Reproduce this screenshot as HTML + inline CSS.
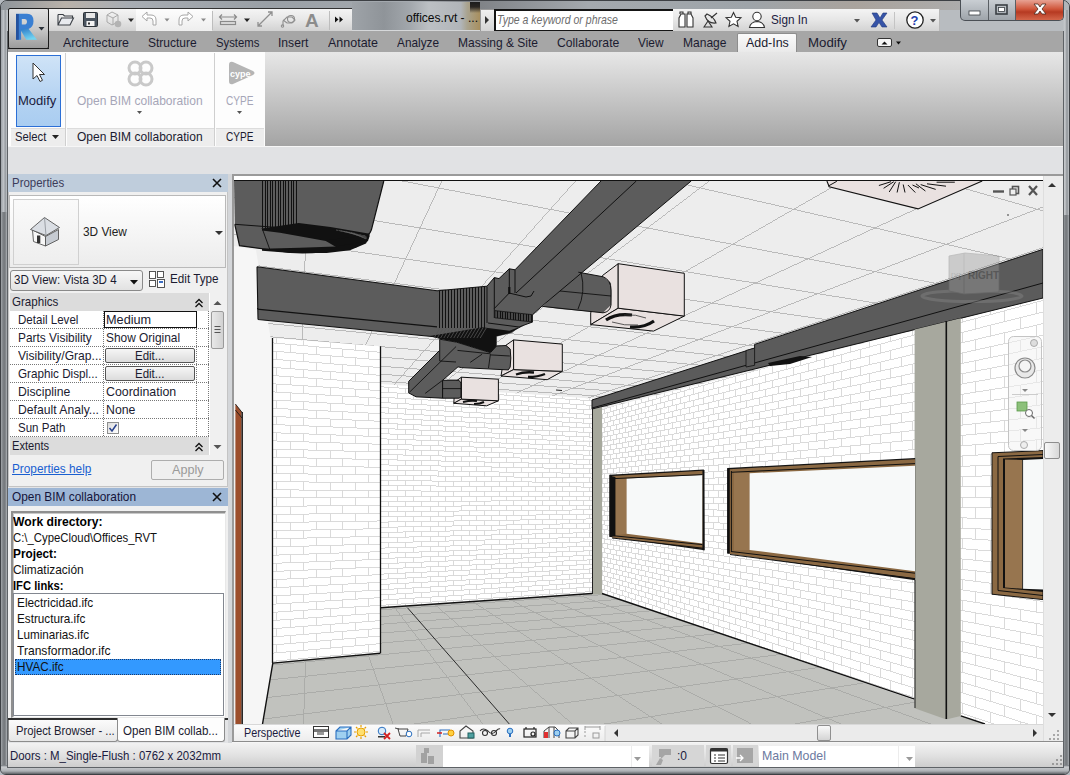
<!DOCTYPE html>
<html><head><meta charset="utf-8">
<style>
html,body{margin:0;padding:0;}
body{width:1070px;height:775px;overflow:hidden;position:relative;background:#b6bbc1;font-family:"Liberation Sans",sans-serif;font-size:12px;color:#1b1b30;}
.a{position:absolute;box-sizing:border-box;}
.t{position:absolute;white-space:nowrap;line-height:14px;}
svg{position:absolute;overflow:visible;}
</style></head><body>
<!-- window frame -->
<div class="a" style="left:0;top:0;width:1070px;height:775px;border:1px solid #3d4044;border-radius:7px 7px 6px 6px;background:linear-gradient(90deg,#9ea3a8 0px,#c3c7cb 3px,#8f9499 4px,#c0c4c8 6px,#b8bcc0 8px,#b8bcc0 1062px,#c6c9cc 1064px,#8e9398 1066px,#c2c5c8 1068px);"></div>
<div class="a" style="left:1px;top:1px;width:1068px;height:9px;border-radius:6px 6px 0 0;background:linear-gradient(90deg,#8f959b 0%,#b9b2aa 6%,#a8adb3 12%,#9aa0a6 25%,#a7acb1 40%,#7d8084 44%,#a4a9ae 55%,#9ea4a9 70%,#a9a39d 80%,#b0b5ba 100%);"></div>
<div class="a" style="left:1px;top:212px;width:6px;height:553px;background:linear-gradient(90deg,#a3a7ab 0px,#7d8185 2px,#75797d 4px,#b0b4b8 6px);"></div>
<div class="a" style="left:1063px;top:215px;width:6px;height:550px;background:linear-gradient(90deg,#b0b4b8 0px,#7d8185 2px,#75797d 4px,#a8acb0 6px);"></div>
<div class="a" style="left:1px;top:765px;width:1068px;height:9px;border-radius:0 0 5px 5px;background:linear-gradient(180deg,#6e7378 0px,#c8cbce 2px,#aeb2b6 6px,#5f6367 9px);"></div>
<div class="a" style="left:7px;top:31px;width:1057px;height:737px;border:1px solid #5e6266;border-top:none;"></div>
<!-- title glass text bg -->
<div class="a" style="left:352px;top:2px;width:128px;height:29px;background:linear-gradient(90deg,#9ea3a8 0%,#8f9499 25%,#a2a7ac 45%,#bcc0c4 60%,#b1b5b9 85%,#a9a38f 90%,#a88f5e 100%);border-bottom:1px solid #d6d8da;"></div>
<div class="a" style="left:470px;top:2px;width:10px;height:11px;background:linear-gradient(180deg,#1c1c1c 0%,#2a2622 45%,rgba(160,140,100,0) 100%);"></div>
<div class="a" style="left:48px;top:8px;width:304px;height:1px;background:#333;"></div>
<div class="t" style="left:406px;top:11px;font-size:12.4px;color:#0a0a0a;transform:scaleX(0.971);transform-origin:0 0;">offices.rvt - ...</div>

<!-- Quick access toolbar -->
<div class="a" style="left:48px;top:9px;width:304px;height:23px;border-bottom:1px solid #9a9a9a;background:linear-gradient(180deg,#f4f4f4 0%,#e8e8e8 45%,#d2d2d2 100%);"></div>
<div class="a" style="left:136px;top:9px;width:76px;height:22px;background:linear-gradient(180deg,#fdfdfd,#eeeeee);"></div>
<div class="a" style="left:212px;top:11px;width:1px;height:19px;background:#bdbdbd;"></div>
<div class="a" style="left:329px;top:11px;width:1px;height:19px;background:#bdbdbd;"></div>
<svg style="left:0;top:0" width="360" height="32" viewBox="0 0 360 32">
 <g fill="none" stroke="#3a3f45" stroke-width="1.1">
  <path d="M58 14.5 h5 l1.5 1.5 h8 v2.5" /><path d="M58 14.5 v10.5 h12 l3.5 -7 h-12 l-3.5 7" fill="#e8eaee"/>
 </g>
 <rect x="83.5" y="12.5" width="14" height="14" rx="1" fill="#4b5560" stroke="#2c3238"/>
 <rect x="86" y="13" width="9" height="5" fill="#e8e8e8"/><rect x="86.5" y="21" width="8" height="5" fill="#f4f4f4"/><rect x="88" y="22.5" width="2" height="2" fill="#333"/>
 <g fill="none" stroke="#a9a9a9" stroke-width="1"><path d="M107 15 l5 -3 l6 3 v7 l-6 3 l-5 -3z M107 15 l6 3 l5 -3 M113 18 v7"/></g>
 <circle cx="118" cy="24" r="3.3" fill="#b3b3b3"/>
 <path d="M128 18.5 h6 l-3 3.5z" fill="#2a2a2a"/>
 <path d="M142 16.5 l5 -4.5 v3 h4 q5 0 5 5 v5 h-3 v-4 q0 -3 -3 -3 h-3 v3z" fill="#fff" stroke="#a6a6a6"/>
 <path d="M164.5 18.5 h5 l-2.5 3z" fill="#8a8a8a"/>
 <path d="M193 16.5 l-5 -4.5 v3 h-4 q-5 0 -5 5 v5 h3 v-4 q0 -3 3 -3 h3 v3z" fill="#fff" stroke="#a6a6a6"/>
 <path d="M201 18.5 h5 l-2.5 3z" fill="#8a8a8a"/>
 <g stroke="#8a8a8a" fill="none" stroke-width="1.2"><path d="M220 17 h16 M222 14.5 l-2.5 2.5 l2.5 2.5 M234 14.5 l2.5 2.5 l-2.5 2.5"/><rect x="220.5" y="21.5" width="15" height="3" fill="#ddd"/></g>
 <path d="M244 18.5 h6 l-3 3.5z" fill="#222"/>
 <g stroke="#8f8f8f" fill="none" stroke-width="1.3"><path d="M258 26 l14 -14 M258 22 v4 h4 M268 12 h4 v4"/></g>
 <g stroke="#8f8f8f" fill="none" stroke-width="1.1"><path d="M283 26 v-5 l4 -4 h5 l3 3 l-3 3 h-5 l-4 -3"/><circle cx="282.5" cy="26" r="1.2"/><circle cx="291" cy="19" r="3.5"/></g>
 <text x="305" y="27" font-family="Liberation Sans" font-weight="bold" font-size="19" fill="#8c8c8c">A</text>
 <path d="M335 16.5 l3.5 3 l-3.5 3z M339.5 16.5 l3.5 3 l-3.5 3z" fill="#111"/>
</svg>

<!-- search -->
<div class="a" style="left:480px;top:9px;width:15px;height:23px;border:1px solid #9a9a9a;background:linear-gradient(180deg,#f0f0f0,#d4d4d4);"></div>
<svg style="left:0;top:0" width="500" height="32"><path d="M485 16 l4 4 l-4 4z" fill="#333"/></svg>
<div class="a" style="left:494px;top:9px;width:180px;height:23px;border:2px solid #151515;border-right:1px solid #151515;background:#fff;"></div>
<div class="t" style="left:497px;top:13px;font-style:italic;color:#6d6d6d;font-size:12.4px;transform:scaleX(0.850);transform-origin:0 0;">Type a keyword or phrase</div>
<!-- infocenter -->
<div class="a" style="left:673px;top:9px;width:267px;height:23px;border-bottom:1px solid #9a9a9a;border-right:1px solid #b8b8b8;background:linear-gradient(180deg,#f4f4f4 0%,#e6e6e6 50%,#d3d3d3 100%);"></div>
<svg style="left:0;top:0" width="960" height="32" viewBox="0 0 960 32">
 <g fill="#fff" stroke="#333" stroke-width="1.1">
  <path d="M679 27 v-9 l2 -4 h4 v13z M687 27 v-13 h4 l2 4 v9z"/><path d="M680 14 v-2 h3 v2 M688 14 v-2 h3 v2" fill="none"/>
 </g>
 <g fill="none" stroke="#333" stroke-width="1.1"><path d="M704 27 l4 -6 l4 6z"/><path d="M705 16 q3 8 11 7 q-2 -6 -9 -9z"/><path d="M711 18 l6 -5"/></g>
 <path d="M733.5 12.5 l2.2 4.8 l5.2 0.5 l-3.9 3.5 l1.1 5.2 l-4.6 -2.7 l-4.6 2.7 l1.1 -5.2 l-3.9 -3.5 l5.2 -0.5z" fill="#fff" stroke="#333" stroke-width="1.1"/>
 <g fill="#fff" stroke="#333" stroke-width="1.1"><circle cx="757" cy="16.5" r="4.2"/><path d="M749.5 27.5 q1 -5.5 7.5 -6 q6.5 0.5 7.5 6z"/></g>
 <path d="M854 19 h6 l-3 3.5z" fill="#555"/>
 <path d="M872 13 h5 l3 5 l3 -5 h4 l-5 7 l5 7 h-5 l-3 -4.5 l-3 4.5 h-5 l5 -7z" fill="#3654a8" stroke="#23397a" stroke-width="0.6"/>
 <rect x="894" y="12" width="1" height="17" fill="#c4c4c4"/>
 <circle cx="915" cy="20" r="8.2" fill="#fff" stroke="#222" stroke-width="1.3"/>
 <text x="910.5" y="25" font-family="Liberation Sans" font-weight="bold" font-size="13" fill="#1f3fb0">?</text>
 <path d="M930 19 h6 l-3 3.5z" fill="#555"/>
</svg>
<div class="t" style="left:771px;top:13px;font-size:12.4px;color:#1b1b40;transform:scaleX(0.944);transform-origin:0 0;">Sign In</div>

<!-- window buttons -->
<div class="a" style="left:960px;top:0;width:104px;height:21px;border:1px solid #4a4f55;border-top:none;border-radius:0 0 5px 5px;background:linear-gradient(180deg,#c9ced3,#9ea4aa);overflow:hidden;">
 <div class="a" style="left:27px;top:0;width:1px;height:20px;background:#5a5f64;"></div>
 <div class="a" style="left:54px;top:0;width:1px;height:20px;background:#5a5f64;"></div>
 <div class="a" style="left:55px;top:0;width:48px;height:20px;background:linear-gradient(180deg,#e8a293 0%,#d0563b 45%,#b63a22 60%,#d4664a 100%);"></div>
</div>
<svg style="left:0;top:0" width="1070" height="24" viewBox="0 0 1070 24">
 <rect x="969" y="11" width="11" height="4" fill="#fff" stroke="#3a3f44" stroke-width="0.8"/>
 <rect x="996" y="5" width="11" height="9" fill="none" stroke="#3a3f44" stroke-width="1.6"/><rect x="998.5" y="7.5" width="6" height="4" fill="#fff" stroke="#3a3f44" stroke-width="0.8"/>
 <path d="M1034 4 h4 l2 3 l2 -3 h4 l-4 5 l4 5 h-4 l-2 -3 l-2 3 h-4 l4 -5z" fill="#fff" stroke="#4a2a20" stroke-width="0.8"/>
</svg>

<!-- tab bar -->
<div class="a" style="left:8px;top:31px;width:1055px;height:21px;background:#a6a6a6;"></div>
<div class="a" style="left:8px;top:48px;width:41px;height:1px;background:#1c1c1c;"></div>
<div class="a" style="left:737px;top:33px;width:60px;height:20px;border:1px solid #8d8d8d;border-bottom:none;border-radius:2px 2px 0 0;background:linear-gradient(180deg,#fafafa,#e9e9e9);"></div>
<div class="t" style="left:63px;top:36px;font-size:12.4px;transform:scaleX(0.998);transform-origin:0 0;">Architecture</div>
<div class="t" style="left:148px;top:36px;font-size:12.4px;transform:scaleX(0.969);transform-origin:0 0;">Structure</div>
<div class="t" style="left:216px;top:36px;font-size:12.4px;transform:scaleX(0.913);transform-origin:0 0;">Systems</div>
<div class="t" style="left:278px;top:36px;font-size:12.4px;transform:scaleX(0.977);transform-origin:0 0;">Insert</div>
<div class="t" style="left:328px;top:36px;font-size:12.4px;transform:scaleX(1.008);transform-origin:0 0;">Annotate</div>
<div class="t" style="left:397px;top:36px;font-size:12.4px;transform:scaleX(0.953);transform-origin:0 0;">Analyze</div>
<div class="t" style="left:458px;top:36px;font-size:12.4px;transform:scaleX(0.968);transform-origin:0 0;">Massing &amp; Site</div>
<div class="t" style="left:557px;top:36px;font-size:12.4px;transform:scaleX(0.983);transform-origin:0 0;">Collaborate</div>
<div class="t" style="left:638px;top:36px;font-size:12.4px;transform:scaleX(0.957);transform-origin:0 0;">View</div>
<div class="t" style="left:683px;top:36px;font-size:12.4px;transform:scaleX(0.971);transform-origin:0 0;">Manage</div>
<div class="t" style="left:746px;top:36px;font-size:12.4px;transform:scaleX(1.002);transform-origin:0 0;">Add-Ins</div>
<div class="t" style="left:808px;top:36px;font-size:12.4px;transform:scaleX(1.068);transform-origin:0 0;">Modify</div>
<div class="a" style="left:877px;top:38px;width:15px;height:9px;border:1px solid #333;border-radius:2px;background:#f4f4f4;"></div>
<svg style="left:0;top:0" width="910" height="52"><path d="M881.5 44.5 l3 -3 l3 3z" fill="#111"/><path d="M896 41.5 h5 l-2.5 3z" fill="#111"/></svg>

<!-- R app button -->
<div class="a" style="left:8px;top:8px;width:41px;height:41px;border:1px solid #1c1c1c;border-radius:2px;background:linear-gradient(180deg,#e2e2e2 0%,#c9c9c9 50%,#9c9c9c 100%);"></div>
<svg style="left:0;top:0" width="60" height="60" viewBox="0 0 60 60">
 <defs><linearGradient id="rleg" x1="0" y1="0" x2="0.4" y2="1"><stop offset="0" stop-color="#2f7cc8"/><stop offset="1" stop-color="#72d4f2"/></linearGradient></defs>
 <path d="M16 13.7 H27 Q33.5 13.7 33.5 21 Q33.5 27 28.5 29 L21.1 31 V39.8 H16 Z M21.8 18.9 V24.4 H25 Q27 24.4 27 21.6 Q27 18.9 25 18.9 Z" fill="#3a7fd2" fill-rule="evenodd"/>
 <path d="M16 14 h2.8 v25.8 h-2.8z" fill="#24529e"/>
 <path d="M21.1 29 L28.5 28.8 L37 39.8 H26.3 L21.1 31z" fill="url(#rleg)"/>
 <path d="M38.5 27 h6 l-3 3.5z" fill="#2a3038"/>
</svg>

<!-- ribbon -->
<div class="a" style="left:8px;top:52px;width:1055px;height:95px;background:linear-gradient(180deg,#e7e7e7 0%,#a3a3a3 100%);"></div>
<div class="a" style="left:8px;top:52px;width:257px;height:94px;background:#fdfdfd;"></div>
<div class="a" style="left:8px;top:146px;width:1055px;height:1px;background:#f6f6f6;"></div>
<div class="a" style="left:11px;top:128px;width:54px;height:18px;background:#ededed;border-top:1px solid #dcdcdc;"></div>
<div class="a" style="left:67px;top:128px;width:147px;height:18px;background:#ededed;border-top:1px solid #dcdcdc;"></div>
<div class="a" style="left:216px;top:128px;width:48px;height:18px;background:#ededed;border-top:1px solid #dcdcdc;"></div>
<div class="a" style="left:65px;top:53px;width:1px;height:93px;background:#cfcfcf;"></div>
<div class="a" style="left:214px;top:53px;width:1px;height:93px;background:#cfcfcf;"></div>
<div class="a" style="left:16px;top:55px;width:45px;height:72px;border:1px solid #2b6fd6;background:linear-gradient(180deg,#cfe3f7 0%,#b5d3f2 60%,#a9cdf1 100%);"></div>
<svg style="left:0;top:0" width="270" height="150" viewBox="0 0 270 150">
 <path d="M33 63 v16 l4 -3.5 l3 6 l2.5 -1.2 l-3 -5.8 h5z" fill="#fff" stroke="#333" stroke-width="1"/>
 <g fill="none" stroke="#c9c9c9" stroke-width="3"><circle cx="135" cy="68" r="6"/><circle cx="146" cy="68" r="6"/><circle cx="135" cy="79" r="6"/><circle cx="146" cy="79" r="6"/></g>
 <path d="M229 65 q0 -4 4 -3 l20 9 q3 2 0 4 l-20 9 q-4 1 -4 -3z" fill="#b5b5b5"/>
 <text x="230" y="77" font-family="Liberation Sans" font-size="9" font-weight="bold" fill="#fff">cype</text>
 <path d="M137 111 h5 l-2.5 3z" fill="#555"/>
 <path d="M237 111 h5 l-2.5 3z" fill="#555"/>
 <path d="M52 135 h7 l-3.5 4z" fill="#222"/>
</svg>
<div class="t" style="left:18px;top:94px;font-size:12.4px;color:#1b1b40;transform:scaleX(1.052);transform-origin:0 0;">Modify</div>
<div class="t" style="left:77px;top:94px;font-size:12.4px;color:#a6a6b8;transform:scaleX(0.970);transform-origin:0 0;">Open BIM collaboration</div>
<div class="t" style="left:226px;top:94px;font-size:12.4px;color:#a6a6b8;transform:scaleX(0.815);transform-origin:0 0;">CYPE</div>
<div class="t" style="left:15px;top:130px;font-size:12.4px;transform:scaleX(0.909);transform-origin:0 0;">Select</div>
<div class="t" style="left:77px;top:130px;font-size:12.4px;transform:scaleX(0.970);transform-origin:0 0;">Open BIM collaboration</div>
<div class="t" style="left:226px;top:130px;font-size:12.4px;transform:scaleX(0.815);transform-origin:0 0;">CYPE</div>

<!-- strip under ribbon -->
<div class="a" style="left:8px;top:147px;width:1055px;height:27px;background:#e1e2e4;"></div>

<!-- left dock background -->
<div class="a" style="left:8px;top:174px;width:224px;height:569px;background:#e3e4e6;"></div>
<div class="a" style="left:228px;top:174px;width:4px;height:569px;background:#d4d6d9;"></div>
<!-- Properties -->
<div class="a" style="left:8px;top:174px;width:220px;height:18px;background:#bfcddc;"></div>
<div class="t" style="left:12px;top:176px;font-size:12.2px;color:#3c3c5a;transform:scaleX(0.940);transform-origin:0 0;">Properties</div>
<svg style="left:0;top:0" width="240" height="200"><path d="M213 179 l8 8 M221 179 l-8 8" stroke="#111" stroke-width="1.6"/></svg>
<div class="a" style="left:8px;top:192px;width:220px;height:295px;background:#f0f0f0;border:1px solid #c4c4c4;border-top:none;"></div>
<div class="a" style="left:9px;top:195px;width:217px;height:73px;border:1px solid #b9b9b9;background:linear-gradient(180deg,#ffffff,#ececec);"></div>
<div class="a" style="left:13px;top:199px;width:66px;height:66px;border:1px solid #d0d0d0;background:linear-gradient(180deg,#fafafa,#eeeeee);"></div>
<svg style="left:0;top:0" width="240" height="300" viewBox="0 0 240 300">
 <path d="M32.5 230 L45.5 236.5 V246 L33.5 241.5z" fill="#f7f7f7" stroke="#555" stroke-width="0.9"/>
 <path d="M45.5 236.5 L58.5 229.5 V239.5 L45.5 246z" fill="#c6cbd2" stroke="#555" stroke-width="0.9"/>
 <path d="M30.5 229.5 L44.5 217.5 L59.5 227.5 L46 235.5z" fill="#dadee4" stroke="#555" stroke-width="0.9"/>
 <path d="M44.5 217.5 L46 235.5" stroke="#8a8f96" stroke-width="0.8"/>
 <rect x="37" y="235.5" width="3.3" height="7.5" fill="#333"/>
 <path d="M215 231 h8 l-4 4z" fill="#333"/>
 <g fill="#fff" stroke="#444" stroke-width="0.9"><rect x="149.5" y="271.5" width="6" height="7"/><rect x="149.5" y="280.5" width="6" height="6"/><rect x="157.5" y="271.5" width="6" height="6"/><rect x="157.5" y="279.5" width="7" height="8"/></g>
 <rect x="159" y="281" width="4" height="2" fill="#3b6dc2"/>
</svg>
<div class="t" style="left:83px;top:225px;font-size:12.2px;color:#222;transform:scaleX(0.972);transform-origin:0 0;">3D View</div>
<div class="a" style="left:10px;top:270px;width:133px;height:21px;border:1px solid #8a8a8a;border-radius:3px;background:linear-gradient(180deg,#f7f7f7,#e2e2e2);"></div>
<svg style="left:0;top:0" width="240" height="300"><path d="M130 280 h8 l-4 4.5z" fill="#111"/></svg>
<div class="t" style="left:14px;top:273px;font-size:12.2px;transform:scaleX(0.951);transform-origin:0 0;">3D View: Vista 3D 4</div>
<div class="t" style="left:170px;top:272px;font-size:12.2px;transform:scaleX(0.959);transform-origin:0 0;">Edit Type</div>
<!-- grid -->
<div class="a" style="left:10px;top:293px;width:200px;height:162px;background:#fff;"></div>
<div class="a" style="left:10px;top:293px;width:199px;height:18px;background:#dcdcdc;"></div>
<div class="a" style="left:10px;top:437px;width:199px;height:18px;background:#dcdcdc;"></div>
<div class="t" style="left:12px;top:295px;font-size:12.2px;transform:scaleX(0.949);transform-origin:0 0;">Graphics</div>
<div class="t" style="left:12px;top:439px;font-size:12.2px;transform:scaleX(0.913);transform-origin:0 0;">Extents</div>
<svg style="left:0;top:0" width="240" height="460" viewBox="0 0 240 460">
 <path d="M195.5 303 l3.5 -3.5 l3.5 3.5 M195.5 307 l3.5 -3.5 l3.5 3.5" fill="none" stroke="#111" stroke-width="1.3"/>
 <path d="M195.5 447 l3.5 -3.5 l3.5 3.5 M195.5 451 l3.5 -3.5 l3.5 3.5" fill="none" stroke="#111" stroke-width="1.3"/>
 <g stroke="#777" stroke-width="1" stroke-dasharray="1 1">
  <path d="M10 328.5 H209 M10 346.5 H209 M10 364.5 H209 M10 382.5 H209 M10 400.5 H209 M10 418.5 H209 M10 436.5 H209"/>
  <path d="M103.5 311 V437 M196.5 311 V437 M208.5 311 V437"/>
 </g>
</svg>
<div class="a" style="left:104px;top:311px;width:93px;height:17px;border:1px solid #111;background:#fff;"></div>
<div class="t" style="left:18px;top:313px;font-size:12.2px;transform:scaleX(0.948);transform-origin:0 0;">Detail Level</div>
<div class="t" style="left:106px;top:313px;font-size:12.2px;transform:scaleX(1.042);transform-origin:0 0;">Medium</div>
<div class="t" style="left:18px;top:331px;font-size:12.2px;transform:scaleX(0.976);transform-origin:0 0;">Parts Visibility</div>
<div class="t" style="left:106px;top:331px;font-size:12.2px;transform:scaleX(0.977);transform-origin:0 0;">Show Original</div>
<div class="t" style="left:18px;top:349px;font-size:12.2px;transform:scaleX(0.990);transform-origin:0 0;">Visibility/Grap...</div>
<div class="a" style="left:105px;top:348px;width:90px;height:15px;border:1px solid #555;border-radius:2px;background:linear-gradient(180deg,#f6f6f6,#dcdcdc);"></div>
<div class="t" style="left:135px;top:349px;font-size:12.2px;transform:scaleX(0.943);transform-origin:0 0;">Edit...</div>
<div class="t" style="left:18px;top:367px;font-size:12.2px;transform:scaleX(0.958);transform-origin:0 0;">Graphic Displ...</div>
<div class="a" style="left:105px;top:366px;width:90px;height:15px;border:1px solid #555;border-radius:2px;background:linear-gradient(180deg,#f6f6f6,#dcdcdc);"></div>
<div class="t" style="left:135px;top:367px;font-size:12.2px;transform:scaleX(0.943);transform-origin:0 0;">Edit...</div>
<div class="t" style="left:18px;top:385px;font-size:12.2px;transform:scaleX(1.001);transform-origin:0 0;">Discipline</div>
<div class="t" style="left:106px;top:385px;font-size:12.2px;transform:scaleX(1.016);transform-origin:0 0;">Coordination</div>
<div class="t" style="left:18px;top:403px;font-size:12.2px;transform:scaleX(0.999);transform-origin:0 0;">Default Analy...</div>
<div class="t" style="left:106px;top:403px;font-size:12.2px;transform:scaleX(1.009);transform-origin:0 0;">None</div>
<div class="t" style="left:18px;top:421px;font-size:12.2px;transform:scaleX(0.947);transform-origin:0 0;">Sun Path</div>
<div class="a" style="left:107px;top:422px;width:12px;height:12px;border:1px solid #8e8f8f;background:linear-gradient(135deg,#dcdcdc,#fff);"></div>
<svg style="left:0;top:0" width="240" height="460"><path d="M109.5 428 l2.5 3 l4.5 -6.5" fill="none" stroke="#27408b" stroke-width="1.5"/></svg>
<!-- prop scrollbar -->
<div class="a" style="left:210px;top:293px;width:15px;height:162px;background:#f0f0f0;"></div>
<div class="a" style="left:211px;top:311px;width:13px;height:38px;border:1px solid #9a9a9a;border-radius:2px;background:linear-gradient(90deg,#e8e8e8,#d2d2d2);"></div>
<svg style="left:0;top:0" width="240" height="460">
 <path d="M213.5 305 l4 -4 l4 4z" fill="#555"/><path d="M213.5 445 l4 4 l4 -4z" fill="#555"/>
 <path d="M214.5 326.5 h6 M214.5 329.5 h6 M214.5 332.5 h6" stroke="#555" stroke-width="1"/>
</svg>
<div class="t" style="left:12px;top:462px;font-size:12.2px;color:#1a5fd0;text-decoration:underline;transform:scaleX(0.968);transform-origin:0 0;">Properties help</div>
<div class="a" style="left:151px;top:460px;width:73px;height:20px;border:1px solid #adadad;border-radius:2px;background:#efefef;"></div>
<div class="t" style="left:172px;top:463px;font-size:12.2px;color:#9a9a9a;transform:scaleX(1.033);transform-origin:0 0;">Apply</div>

<!-- Open BIM panel -->
<div class="a" style="left:8px;top:488px;width:220px;height:18px;background:#9db6d5;"></div>
<div class="t" style="left:12px;top:490px;font-size:12.2px;color:#14143a;transform:scaleX(0.974);transform-origin:0 0;">Open BIM collaboration</div>
<svg style="left:0;top:0" width="240" height="520"><path d="M213 493 l8 8 M221 493 l-8 8" stroke="#111" stroke-width="1.6"/></svg>
<div class="a" style="left:8px;top:506px;width:220px;height:213px;background:#f0f0f0;"></div>
<div class="a" style="left:11px;top:511px;width:215px;height:207px;border:2px solid #8f8f8f;border-right:1px solid #e8e8e8;border-bottom:1px solid #e8e8e8;background:#fff;box-shadow:inset 1px 1px 0 #c8c8c8;"></div>
<div class="t" style="left:13px;top:515px;font-size:12.2px;font-weight:bold;color:#000;transform:scaleX(0.997);transform-origin:0 0;">Work directory:</div>
<div class="t" style="left:13px;top:531px;font-size:12.2px;color:#111;transform:scaleX(0.931);transform-origin:0 0;">C:\_CypeCloud\Offices_RVT</div>
<div class="t" style="left:13px;top:547px;font-size:12.2px;font-weight:bold;color:#000;transform:scaleX(0.969);transform-origin:0 0;">Project:</div>
<div class="t" style="left:13px;top:563px;font-size:12.2px;color:#111;transform:scaleX(0.974);transform-origin:0 0;">Climatización</div>
<div class="t" style="left:13px;top:579px;font-size:12.2px;font-weight:bold;color:#000;transform:scaleX(0.919);transform-origin:0 0;">IFC links:</div>
<div class="a" style="left:13px;top:593px;width:211px;height:123px;border:1px solid #828790;background:#fff;"></div>
<div class="t" style="left:17px;top:596px;font-size:12.2px;color:#111;transform:scaleX(0.971);transform-origin:0 0;">Electricidad.ifc</div>
<div class="t" style="left:17px;top:612px;font-size:12.2px;color:#111;transform:scaleX(0.960);transform-origin:0 0;">Estructura.ifc</div>
<div class="t" style="left:17px;top:628px;font-size:12.2px;color:#111;transform:scaleX(0.958);transform-origin:0 0;">Luminarias.ifc</div>
<div class="t" style="left:17px;top:644px;font-size:12.2px;color:#111;transform:scaleX(0.990);transform-origin:0 0;">Transformador.ifc</div>
<div class="a" style="left:15px;top:659px;width:206px;height:16px;background:#3399ff;border:1px dotted #1d3a6a;"></div>
<div class="t" style="left:17px;top:660px;font-size:12.2px;color:#111;transform:scaleX(0.960);transform-origin:0 0;">HVAC.ifc</div>
<!-- dock tabs -->
<div class="a" style="left:8px;top:718px;width:220px;height:25px;background:#e3e4e6;"></div>
<div class="a" style="left:8px;top:718px;width:220px;height:2px;background:#2e2e2e;"></div>
<div class="a" style="left:8px;top:720px;width:110px;height:22px;border:1px solid #8c8c8c;border-top:none;border-radius:0 0 3px 3px;background:linear-gradient(180deg,#fbfbfb,#e6e6e6);"></div>
<div class="a" style="left:117px;top:718px;width:108px;height:24px;border:1px solid #8c8c8c;border-top:none;border-radius:0 0 3px 3px;background:#fdfdfd;"></div>
<div class="t" style="left:16px;top:724px;font-size:12.2px;transform:scaleX(0.922);transform-origin:0 0;">Project Browser - ...</div>
<div class="t" style="left:123px;top:724px;font-size:12.2px;transform:scaleX(0.947);transform-origin:0 0;">Open BIM collab...</div>

<!-- viewport frame -->
<div class="a" style="left:232px;top:174px;width:831px;height:569px;background:#f0f0f0;border:2px solid #9a9a9a;border-right:none;"></div>
<div class="a" style="left:234px;top:176px;width:809px;height:5px;background:#fff;border-bottom:1px solid #111;"></div>
<svg style="left:0;top:0" width="1070" height="775" viewBox="0 0 1070 775"><defs><clipPath id="vpc"><rect x="234" y="181" width="809" height="543"/></clipPath></defs><g clip-path="url(#vpc)"><rect x="234" y="181" width="809" height="543" fill="#ededed"/>
<path d="M234.0 487.7 L250.2 489.5 M234.0 487.3 L252.4 489.5 M234.0 486.9 L254.7 489.5 M234.0 486.5 L256.9 489.5 M234.0 486.0 L259.2 489.5 M234.0 485.5 L261.4 489.5 M234.0 484.8 L263.6 489.5 M234.0 484.1 L265.9 489.5 M234.0 483.3 L268.1 489.5 M234.0 482.4 L270.3 489.5 M234.0 481.3 L272.5 489.5 M234.0 479.9 L274.7 489.5 M234.0 478.3 L276.9 489.5 M234.0 476.2 L279.1 489.6 M234.0 473.5 L281.3 489.6 M234.0 469.9 L283.5 489.6 M234.0 464.9 L285.6 489.6 M234.0 457.3 L287.8 489.6 M234.0 444.5 L290.0 489.6 M234.0 418.3 L292.1 489.6 M234.0 334.6 L294.3 489.6 M308.0 181.0 L296.4 489.6 M441.8 181.0 L298.6 489.6 M575.5 181.0 L300.7 489.6 M709.3 181.0 L302.9 489.6 M843.0 181.0 L305.0 489.6 M976.8 181.0 L307.1 489.6 M1043.0 207.0 L309.2 489.6 M1043.0 247.6 L311.3 489.6 M1043.0 278.1 L313.4 489.7 M1043.0 302.0 L315.5 489.7 M1043.0 321.1 L317.6 489.7 M1043.0 336.7 L319.7 489.7 M1043.0 349.8 L321.8 489.7 M1043.0 360.8 L323.9 489.7 M1043.0 370.3 L326.0 489.7 M1043.0 378.6 L328.0 489.7 M1043.0 385.8 L330.1 489.7 M1043.0 392.2 L332.2 489.7 M1043.0 397.8 L334.2 489.7 M1043.0 402.9 L336.3 489.7 M1043.0 407.5 L338.3 489.7 M1043.0 411.6 L340.4 489.7 M1043.0 415.4 L342.4 489.7 M1043.0 418.8 L344.4 489.7 M1043.0 421.9 L346.5 489.7 M1043.0 424.8 L348.5 489.8 M1043.0 427.5 L350.5 489.8 M1043.0 430.0 L352.5 489.8 M1043.0 432.3 L354.5 489.8 M938.0 181.0 L1043.0 210.9 M670.2 181.0 L1043.0 266.5 M402.4 181.0 L1043.0 303.9 M234.0 197.4 L1043.0 330.7 M234.0 234.1 L1043.0 351.0 M234.0 262.7 L1043.0 366.7 M234.0 285.6 L1043.0 379.4 M234.0 304.5 L1043.0 389.8 M234.0 320.2 L1043.0 398.4 M234.0 333.5 L1043.0 405.8 M234.0 344.9 L1043.0 412.1 M234.0 354.8 L1043.0 417.5 M234.0 363.5 L1043.0 422.3 M234.0 371.2 L1043.0 426.6 M234.0 378.0 L1043.0 430.3 M234.0 384.1 L1043.0 433.7 M234.0 389.6 L1043.0 436.7 M234.0 394.6 L1043.0 439.5 M234.0 399.1 L1043.0 442.0 M234.0 403.2 L1043.0 444.2 M234.0 407.0 L1043.0 446.3 M234.0 410.5 L1043.0 448.3 M234.0 413.7 L1043.0 450.0 M234.0 416.7 L1043.0 451.7 M234.0 419.5 L1043.0 453.2 M234.0 422.1 L1043.0 454.6 M234.0 424.5 L1043.0 456.0 M234.0 426.7 L1043.0 457.2 M234.0 428.9 L1043.0 458.4 M234.0 430.8 L1043.0 459.5 M234.0 432.7 L1043.0 460.5 M234.0 434.5 L1043.0 461.5 M234.0 436.1 L1043.0 462.4 M234.0 437.7 L1043.0 463.3 M234.0 439.2 L1043.0 464.1 M234.0 440.6 L1043.0 464.9 M234.0 442.0 L1043.0 465.6 M234.0 443.3 L1043.0 466.3 M234.0 444.5 L1043.0 467.0 M234.0 445.6 L1043.0 467.6 M234.0 446.8 L1043.0 468.2" stroke="#b4b4b4" stroke-width="0.9" fill="none" shape-rendering="crispEdges"/>
<path d="M262.5 724.0 L272.8 663.1 L380.3 653.2 L380.3 607.8 L592.0 593.5 L602.0 593.5 L985.0 724.0Z" fill="#c1c2be"/>
<clipPath id="flc"><path d="M262.5 724 L272.8 663.1 L380.3 653.2 L380.3 607.8 L592 593.5 L602 593.5 L985 724Z"/></clipPath>
<g clip-path="url(#flc)">
<path d="M258.1 502.1 L234.0 504.5 M260.2 502.1 L234.0 504.8 M262.3 502.1 L234.0 505.1 M264.4 502.1 L234.0 505.5 M266.4 502.1 L234.0 505.8 M268.5 502.1 L234.0 506.3 M270.6 502.1 L234.0 506.7 M272.6 502.1 L234.0 507.2 M274.7 502.1 L234.0 507.8 M276.7 502.1 L234.0 508.4 M278.8 502.1 L234.0 509.1 M280.8 502.1 L234.0 509.9 M282.8 502.1 L234.0 510.9 M284.9 502.1 L234.0 511.9 M286.9 502.1 L234.0 513.1 M288.9 502.0 L234.0 514.6 M290.9 502.0 L234.0 516.4 M292.9 502.0 L234.0 518.5 M295.0 502.0 L234.0 521.1 M297.0 502.0 L234.0 524.5 M299.0 502.0 L234.0 529.1 M300.9 502.0 L234.0 535.4 M302.9 502.0 L234.0 544.8 M304.9 502.0 L234.0 560.3 M306.9 502.0 L234.0 590.7 M308.9 502.0 L234.0 677.1 M310.8 502.0 L303.5 724.0 M312.8 502.0 L393.1 724.0 M314.8 502.0 L482.7 724.0 M316.7 502.0 L572.3 724.0 M318.7 502.0 L661.8 724.0 M320.6 502.0 L751.4 724.0 M322.6 502.0 L841.0 724.0 M324.5 501.9 L930.6 724.0 M326.4 501.9 L1020.1 724.0 M328.4 501.9 L1043.0 705.0 M330.3 501.9 L1043.0 684.1 M332.2 501.9 L1043.0 666.9 M334.1 501.9 L1043.0 652.7 M336.0 501.9 L1043.0 640.6 M337.9 501.9 L1043.0 630.3 M339.8 501.9 L1043.0 621.4 M341.7 501.9 L1043.0 613.5 M343.6 501.9 L1043.0 606.7 M345.5 501.9 L1043.0 600.5 M347.4 501.9 L1043.0 595.1 M349.3 501.9 L1043.0 590.1 M351.2 501.9 L1043.0 585.7 M353.1 501.9 L1043.0 581.6 M354.9 501.9 L1043.0 577.9 M356.8 501.9 L1043.0 574.6 M358.7 501.8 L1043.0 571.4 M360.5 501.8 L1043.0 568.6 M362.4 501.8 L1043.0 565.9 M364.2 501.8 L1043.0 563.4 M366.1 501.8 L1043.0 561.1 M367.9 501.8 L1043.0 559.0 M369.7 501.8 L1043.0 557.0 M371.6 501.8 L1043.0 555.1 M373.4 501.8 L1043.0 553.4 M234.0 546.4 L1043.0 524.3 M234.0 547.6 L1043.0 524.9 M234.0 548.8 L1043.0 525.6 M234.0 550.1 L1043.0 526.3 M234.0 551.4 L1043.0 527.1 M234.0 552.9 L1043.0 527.8 M234.0 554.4 L1043.0 528.7 M234.0 555.9 L1043.0 529.5 M234.0 557.6 L1043.0 530.4 M234.0 559.3 L1043.0 531.4 M234.0 561.2 L1043.0 532.4 M234.0 563.2 L1043.0 533.5 M234.0 565.3 L1043.0 534.7 M234.0 567.5 L1043.0 535.9 M234.0 569.9 L1043.0 537.2 M234.0 572.4 L1043.0 538.6 M234.0 575.2 L1043.0 540.2 M234.0 578.1 L1043.0 541.8 M234.0 581.3 L1043.0 543.5 M234.0 584.7 L1043.0 545.4 M234.0 588.5 L1043.0 547.5 M234.0 592.5 L1043.0 549.7 M234.0 596.9 L1043.0 552.2 M234.0 601.8 L1043.0 554.9 M234.0 607.2 L1043.0 557.8 M234.0 613.1 L1043.0 561.1 M234.0 619.7 L1043.0 564.8 M234.0 627.2 L1043.0 568.9 M234.0 635.5 L1043.0 573.5 M234.0 645.1 L1043.0 578.7 M234.0 656.0 L1043.0 584.8 M234.0 668.7 L1043.0 591.8 M234.0 683.6 L1043.0 600.0 M234.0 701.3 L1043.0 609.8 M234.0 722.7 L1043.0 621.6 M413.8 724.0 L1043.0 636.2 M604.2 724.0 L1043.0 654.6 M794.6 724.0 L1043.0 678.7 M985.0 724.0 L1043.0 711.5" stroke="#a8aaa6" stroke-width="0.9" fill="none" shape-rendering="crispEdges"/>
<path d="M407.5 607.8 L509.3 724.0" stroke="#2a2a2a" stroke-width="1" fill="none"/>
</g>
<path d="M234.0 246.0 L256.0 250.0 L270.6 338.0 L272.5 338.0 L272.5 663.0 L262.5 724.0 L234.0 724.0Z" fill="#f6f6f6"/>
<path d="M272.5 338.0 L380.5 346.3 L380.5 653.2 L272.8 663.1Z" fill="#ffffff"/>
<clipPath id="pw"><path d="M272.5 338.0 L380.5 346.3 L380.5 653.2 L272.8 663.1Z"/></clipPath>
<path clip-path="url(#pw)" d="M248.3 315.9 L473.0 338.6 M248.3 324.2 L473.0 345.9 M248.3 332.5 L473.0 353.1 M248.3 340.8 L473.0 360.4 M248.3 349.1 L473.0 367.6 M248.3 357.3 L473.0 374.8 M248.3 365.6 L473.0 382.1 M248.3 373.9 L473.0 389.3 M248.3 382.2 L473.0 396.6 M248.3 390.4 L473.0 403.8 M248.3 398.7 L473.0 411.0 M248.3 407.0 L473.0 418.3 M248.3 415.3 L473.0 425.5 M248.3 423.5 L473.0 432.8 M248.3 431.8 L473.0 440.0 M248.3 440.1 L473.0 447.2 M248.3 448.4 L473.0 454.5 M248.3 456.7 L473.0 461.7 M248.3 464.9 L473.0 469.0 M248.3 473.2 L473.0 476.2 M248.3 481.5 L473.0 483.4 M248.3 489.8 L473.0 490.7 M248.3 498.0 L473.0 497.9 M248.3 506.3 L473.0 505.2 M248.3 514.6 L473.0 512.4 M248.3 522.9 L473.0 519.6 M248.3 531.2 L473.0 526.9 M248.3 539.4 L473.0 534.1 M248.3 547.7 L473.0 541.4 M248.3 556.0 L473.0 548.6 M248.3 564.3 L473.0 555.8 M248.3 572.5 L473.0 563.1 M248.3 580.8 L473.0 570.3 M248.3 589.1 L473.0 577.6 M248.3 597.4 L473.0 584.8 M248.3 605.7 L473.0 592.0 M248.3 613.9 L473.0 599.3 M248.3 622.2 L473.0 606.5 M248.3 630.5 L473.0 613.7 M248.3 638.8 L473.0 621.0 M248.3 647.0 L473.0 628.2 M248.3 655.3 L473.0 635.5 M248.3 663.6 L473.0 642.7 M248.3 671.9 L473.0 649.9 M248.3 680.2 L473.0 657.2 M248.3 688.4 L473.0 664.4 M248.3 696.7 L473.0 671.7 M219.3 313.0 L219.3 321.4 M248.3 315.9 L248.3 324.2 M276.4 318.8 L276.4 326.9 M303.6 321.5 L303.6 329.6 M330.0 324.2 L330.0 332.1 M355.6 326.8 L355.6 334.6 M380.5 329.3 L380.5 337.0 M404.6 331.7 L404.6 339.3 M428.0 334.1 L428.0 341.6 M450.8 336.4 L450.8 343.8 M473.0 338.6 L473.0 345.9 M233.9 322.8 L233.9 331.2 M262.4 325.6 L262.4 333.8 M290.1 328.3 L290.1 336.3 M316.9 330.8 L316.9 338.8 M342.9 333.3 L342.9 341.2 M368.1 335.8 L368.1 343.5 M392.6 338.1 L392.6 345.7 M416.4 340.4 L416.4 347.9 M439.5 342.7 L439.5 350.1 M462.0 344.8 L462.0 352.1 M483.8 346.9 L483.8 354.1 M219.3 329.8 L219.3 338.2 M248.3 332.5 L248.3 340.8 M276.4 335.1 L276.4 343.2 M303.6 337.6 L303.6 345.6 M330.0 340.0 L330.0 347.9 M355.6 342.4 L355.6 350.1 M380.5 344.6 L380.5 352.3 M404.6 346.8 L404.6 354.4 M428.0 349.0 L428.0 356.4 M450.8 351.1 L450.8 358.4 M473.0 353.1 L473.0 360.4 M233.9 339.5 L233.9 347.9 M262.4 342.0 L262.4 350.2 M290.1 344.4 L290.1 352.5 M316.9 346.8 L316.9 354.7 M342.9 349.0 L342.9 356.9 M368.1 351.2 L368.1 358.9 M392.6 353.4 L392.6 361.0 M416.4 355.4 L416.4 362.9 M439.5 357.4 L439.5 364.8 M462.0 359.4 L462.0 366.7 M483.8 361.3 L483.8 368.5 M219.3 346.7 L219.3 355.1 M248.3 349.1 L248.3 357.3 M276.4 351.4 L276.4 359.5 M303.6 353.6 L303.6 361.6 M330.0 355.8 L330.0 363.7 M355.6 357.9 L355.6 365.7 M380.5 360.0 L380.5 367.6 M404.6 362.0 L404.6 369.5 M428.0 363.9 L428.0 371.3 M450.8 365.8 L450.8 373.1 M473.0 367.6 L473.0 374.8 M233.9 356.2 L233.9 364.6 M262.4 358.4 L262.4 366.6 M290.1 360.6 L290.1 368.7 M316.9 362.7 L316.9 370.6 M342.9 364.7 L342.9 372.5 M368.1 366.7 L368.1 374.4 M392.6 368.6 L392.6 376.2 M416.4 370.4 L416.4 377.9 M439.5 372.2 L439.5 379.6 M462.0 374.0 L462.0 381.3 M483.8 375.7 L483.8 382.9 M219.3 363.5 L219.3 371.9 M248.3 365.6 L248.3 373.9 M276.4 367.7 L276.4 375.8 M303.6 369.7 L303.6 377.7 M330.0 371.6 L330.0 379.5 M355.6 373.5 L355.6 381.3 M380.5 375.3 L380.5 383.0 M404.6 377.1 L404.6 384.6 M428.0 378.8 L428.0 386.2 M450.8 380.5 L450.8 387.8 M473.0 382.1 L473.0 389.3 M233.9 372.9 L233.9 381.2 M262.4 374.9 L262.4 383.1 M290.1 376.8 L290.1 384.8 M316.9 378.6 L316.9 386.6 M342.9 380.4 L342.9 388.2 M368.1 382.1 L368.1 389.8 M392.6 383.8 L392.6 391.4 M416.4 385.4 L416.4 392.9 M439.5 387.0 L439.5 394.4 M462.0 388.6 L462.0 395.9 M483.8 390.1 L483.8 397.3 M219.3 380.3 L219.3 388.7 M248.3 382.2 L248.3 390.4 M276.4 384.0 L276.4 392.1 M303.6 385.7 L303.6 393.7 M330.0 387.4 L330.0 395.3 M355.6 389.0 L355.6 396.8 M380.5 390.6 L380.5 398.3 M404.6 392.2 L404.6 399.7 M428.0 393.7 L428.0 401.1 M450.8 395.1 L450.8 402.5 M473.0 396.6 L473.0 403.8 M233.9 389.6 L233.9 397.9 M262.4 391.3 L262.4 399.5 M290.1 392.9 L290.1 401.0 M316.9 394.5 L316.9 402.5 M342.9 396.1 L342.9 403.9 M368.1 397.6 L368.1 405.3 M392.6 399.0 L392.6 406.6 M416.4 400.4 L416.4 407.9 M439.5 401.8 L439.5 409.2 M462.0 403.1 L462.0 410.4 M483.8 404.4 L483.8 411.6 M219.3 397.1 L219.3 405.5 M248.3 398.7 L248.3 407.0 M276.4 400.3 L276.4 408.4 M303.6 401.8 L303.6 409.8 M330.0 403.2 L330.0 411.1 M355.6 404.6 L355.6 412.4 M380.5 406.0 L380.5 413.6 M404.6 407.3 L404.6 414.8 M428.0 408.6 L428.0 416.0 M450.8 409.8 L450.8 417.2 M473.0 411.0 L473.0 418.3 M233.9 406.3 L233.9 414.6 M262.4 407.7 L262.4 415.9 M290.1 409.1 L290.1 417.2 M316.9 410.4 L316.9 418.4 M342.9 411.7 L342.9 419.6 M368.1 413.0 L368.1 420.7 M392.6 414.2 L392.6 421.9 M416.4 415.4 L416.4 422.9 M439.5 416.6 L439.5 424.0 M462.0 417.7 L462.0 425.0 M483.8 418.8 L483.8 426.0 M219.3 413.9 L219.3 422.4 M248.3 415.3 L248.3 423.5 M276.4 416.6 L276.4 424.7 M303.6 417.8 L303.6 425.8 M330.0 419.0 L330.0 426.9 M355.6 420.2 L355.6 427.9 M380.5 421.3 L380.5 429.0 M404.6 422.4 L404.6 430.0 M428.0 423.5 L428.0 430.9 M450.8 424.5 L450.8 431.9 M473.0 425.5 L473.0 432.8 M233.9 423.0 L233.9 431.3 M262.4 424.1 L262.4 432.3 M290.1 425.3 L290.1 433.3 M316.9 426.4 L316.9 434.3 M342.9 427.4 L342.9 435.3 M368.1 428.5 L368.1 436.2 M392.6 429.5 L392.6 437.1 M416.4 430.4 L416.4 437.9 M439.5 431.4 L439.5 438.8 M462.0 432.3 L462.0 439.6 M483.8 433.2 L483.8 440.4 M219.3 430.8 L219.3 439.2 M248.3 431.8 L248.3 440.1 M276.4 432.8 L276.4 441.0 M303.6 433.8 L303.6 441.9 M330.0 434.8 L330.0 442.7 M355.6 435.7 L355.6 443.5 M380.5 436.6 L380.5 444.3 M404.6 437.5 L404.6 445.1 M428.0 438.4 L428.0 445.8 M450.8 439.2 L450.8 446.5 M473.0 440.0 L473.0 447.2 M233.9 439.6 L233.9 448.0 M262.4 440.6 L262.4 448.8 M290.1 441.4 L290.1 449.5 M316.9 442.3 L316.9 450.2 M342.9 443.1 L342.9 451.0 M368.1 443.9 L368.1 451.6 M392.6 444.7 L392.6 452.3 M416.4 445.4 L416.4 452.9 M439.5 446.2 L439.5 453.6 M462.0 446.9 L462.0 454.2 M483.8 447.6 L483.8 454.8 M219.3 447.6 L219.3 456.0 M248.3 448.4 L248.3 456.7 M276.4 449.1 L276.4 457.3 M303.6 449.9 L303.6 457.9 M330.0 450.6 L330.0 458.5 M355.6 451.3 L355.6 459.1 M380.5 452.0 L380.5 459.6 M404.6 452.6 L404.6 460.2 M428.0 453.3 L428.0 460.7 M450.8 453.9 L450.8 461.2 M473.0 454.5 L473.0 461.7 M233.9 456.3 L233.9 464.7 M262.4 457.0 L262.4 465.2 M290.1 457.6 L290.1 465.7 M316.9 458.2 L316.9 466.2 M342.9 458.8 L342.9 466.6 M368.1 459.4 L368.1 467.1 M392.6 459.9 L392.6 467.5 M416.4 460.4 L416.4 467.9 M439.5 461.0 L439.5 468.4 M462.0 461.5 L462.0 468.8 M483.8 462.0 L483.8 469.2 M219.3 464.4 L219.3 472.8 M248.3 464.9 L248.3 473.2 M276.4 465.4 L276.4 473.6 M303.6 465.9 L303.6 473.9 M330.0 466.4 L330.0 474.3 M355.6 466.9 L355.6 474.6 M380.5 467.3 L380.5 475.0 M404.6 467.7 L404.6 475.3 M428.0 468.2 L428.0 475.6 M450.8 468.6 L450.8 475.9 M473.0 469.0 L473.0 476.2 M233.9 473.0 L233.9 481.4 M262.4 473.4 L262.4 481.6 M290.1 473.8 L290.1 481.9 M316.9 474.1 L316.9 482.1 M342.9 474.5 L342.9 482.3 M368.1 474.8 L368.1 482.5 M392.6 475.1 L392.6 482.7 M416.4 475.4 L416.4 482.9 M439.5 475.8 L439.5 483.1 M462.0 476.1 L462.0 483.3 M483.8 476.3 L483.8 483.5 M219.3 481.2 L219.3 489.7 M248.3 481.5 L248.3 489.8 M276.4 481.7 L276.4 489.9 M303.6 482.0 L303.6 490.0 M330.0 482.2 L330.0 490.1 M355.6 482.4 L355.6 490.2 M380.5 482.6 L380.5 490.3 M404.6 482.8 L404.6 490.4 M428.0 483.0 L428.0 490.5 M450.8 483.2 L450.8 490.6 M473.0 483.4 L473.0 490.7 M233.9 489.7 L233.9 498.1 M262.4 489.8 L262.4 498.0 M290.1 489.9 L290.1 498.0 M316.9 490.0 L316.9 498.0 M342.9 490.2 L342.9 498.0 M368.1 490.3 L368.1 498.0 M392.6 490.4 L392.6 498.0 M416.4 490.4 L416.4 497.9 M439.5 490.5 L439.5 497.9 M462.0 490.6 L462.0 497.9 M483.8 490.7 L483.8 497.9 M219.3 498.1 L219.3 506.5 M248.3 498.0 L248.3 506.3 M276.4 498.0 L276.4 506.2 M303.6 498.0 L303.6 506.0 M330.0 498.0 L330.0 505.9 M355.6 498.0 L355.6 505.8 M380.5 498.0 L380.5 505.6 M404.6 498.0 L404.6 505.5 M428.0 497.9 L428.0 505.4 M450.8 497.9 L450.8 505.3 M473.0 497.9 L473.0 505.2 M233.9 506.4 L233.9 514.7 M262.4 506.3 L262.4 514.5 M290.1 506.1 L290.1 514.2 M316.9 506.0 L316.9 513.9 M342.9 505.8 L342.9 513.7 M368.1 505.7 L368.1 513.4 M392.6 505.6 L392.6 513.2 M416.4 505.5 L416.4 513.0 M439.5 505.3 L439.5 512.7 M462.0 505.2 L462.0 512.5 M483.8 505.1 L483.8 512.3 M219.3 514.9 L219.3 523.3 M248.3 514.6 L248.3 522.9 M276.4 514.3 L276.4 522.5 M303.6 514.1 L303.6 522.1 M330.0 513.8 L330.0 521.7 M355.6 513.5 L355.6 521.3 M380.5 513.3 L380.5 521.0 M404.6 513.1 L404.6 520.6 M428.0 512.8 L428.0 520.3 M450.8 512.6 L450.8 520.0 M473.0 512.4 L473.0 519.6 M233.9 523.1 L233.9 531.4 M262.4 522.7 L262.4 530.9 M290.1 522.3 L290.1 530.4 M316.9 521.9 L316.9 529.8 M342.9 521.5 L342.9 529.4 M368.1 521.1 L368.1 528.9 M392.6 520.8 L392.6 528.4 M416.4 520.5 L416.4 528.0 M439.5 520.1 L439.5 527.5 M462.0 519.8 L462.0 527.1 M483.8 519.5 L483.8 526.7 M219.3 531.7 L219.3 540.1 M248.3 531.2 L248.3 539.4 M276.4 530.6 L276.4 538.8 M303.6 530.1 L303.6 538.1 M330.0 529.6 L330.0 537.5 M355.6 529.1 L355.6 536.9 M380.5 528.6 L380.5 536.3 M404.6 528.2 L404.6 535.7 M428.0 527.7 L428.0 535.2 M450.8 527.3 L450.8 534.6 M473.0 526.9 L473.0 534.1 M233.9 539.8 L233.9 548.1 M262.4 539.1 L262.4 547.3 M290.1 538.4 L290.1 546.5 M316.9 537.8 L316.9 545.8 M342.9 537.2 L342.9 545.0 M368.1 536.6 L368.1 544.3 M392.6 536.0 L392.6 543.6 M416.4 535.5 L416.4 543.0 M439.5 534.9 L439.5 542.3 M462.0 534.4 L462.0 541.7 M483.8 533.9 L483.8 541.0 M219.3 548.5 L219.3 556.9 M248.3 547.7 L248.3 556.0 M276.4 546.9 L276.4 555.1 M303.6 546.1 L303.6 554.2 M330.0 545.4 L330.0 553.3 M355.6 544.7 L355.6 552.5 M380.5 544.0 L380.5 551.6 M404.6 543.3 L404.6 550.8 M428.0 542.6 L428.0 550.1 M450.8 542.0 L450.8 549.3 M473.0 541.4 L473.0 548.6 M233.9 556.5 L233.9 564.8 M262.4 555.5 L262.4 563.7 M290.1 554.6 L290.1 562.7 M316.9 553.7 L316.9 561.7 M342.9 552.9 L342.9 560.7 M368.1 552.0 L368.1 559.8 M392.6 551.2 L392.6 558.8 M416.4 550.5 L416.4 558.0 M439.5 549.7 L439.5 557.1 M462.0 549.0 L462.0 556.2 M483.8 548.2 L483.8 555.4 M219.3 565.4 L219.3 573.8 M248.3 564.3 L248.3 572.5 M276.4 563.2 L276.4 571.4 M303.6 562.2 L303.6 570.2 M330.0 561.2 L330.0 569.1 M355.6 560.2 L355.6 568.0 M380.5 559.3 L380.5 567.0 M404.6 558.4 L404.6 566.0 M428.0 557.5 L428.0 565.0 M450.8 556.7 L450.8 564.0 M473.0 555.8 L473.0 563.1 M233.9 573.2 L233.9 581.5 M262.4 571.9 L262.4 580.2 M290.1 570.8 L290.1 578.9 M316.9 569.7 L316.9 577.6 M342.9 568.6 L342.9 576.4 M368.1 567.5 L368.1 575.2 M392.6 566.5 L392.6 574.1 M416.4 565.5 L416.4 573.0 M439.5 564.5 L439.5 571.9 M462.0 563.5 L462.0 570.8 M483.8 562.6 L483.8 569.8 M219.3 582.2 L219.3 590.6 M248.3 580.8 L248.3 589.1 M276.4 579.5 L276.4 587.7 M303.6 578.2 L303.6 586.3 M330.0 577.0 L330.0 584.9 M355.6 575.8 L355.6 583.6 M380.5 574.6 L380.5 582.3 M404.6 573.5 L404.6 581.1 M428.0 572.4 L428.0 579.9 M450.8 571.3 L450.8 578.7 M473.0 570.3 L473.0 577.6 M233.9 589.8 L233.9 598.2 M262.4 588.4 L262.4 596.6 M290.1 587.0 L290.1 595.0 M316.9 585.6 L316.9 593.5 M342.9 584.2 L342.9 592.1 M368.1 582.9 L368.1 590.7 M392.6 581.7 L392.6 589.3 M416.4 580.5 L416.4 588.0 M439.5 579.3 L439.5 586.7 M462.0 578.1 L462.0 585.4 M483.8 577.0 L483.8 584.2 M219.3 599.0 L219.3 607.4 M248.3 597.4 L248.3 605.7 M276.4 595.8 L276.4 604.0 M303.6 594.3 L303.6 602.3 M330.0 592.8 L330.0 600.7 M355.6 591.4 L355.6 599.1 M380.5 590.0 L380.5 597.6 M404.6 588.6 L404.6 596.2 M428.0 587.3 L428.0 594.8 M450.8 586.0 L450.8 593.4 M473.0 584.8 L473.0 592.0 M233.9 606.5 L233.9 614.9 M262.4 604.8 L262.4 613.0 M290.1 603.1 L290.1 611.2 M316.9 601.5 L316.9 609.5 M342.9 599.9 L342.9 607.8 M368.1 598.4 L368.1 606.1 M392.6 596.9 L392.6 604.5 M416.4 595.5 L416.4 603.0 M439.5 594.1 L439.5 601.5 M462.0 592.7 L462.0 600.0 M483.8 591.4 L483.8 598.6 M219.3 615.8 L219.3 624.2 M248.3 613.9 L248.3 622.2 M276.4 612.1 L276.4 620.2 M303.6 610.3 L303.6 618.3 M330.0 608.6 L330.0 616.5 M355.6 606.9 L355.6 614.7 M380.5 605.3 L380.5 613.0 M404.6 603.7 L404.6 611.3 M428.0 602.2 L428.0 609.6 M450.8 600.7 L450.8 608.1 M473.0 599.3 L473.0 606.5 M233.9 623.2 L233.9 631.6 M262.4 621.2 L262.4 629.4 M290.1 619.3 L290.1 627.4 M316.9 617.4 L316.9 625.4 M342.9 615.6 L342.9 623.4 M368.1 613.8 L368.1 621.6 M392.6 612.1 L392.6 619.7 M416.4 610.5 L416.4 618.0 M439.5 608.8 L439.5 616.2 M462.0 607.3 L462.0 614.6 M483.8 605.8 L483.8 612.9 M219.3 632.7 L219.3 641.1 M248.3 630.5 L248.3 638.8 M276.4 628.4 L276.4 636.5 M303.6 626.4 L303.6 634.4 M330.0 624.4 L330.0 632.3 M355.6 622.5 L355.6 630.3 M380.5 620.6 L380.5 628.3 M404.6 618.8 L404.6 626.4 M428.0 617.1 L428.0 624.5 M450.8 615.4 L450.8 622.7 M473.0 613.7 L473.0 621.0 M233.9 639.9 L233.9 648.2 M262.4 637.6 L262.4 645.9 M290.1 635.5 L290.1 643.5 M316.9 633.3 L316.9 641.3 M342.9 631.3 L342.9 639.1 M368.1 629.3 L368.1 637.0 M392.6 627.3 L392.6 635.0 M416.4 625.5 L416.4 633.0 M439.5 623.6 L439.5 631.0 M462.0 621.9 L462.0 629.1 M483.8 620.1 L483.8 627.3 M219.3 649.5 L219.3 657.9 M248.3 647.0 L248.3 655.3 M276.4 644.7 L276.4 652.8 M303.6 642.4 L303.6 650.4 M330.0 640.2 L330.0 648.1 M355.6 638.1 L355.6 645.8 M380.5 636.0 L380.5 643.6 M404.6 634.0 L404.6 641.5 M428.0 632.0 L428.0 639.4 M450.8 630.1 L450.8 637.4 M473.0 628.2 L473.0 635.5 M233.9 656.6 L233.9 664.9 M262.4 654.1 L262.4 662.3 M290.1 651.6 L290.1 659.7 M316.9 649.3 L316.9 657.2 M342.9 647.0 L342.9 654.8 M368.1 644.7 L368.1 652.5 M392.6 642.6 L392.6 650.2 M416.4 640.5 L416.4 648.0 M439.5 638.4 L439.5 645.8 M462.0 636.4 L462.0 643.7 M483.8 634.5 L483.8 641.7 M219.3 666.3 L219.3 674.7 M248.3 663.6 L248.3 671.9 M276.4 661.0 L276.4 669.1 M303.6 658.5 L303.6 666.5 M330.0 656.0 L330.0 663.9 M355.6 653.6 L355.6 661.4 M380.5 651.3 L380.5 659.0 M404.6 649.1 L404.6 656.6 M428.0 646.9 L428.0 654.3 M450.8 644.8 L450.8 652.1 M473.0 642.7 L473.0 649.9 M233.9 673.3 L233.9 681.6 M262.4 670.5 L262.4 678.7 M290.1 667.8 L290.1 675.9 M316.9 665.2 L316.9 673.1 M342.9 662.6 L342.9 670.5 M368.1 660.2 L368.1 667.9 M392.6 657.8 L392.6 665.4 M416.4 655.5 L416.4 663.0 M439.5 653.2 L439.5 660.6 M462.0 651.0 L462.0 658.3 M483.8 648.9 L483.8 656.1 M219.3 683.1 L219.3 691.5 M248.3 680.2 L248.3 688.4 M276.4 677.3 L276.4 685.4 M303.6 674.5 L303.6 682.5 M330.0 671.8 L330.0 679.7 M355.6 669.2 L355.6 677.0 M380.5 666.6 L380.5 674.3 M404.6 664.2 L404.6 671.7 M428.0 661.8 L428.0 669.2 M450.8 659.5 L450.8 666.8 M473.0 657.2 L473.0 664.4 M233.9 690.0 L233.9 698.3 M262.4 686.9 L262.4 695.1 M290.1 684.0 L290.1 692.0 M316.9 681.1 L316.9 689.1 M342.9 678.3 L342.9 686.2 M368.1 675.6 L368.1 683.3 M392.6 673.0 L392.6 680.6 M416.4 670.5 L416.4 678.0 M439.5 668.0 L439.5 675.4 M462.0 665.6 L462.0 672.9 M483.8 663.3 L483.8 670.5 M219.3 699.9 L219.3 708.4 M248.3 696.7 L248.3 705.0 M276.4 693.6 L276.4 701.7 M303.6 690.5 L303.6 698.6 M330.0 687.6 L330.0 695.5 M355.6 684.7 L355.6 692.5 M380.5 682.0 L380.5 689.6 M404.6 679.3 L404.6 686.8 M428.0 676.7 L428.0 684.1 M450.8 674.1 L450.8 681.5 M473.0 671.7 L473.0 678.9" stroke="#d6d6d6" stroke-width="0.9" fill="none" shape-rendering="crispEdges"/>
<path d="M380.5 384.0 L592.0 398.5 L592.0 593.5 L380.5 608.0Z" fill="#ffffff"/>
<clipPath id="bw"><path d="M380.5 384.0 L592.0 398.5 L592.0 593.5 L380.5 608.0Z"/></clipPath>
<path clip-path="url(#bw)" d="M290.0 364.3 L652.1 391.7 M290.0 369.8 L652.1 396.1 M290.0 375.3 L652.1 400.4 M290.0 380.8 L652.1 404.8 M290.0 386.2 L652.1 409.2 M290.0 391.7 L652.1 413.5 M290.0 397.2 L652.1 417.9 M290.0 402.7 L652.1 422.2 M290.0 408.2 L652.1 426.6 M290.0 413.7 L652.1 430.9 M290.0 419.2 L652.1 435.3 M290.0 424.7 L652.1 439.6 M290.0 430.2 L652.1 444.0 M290.0 435.6 L652.1 448.3 M290.0 441.1 L652.1 452.7 M290.0 446.6 L652.1 457.0 M290.0 452.1 L652.1 461.4 M290.0 457.6 L652.1 465.8 M290.0 463.1 L652.1 470.1 M290.0 468.6 L652.1 474.5 M290.0 474.1 L652.1 478.8 M290.0 479.6 L652.1 483.2 M290.0 485.0 L652.1 487.5 M290.0 490.5 L652.1 491.9 M290.0 496.0 L652.1 496.2 M290.0 501.5 L652.1 500.6 M290.0 507.0 L652.1 504.9 M290.0 512.5 L652.1 509.3 M290.0 518.0 L652.1 513.6 M290.0 523.5 L652.1 518.0 M290.0 529.0 L652.1 522.3 M290.0 534.4 L652.1 526.7 M290.0 539.9 L652.1 531.1 M290.0 545.4 L652.1 535.4 M290.0 550.9 L652.1 539.8 M290.0 556.4 L652.1 544.1 M290.0 561.9 L652.1 548.5 M290.0 567.4 L652.1 552.8 M290.0 572.9 L652.1 557.2 M290.0 578.4 L652.1 561.5 M290.0 583.8 L652.1 565.9 M290.0 589.3 L652.1 570.2 M290.0 594.8 L652.1 574.6 M290.0 600.3 L652.1 578.9 M290.0 605.8 L652.1 583.3 M290.0 611.3 L652.1 587.6 M290.0 616.8 L652.1 592.0 M290.0 622.3 L652.1 596.4 M290.0 627.8 L652.1 600.7 M290.0 633.2 L652.1 605.1 M270.8 362.8 L270.8 368.4 M290.0 364.3 L290.0 369.8 M308.8 365.7 L308.8 371.1 M327.2 367.1 L327.2 372.5 M345.3 368.5 L345.3 373.8 M362.9 369.8 L362.9 375.1 M380.2 371.1 L380.2 376.3 M397.1 372.4 L397.1 377.6 M413.7 373.7 L413.7 378.8 M430.0 374.9 L430.0 379.9 M445.9 376.1 L445.9 381.1 M461.6 377.3 L461.6 382.2 M476.9 378.5 L476.9 383.4 M491.9 379.6 L491.9 384.5 M506.7 380.7 L506.7 385.5 M521.1 381.8 L521.1 386.6 M535.3 382.9 L535.3 387.6 M549.3 383.9 L549.3 388.6 M562.9 385.0 L562.9 389.6 M576.4 386.0 L576.4 390.6 M589.5 387.0 L589.5 391.5 M602.5 388.0 L602.5 392.5 M615.2 388.9 L615.2 393.4 M627.7 389.9 L627.7 394.3 M640.0 390.8 L640.0 395.2 M652.1 391.7 L652.1 396.1 M280.4 369.1 L280.4 374.6 M299.5 370.5 L299.5 375.9 M318.1 371.8 L318.1 377.2 M336.3 373.1 L336.3 378.5 M354.1 374.4 L354.1 379.7 M371.6 375.7 L371.6 380.9 M388.7 376.9 L388.7 382.1 M405.5 378.2 L405.5 383.3 M421.9 379.4 L421.9 384.4 M438.0 380.5 L438.0 385.6 M453.8 381.7 L453.8 386.7 M469.3 382.8 L469.3 387.7 M484.4 383.9 L484.4 388.8 M499.3 385.0 L499.3 389.8 M513.9 386.1 L513.9 390.8 M528.3 387.1 L528.3 391.8 M542.3 388.1 L542.3 392.8 M556.1 389.1 L556.1 393.8 M569.7 390.1 L569.7 394.7 M583.0 391.1 L583.0 395.6 M596.1 392.0 L596.1 396.6 M608.9 393.0 L608.9 397.4 M621.5 393.9 L621.5 398.3 M633.9 394.8 L633.9 399.2 M646.1 395.7 L646.1 400.0 M658.0 396.5 L658.0 400.9 M270.8 373.9 L270.8 379.5 M290.0 375.3 L290.0 380.8 M308.8 376.6 L308.8 382.0 M327.2 377.9 L327.2 383.2 M345.3 379.1 L345.3 384.4 M362.9 380.3 L362.9 385.6 M380.2 381.5 L380.2 386.7 M397.1 382.7 L397.1 387.9 M413.7 383.9 L413.7 389.0 M430.0 385.0 L430.0 390.1 M445.9 386.1 L445.9 391.1 M461.6 387.2 L461.6 392.1 M476.9 388.3 L476.9 393.2 M491.9 389.3 L491.9 394.2 M506.7 390.3 L506.7 395.1 M521.1 391.3 L521.1 396.1 M535.3 392.3 L535.3 397.0 M549.3 393.3 L549.3 398.0 M562.9 394.2 L562.9 398.9 M576.4 395.2 L576.4 399.8 M589.5 396.1 L589.5 400.6 M602.5 397.0 L602.5 401.5 M615.2 397.9 L615.2 402.4 M627.7 398.8 L627.7 403.2 M640.0 399.6 L640.0 404.0 M652.1 400.4 L652.1 404.8 M280.4 380.1 L280.4 385.6 M299.5 381.4 L299.5 386.8 M318.1 382.6 L318.1 388.0 M336.3 383.8 L336.3 389.2 M354.1 385.0 L354.1 390.3 M371.6 386.2 L371.6 391.4 M388.7 387.3 L388.7 392.5 M405.5 388.4 L405.5 393.5 M421.9 389.5 L421.9 394.6 M438.0 390.6 L438.0 395.6 M453.8 391.6 L453.8 396.6 M469.3 392.7 L469.3 397.6 M484.4 393.7 L484.4 398.5 M499.3 394.7 L499.3 399.5 M513.9 395.6 L513.9 400.4 M528.3 396.6 L528.3 401.3 M542.3 397.5 L542.3 402.2 M556.1 398.4 L556.1 403.1 M569.7 399.3 L569.7 403.9 M583.0 400.2 L583.0 404.8 M596.1 401.1 L596.1 405.6 M608.9 401.9 L608.9 406.4 M621.5 402.8 L621.5 407.2 M633.9 403.6 L633.9 408.0 M646.1 404.4 L646.1 408.8 M658.0 405.2 L658.0 409.5 M270.8 385.0 L270.8 390.6 M290.0 386.2 L290.0 391.7 M308.8 387.4 L308.8 392.9 M327.2 388.6 L327.2 394.0 M345.3 389.7 L345.3 395.1 M362.9 390.9 L362.9 396.1 M380.2 391.9 L380.2 397.2 M397.1 393.0 L397.1 398.2 M413.7 394.1 L413.7 399.2 M430.0 395.1 L430.0 400.1 M445.9 396.1 L445.9 401.1 M461.6 397.1 L461.6 402.0 M476.9 398.1 L476.9 403.0 M491.9 399.0 L491.9 403.9 M506.7 400.0 L506.7 404.8 M521.1 400.9 L521.1 405.6 M535.3 401.8 L535.3 406.5 M549.3 402.6 L549.3 407.3 M562.9 403.5 L562.9 408.1 M576.4 404.4 L576.4 409.0 M589.5 405.2 L589.5 409.7 M602.5 406.0 L602.5 410.5 M615.2 406.8 L615.2 411.3 M627.7 407.6 L627.7 412.0 M640.0 408.4 L640.0 412.8 M652.1 409.2 L652.1 413.5 M280.4 391.2 L280.4 396.7 M299.5 392.3 L299.5 397.8 M318.1 393.4 L318.1 398.8 M336.3 394.5 L336.3 399.9 M354.1 395.6 L354.1 400.9 M371.6 396.6 L371.6 401.9 M388.7 397.7 L388.7 402.8 M405.5 398.7 L405.5 403.8 M421.9 399.7 L421.9 404.7 M438.0 400.6 L438.0 405.7 M453.8 401.6 L453.8 406.6 M469.3 402.5 L469.3 407.4 M484.4 403.4 L484.4 408.3 M499.3 404.3 L499.3 409.2 M513.9 405.2 L513.9 410.0 M528.3 406.1 L528.3 410.8 M542.3 406.9 L542.3 411.6 M556.1 407.7 L556.1 412.4 M569.7 408.6 L569.7 413.2 M583.0 409.4 L583.0 413.9 M596.1 410.1 L596.1 414.7 M608.9 410.9 L608.9 415.4 M621.5 411.7 L621.5 416.1 M633.9 412.4 L633.9 416.8 M646.1 413.1 L646.1 417.5 M658.0 413.9 L658.0 418.2 M270.8 396.1 L270.8 401.7 M290.0 397.2 L290.0 402.7 M308.8 398.3 L308.8 403.7 M327.2 399.3 L327.2 404.7 M345.3 400.4 L345.3 405.7 M362.9 401.4 L362.9 406.6 M380.2 402.4 L380.2 407.6 M397.1 403.3 L397.1 408.5 M413.7 404.3 L413.7 409.4 M430.0 405.2 L430.0 410.2 M445.9 406.1 L445.9 411.1 M461.6 407.0 L461.6 412.0 M476.9 407.9 L476.9 412.8 M491.9 408.7 L491.9 413.6 M506.7 409.6 L506.7 414.4 M521.1 410.4 L521.1 415.2 M535.3 411.2 L535.3 415.9 M549.3 412.0 L549.3 416.7 M562.9 412.8 L562.9 417.4 M576.4 413.5 L576.4 418.1 M589.5 414.3 L589.5 418.8 M602.5 415.0 L602.5 419.5 M615.2 415.8 L615.2 420.2 M627.7 416.5 L627.7 420.9 M640.0 417.2 L640.0 421.6 M652.1 417.9 L652.1 422.2 M280.4 402.2 L280.4 407.7 M299.5 403.2 L299.5 408.7 M318.1 404.2 L318.1 409.6 M336.3 405.2 L336.3 410.5 M354.1 406.2 L354.1 411.5 M371.6 407.1 L371.6 412.3 M388.7 408.0 L388.7 413.2 M405.5 408.9 L405.5 414.1 M421.9 409.8 L421.9 414.9 M438.0 410.7 L438.0 415.7 M453.8 411.5 L453.8 416.5 M469.3 412.4 L469.3 417.3 M484.4 413.2 L484.4 418.1 M499.3 414.0 L499.3 418.8 M513.9 414.8 L513.9 419.6 M528.3 415.5 L528.3 420.3 M542.3 416.3 L542.3 421.0 M556.1 417.0 L556.1 421.7 M569.7 417.8 L569.7 422.4 M583.0 418.5 L583.0 423.1 M596.1 419.2 L596.1 423.7 M608.9 419.9 L608.9 424.4 M621.5 420.6 L621.5 425.0 M633.9 421.2 L633.9 425.6 M646.1 421.9 L646.1 426.3 M658.0 422.5 L658.0 426.9 M270.8 407.2 L270.8 412.8 M290.0 408.2 L290.0 413.7 M308.8 409.2 L308.8 414.6 M327.2 410.1 L327.2 415.5 M345.3 411.0 L345.3 416.3 M362.9 411.9 L362.9 417.2 M380.2 412.8 L380.2 418.0 M397.1 413.6 L397.1 418.8 M413.7 414.5 L413.7 419.6 M430.0 415.3 L430.0 420.4 M445.9 416.1 L445.9 421.1 M461.6 416.9 L461.6 421.9 M476.9 417.7 L476.9 422.6 M491.9 418.4 L491.9 423.3 M506.7 419.2 L506.7 424.0 M521.1 419.9 L521.1 424.7 M535.3 420.6 L535.3 425.4 M549.3 421.4 L549.3 426.0 M562.9 422.0 L562.9 426.7 M576.4 422.7 L576.4 427.3 M589.5 423.4 L589.5 427.9 M602.5 424.1 L602.5 428.6 M615.2 424.7 L615.2 429.2 M627.7 425.3 L627.7 429.8 M640.0 426.0 L640.0 430.3 M652.1 426.6 L652.1 430.9 M280.4 413.2 L280.4 418.7 M299.5 414.1 L299.5 419.6 M318.1 415.0 L318.1 420.4 M336.3 415.9 L336.3 421.2 M354.1 416.7 L354.1 422.0 M371.6 417.6 L371.6 422.8 M388.7 418.4 L388.7 423.6 M405.5 419.2 L405.5 424.3 M421.9 420.0 L421.9 425.0 M438.0 420.7 L438.0 425.8 M453.8 421.5 L453.8 426.5 M469.3 422.2 L469.3 427.1 M484.4 422.9 L484.4 427.8 M499.3 423.7 L499.3 428.5 M513.9 424.3 L513.9 429.1 M528.3 425.0 L528.3 429.8 M542.3 425.7 L542.3 430.4 M556.1 426.4 L556.1 431.0 M569.7 427.0 L569.7 431.6 M583.0 427.6 L583.0 432.2 M596.1 428.3 L596.1 432.8 M608.9 428.9 L608.9 433.4 M621.5 429.5 L621.5 433.9 M633.9 430.1 L633.9 434.5 M646.1 430.6 L646.1 435.0 M658.0 431.2 L658.0 435.5 M270.8 418.3 L270.8 423.9 M290.0 419.2 L290.0 424.7 M308.8 420.0 L308.8 425.4 M327.2 420.8 L327.2 426.2 M345.3 421.6 L345.3 426.9 M362.9 422.4 L362.9 427.7 M380.2 423.2 L380.2 428.4 M397.1 423.9 L397.1 429.1 M413.7 424.7 L413.7 429.8 M430.0 425.4 L430.0 430.4 M445.9 426.1 L445.9 431.1 M461.6 426.8 L461.6 431.8 M476.9 427.5 L476.9 432.4 M491.9 428.2 L491.9 433.0 M506.7 428.8 L506.7 433.6 M521.1 429.5 L521.1 434.2 M535.3 430.1 L535.3 434.8 M549.3 430.7 L549.3 435.4 M562.9 431.3 L562.9 435.9 M576.4 431.9 L576.4 436.5 M589.5 432.5 L589.5 437.0 M602.5 433.1 L602.5 437.6 M615.2 433.6 L615.2 438.1 M627.7 434.2 L627.7 438.6 M640.0 434.7 L640.0 439.1 M652.1 435.3 L652.1 439.6 M280.4 424.3 L280.4 429.8 M299.5 425.1 L299.5 430.5 M318.1 425.8 L318.1 431.2 M336.3 426.6 L336.3 431.9 M354.1 427.3 L354.1 432.6 M371.6 428.0 L371.6 433.3 M388.7 428.7 L388.7 433.9 M405.5 429.4 L405.5 434.6 M421.9 430.1 L421.9 435.2 M438.0 430.8 L438.0 435.8 M453.8 431.4 L453.8 436.4 M469.3 432.1 L469.3 437.0 M484.4 432.7 L484.4 437.6 M499.3 433.3 L499.3 438.1 M513.9 433.9 L513.9 438.7 M528.3 434.5 L528.3 439.3 M542.3 435.1 L542.3 439.8 M556.1 435.7 L556.1 440.3 M569.7 436.2 L569.7 440.8 M583.0 436.8 L583.0 441.3 M596.1 437.3 L596.1 441.8 M608.9 437.8 L608.9 442.3 M621.5 438.4 L621.5 442.8 M633.9 438.9 L633.9 443.3 M646.1 439.4 L646.1 443.8 M658.0 439.9 L658.0 444.2 M270.8 429.4 L270.8 435.0 M290.0 430.2 L290.0 435.6 M308.8 430.9 L308.8 436.3 M327.2 431.6 L327.2 436.9 M345.3 432.3 L345.3 437.6 M362.9 432.9 L362.9 438.2 M380.2 433.6 L380.2 438.8 M397.1 434.2 L397.1 439.4 M413.7 434.9 L413.7 440.0 M430.0 435.5 L430.0 440.6 M445.9 436.1 L445.9 441.1 M461.6 436.7 L461.6 441.7 M476.9 437.3 L476.9 442.2 M491.9 437.9 L491.9 442.7 M506.7 438.4 L506.7 443.2 M521.1 439.0 L521.1 443.7 M535.3 439.5 L535.3 444.2 M549.3 440.1 L549.3 444.7 M562.9 440.6 L562.9 445.2 M576.4 441.1 L576.4 445.7 M589.5 441.6 L589.5 446.1 M602.5 442.1 L602.5 446.6 M615.2 442.6 L615.2 447.0 M627.7 443.1 L627.7 447.5 M640.0 443.5 L640.0 447.9 M652.1 444.0 L652.1 448.3 M280.4 435.3 L280.4 440.8 M299.5 436.0 L299.5 441.4 M318.1 436.6 L318.1 442.0 M336.3 437.3 L336.3 442.6 M354.1 437.9 L354.1 443.2 M371.6 438.5 L371.6 443.7 M388.7 439.1 L388.7 444.3 M405.5 439.7 L405.5 444.8 M421.9 440.3 L421.9 445.3 M438.0 440.8 L438.0 445.9 M453.8 441.4 L453.8 446.4 M469.3 441.9 L469.3 446.9 M484.4 442.5 L484.4 447.3 M499.3 443.0 L499.3 447.8 M513.9 443.5 L513.9 448.3 M528.3 444.0 L528.3 448.7 M542.3 444.5 L542.3 449.2 M556.1 445.0 L556.1 449.6 M569.7 445.4 L569.7 450.1 M583.0 445.9 L583.0 450.5 M596.1 446.4 L596.1 450.9 M608.9 446.8 L608.9 451.3 M621.5 447.3 L621.5 451.7 M633.9 447.7 L633.9 452.1 M646.1 448.1 L646.1 452.5 M658.0 448.5 L658.0 452.9 M270.8 440.5 L270.8 446.1 M290.0 441.1 L290.0 446.6 M308.8 441.7 L308.8 447.2 M327.2 442.3 L327.2 447.7 M345.3 442.9 L345.3 448.2 M362.9 443.5 L362.9 448.7 M380.2 444.0 L380.2 449.2 M397.1 444.6 L397.1 449.7 M413.7 445.1 L413.7 450.2 M430.0 445.6 L430.0 450.6 M445.9 446.1 L445.9 451.1 M461.6 446.6 L461.6 451.6 M476.9 447.1 L476.9 452.0 M491.9 447.6 L491.9 452.4 M506.7 448.0 L506.7 452.9 M521.1 448.5 L521.1 453.3 M535.3 449.0 L535.3 453.7 M549.3 449.4 L549.3 454.1 M562.9 449.8 L562.9 454.5 M576.4 450.3 L576.4 454.9 M589.5 450.7 L589.5 455.2 M602.5 451.1 L602.5 455.6 M615.2 451.5 L615.2 456.0 M627.7 451.9 L627.7 456.3 M640.0 452.3 L640.0 456.7 M652.1 452.7 L652.1 457.0 M280.4 446.3 L280.4 451.9 M299.5 446.9 L299.5 452.4 M318.1 447.4 L318.1 452.8 M336.3 448.0 L336.3 453.3 M354.1 448.5 L354.1 453.8 M371.6 449.0 L371.6 454.2 M388.7 449.5 L388.7 454.6 M405.5 449.9 L405.5 455.1 M421.9 450.4 L421.9 455.5 M438.0 450.9 L438.0 455.9 M453.8 451.3 L453.8 456.3 M469.3 451.8 L469.3 456.7 M484.4 452.2 L484.4 457.1 M499.3 452.6 L499.3 457.5 M513.9 453.1 L513.9 457.9 M528.3 453.5 L528.3 458.2 M542.3 453.9 L542.3 458.6 M556.1 454.3 L556.1 458.9 M569.7 454.7 L569.7 459.3 M583.0 455.1 L583.0 459.6 M596.1 455.4 L596.1 460.0 M608.9 455.8 L608.9 460.3 M621.5 456.2 L621.5 460.6 M633.9 456.5 L633.9 460.9 M646.1 456.9 L646.1 461.2 M658.0 457.2 L658.0 461.5 M270.8 451.6 L270.8 457.2 M290.0 452.1 L290.0 457.6 M308.8 452.6 L308.8 458.0 M327.2 453.1 L327.2 458.4 M345.3 453.5 L345.3 458.8 M362.9 454.0 L362.9 459.2 M380.2 454.4 L380.2 459.6 M397.1 454.9 L397.1 460.0 M413.7 455.3 L413.7 460.4 M430.0 455.7 L430.0 460.8 M445.9 456.1 L445.9 461.1 M461.6 456.5 L461.6 461.5 M476.9 456.9 L476.9 461.8 M491.9 457.3 L491.9 462.1 M506.7 457.7 L506.7 462.5 M521.1 458.0 L521.1 462.8 M535.3 458.4 L535.3 463.1 M549.3 458.8 L549.3 463.4 M562.9 459.1 L562.9 463.7 M576.4 459.5 L576.4 464.0 M589.5 459.8 L589.5 464.3 M602.5 460.1 L602.5 464.6 M615.2 460.5 L615.2 464.9 M627.7 460.8 L627.7 465.2 M640.0 461.1 L640.0 465.5 M652.1 461.4 L652.1 465.8 M280.4 457.4 L280.4 462.9 M299.5 457.8 L299.5 463.3 M318.1 458.2 L318.1 463.6 M336.3 458.6 L336.3 464.0 M354.1 459.0 L354.1 464.3 M371.6 459.4 L371.6 464.7 M388.7 459.8 L388.7 465.0 M405.5 460.2 L405.5 465.3 M421.9 460.6 L421.9 465.6 M438.0 460.9 L438.0 466.0 M453.8 461.3 L453.8 466.3 M469.3 461.6 L469.3 466.6 M484.4 462.0 L484.4 466.9 M499.3 462.3 L499.3 467.1 M513.9 462.6 L513.9 467.4 M528.3 463.0 L528.3 467.7 M542.3 463.3 L542.3 468.0 M556.1 463.6 L556.1 468.2 M569.7 463.9 L569.7 468.5 M583.0 464.2 L583.0 468.8 M596.1 464.5 L596.1 469.0 M608.9 464.8 L608.9 469.3 M621.5 465.1 L621.5 469.5 M633.9 465.3 L633.9 469.8 M646.1 465.6 L646.1 470.0 M658.0 465.9 L658.0 470.2 M270.8 462.7 L270.8 468.3 M290.0 463.1 L290.0 468.6 M308.8 463.5 L308.8 468.9 M327.2 463.8 L327.2 469.2 M345.3 464.2 L345.3 469.5 M362.9 464.5 L362.9 469.8 M380.2 464.8 L380.2 470.0 M397.1 465.2 L397.1 470.3 M413.7 465.5 L413.7 470.6 M430.0 465.8 L430.0 470.9 M445.9 466.1 L445.9 471.1 M461.6 466.4 L461.6 471.4 M476.9 466.7 L476.9 471.6 M491.9 467.0 L491.9 471.9 M506.7 467.3 L506.7 472.1 M521.1 467.6 L521.1 472.3 M535.3 467.8 L535.3 472.6 M549.3 468.1 L549.3 472.8 M562.9 468.4 L562.9 473.0 M576.4 468.6 L576.4 473.2 M589.5 468.9 L589.5 473.4 M602.5 469.1 L602.5 473.7 M615.2 469.4 L615.2 473.9 M627.7 469.6 L627.7 474.1 M640.0 469.9 L640.0 474.3 M652.1 470.1 L652.1 474.5 M280.4 468.4 L280.4 473.9 M299.5 468.7 L299.5 474.2 M318.1 469.0 L318.1 474.4 M336.3 469.3 L336.3 474.7 M354.1 469.6 L354.1 474.9 M371.6 469.9 L371.6 475.1 M388.7 470.2 L388.7 475.4 M405.5 470.5 L405.5 475.6 M421.9 470.7 L421.9 475.8 M438.0 471.0 L438.0 476.0 M453.8 471.2 L453.8 476.2 M469.3 471.5 L469.3 476.4 M484.4 471.7 L484.4 476.6 M499.3 472.0 L499.3 476.8 M513.9 472.2 L513.9 477.0 M528.3 472.4 L528.3 477.2 M542.3 472.7 L542.3 477.4 M556.1 472.9 L556.1 477.6 M569.7 473.1 L569.7 477.7 M583.0 473.3 L583.0 477.9 M596.1 473.5 L596.1 478.1 M608.9 473.8 L608.9 478.2 M621.5 474.0 L621.5 478.4 M633.9 474.2 L633.9 478.6 M646.1 474.4 L646.1 478.7 M658.0 474.6 L658.0 478.9 M270.8 473.8 L270.8 479.4 M290.0 474.1 L290.0 479.6 M308.8 474.3 L308.8 479.7 M327.2 474.6 L327.2 479.9 M345.3 474.8 L345.3 480.1 M362.9 475.0 L362.9 480.3 M380.2 475.2 L380.2 480.5 M397.1 475.5 L397.1 480.6 M413.7 475.7 L413.7 480.8 M430.0 475.9 L430.0 480.9 M445.9 476.1 L445.9 481.1 M461.6 476.3 L461.6 481.3 M476.9 476.5 L476.9 481.4 M491.9 476.7 L491.9 481.6 M506.7 476.9 L506.7 481.7 M521.1 477.1 L521.1 481.9 M535.3 477.3 L535.3 482.0 M549.3 477.5 L549.3 482.1 M562.9 477.6 L562.9 482.3 M576.4 477.8 L576.4 482.4 M589.5 478.0 L589.5 482.5 M602.5 478.2 L602.5 482.7 M615.2 478.3 L615.2 482.8 M627.7 478.5 L627.7 482.9 M640.0 478.7 L640.0 483.0 M652.1 478.8 L652.1 483.2 M280.4 479.5 L280.4 485.0 M299.5 479.6 L299.5 485.1 M318.1 479.8 L318.1 485.2 M336.3 480.0 L336.3 485.4 M354.1 480.2 L354.1 485.5 M371.6 480.4 L371.6 485.6 M388.7 480.5 L388.7 485.7 M405.5 480.7 L405.5 485.8 M421.9 480.9 L421.9 485.9 M438.0 481.0 L438.0 486.1 M453.8 481.2 L453.8 486.2 M469.3 481.3 L469.3 486.3 M484.4 481.5 L484.4 486.4 M499.3 481.6 L499.3 486.5 M513.9 481.8 L513.9 486.6 M528.3 481.9 L528.3 486.7 M542.3 482.1 L542.3 486.8 M556.1 482.2 L556.1 486.9 M569.7 482.3 L569.7 487.0 M583.0 482.5 L583.0 487.0 M596.1 482.6 L596.1 487.1 M608.9 482.7 L608.9 487.2 M621.5 482.9 L621.5 487.3 M633.9 483.0 L633.9 487.4 M646.1 483.1 L646.1 487.5 M658.0 483.2 L658.0 487.6 M270.8 484.9 L270.8 490.5 M290.0 485.0 L290.0 490.5 M308.8 485.2 L308.8 490.6 M327.2 485.3 L327.2 490.7 M345.3 485.4 L345.3 490.7 M362.9 485.5 L362.9 490.8 M380.2 485.7 L380.2 490.9 M397.1 485.8 L397.1 490.9 M413.7 485.9 L413.7 491.0 M430.0 486.0 L430.0 491.1 M445.9 486.1 L445.9 491.1 M461.6 486.2 L461.6 491.2 M476.9 486.3 L476.9 491.2 M491.9 486.4 L491.9 491.3 M506.7 486.5 L506.7 491.3 M521.1 486.6 L521.1 491.4 M535.3 486.7 L535.3 491.4 M549.3 486.8 L549.3 491.5 M562.9 486.9 L562.9 491.5 M576.4 487.0 L576.4 491.6 M589.5 487.1 L589.5 491.6 M602.5 487.2 L602.5 491.7 M615.2 487.3 L615.2 491.7 M627.7 487.4 L627.7 491.8 M640.0 487.4 L640.0 491.8 M652.1 487.5 L652.1 491.9 M280.4 490.5 L280.4 496.0 M299.5 490.6 L299.5 496.0 M318.1 490.6 L318.1 496.0 M336.3 490.7 L336.3 496.0 M354.1 490.8 L354.1 496.1 M371.6 490.8 L371.6 496.1 M388.7 490.9 L388.7 496.1 M405.5 491.0 L405.5 496.1 M421.9 491.0 L421.9 496.1 M438.0 491.1 L438.0 496.1 M453.8 491.1 L453.8 496.1 M469.3 491.2 L469.3 496.1 M484.4 491.3 L484.4 496.1 M499.3 491.3 L499.3 496.1 M513.9 491.4 L513.9 496.1 M528.3 491.4 L528.3 496.2 M542.3 491.5 L542.3 496.2 M556.1 491.5 L556.1 496.2 M569.7 491.6 L569.7 496.2 M583.0 491.6 L583.0 496.2 M596.1 491.7 L596.1 496.2 M608.9 491.7 L608.9 496.2 M621.5 491.8 L621.5 496.2 M633.9 491.8 L633.9 496.2 M646.1 491.8 L646.1 496.2 M658.0 491.9 L658.0 496.2 M270.8 496.0 L270.8 501.6 M290.0 496.0 L290.0 501.5 M308.8 496.0 L308.8 501.5 M327.2 496.0 L327.2 501.4 M345.3 496.1 L345.3 501.4 M362.9 496.1 L362.9 501.3 M380.2 496.1 L380.2 501.3 M397.1 496.1 L397.1 501.2 M413.7 496.1 L413.7 501.2 M430.0 496.1 L430.0 501.1 M445.9 496.1 L445.9 501.1 M461.6 496.1 L461.6 501.1 M476.9 496.1 L476.9 501.0 M491.9 496.1 L491.9 501.0 M506.7 496.1 L506.7 501.0 M521.1 496.2 L521.1 500.9 M535.3 496.2 L535.3 500.9 M549.3 496.2 L549.3 500.8 M562.9 496.2 L562.9 500.8 M576.4 496.2 L576.4 500.8 M589.5 496.2 L589.5 500.7 M602.5 496.2 L602.5 500.7 M615.2 496.2 L615.2 500.7 M627.7 496.2 L627.7 500.6 M640.0 496.2 L640.0 500.6 M652.1 496.2 L652.1 500.6 M280.4 501.5 L280.4 507.1 M299.5 501.5 L299.5 506.9 M318.1 501.4 L318.1 506.8 M336.3 501.4 L336.3 506.7 M354.1 501.3 L354.1 506.6 M371.6 501.3 L371.6 506.5 M388.7 501.3 L388.7 506.4 M405.5 501.2 L405.5 506.3 M421.9 501.2 L421.9 506.2 M438.0 501.1 L438.0 506.2 M453.8 501.1 L453.8 506.1 M469.3 501.0 L469.3 506.0 M484.4 501.0 L484.4 505.9 M499.3 501.0 L499.3 505.8 M513.9 500.9 L513.9 505.7 M528.3 500.9 L528.3 505.6 M542.3 500.9 L542.3 505.6 M556.1 500.8 L556.1 505.5 M569.7 500.8 L569.7 505.4 M583.0 500.8 L583.0 505.3 M596.1 500.7 L596.1 505.3 M608.9 500.7 L608.9 505.2 M621.5 500.7 L621.5 505.1 M633.9 500.6 L633.9 505.0 M646.1 500.6 L646.1 505.0 M658.0 500.6 L658.0 504.9 M270.8 507.1 L270.8 512.7 M290.0 507.0 L290.0 512.5 M308.8 506.9 L308.8 512.3 M327.2 506.8 L327.2 512.2 M345.3 506.7 L345.3 512.0 M362.9 506.6 L362.9 511.8 M380.2 506.5 L380.2 511.7 M397.1 506.4 L397.1 511.5 M413.7 506.3 L413.7 511.4 M430.0 506.2 L430.0 511.2 M445.9 506.1 L445.9 511.1 M461.6 506.0 L461.6 511.0 M476.9 505.9 L476.9 510.8 M491.9 505.8 L491.9 510.7 M506.7 505.8 L506.7 510.6 M521.1 505.7 L521.1 510.4 M535.3 505.6 L535.3 510.3 M549.3 505.5 L549.3 510.2 M562.9 505.4 L562.9 510.1 M576.4 505.4 L576.4 510.0 M589.5 505.3 L589.5 509.8 M602.5 505.2 L602.5 509.7 M615.2 505.1 L615.2 509.6 M627.7 505.1 L627.7 509.5 M640.0 505.0 L640.0 509.4 M652.1 504.9 L652.1 509.3 M280.4 512.6 L280.4 518.1 M299.5 512.4 L299.5 517.9 M318.1 512.2 L318.1 517.6 M336.3 512.1 L336.3 517.4 M354.1 511.9 L354.1 517.2 M371.6 511.8 L371.6 517.0 M388.7 511.6 L388.7 516.8 M405.5 511.5 L405.5 516.6 M421.9 511.3 L421.9 516.4 M438.0 511.2 L438.0 516.2 M453.8 511.0 L453.8 516.0 M469.3 510.9 L469.3 515.8 M484.4 510.8 L484.4 515.6 M499.3 510.6 L499.3 515.5 M513.9 510.5 L513.9 515.3 M528.3 510.4 L528.3 515.1 M542.3 510.3 L542.3 515.0 M556.1 510.1 L556.1 514.8 M569.7 510.0 L569.7 514.6 M583.0 509.9 L583.0 514.5 M596.1 509.8 L596.1 514.3 M608.9 509.7 L608.9 514.2 M621.5 509.6 L621.5 514.0 M633.9 509.4 L633.9 513.9 M646.1 509.3 L646.1 513.7 M658.0 509.2 L658.0 513.6 M270.8 518.2 L270.8 523.8 M290.0 518.0 L290.0 523.5 M308.8 517.8 L308.8 523.2 M327.2 517.5 L327.2 522.9 M345.3 517.3 L345.3 522.6 M362.9 517.1 L362.9 522.4 M380.2 516.9 L380.2 522.1 M397.1 516.7 L397.1 521.8 M413.7 516.5 L413.7 521.6 M430.0 516.3 L430.0 521.4 M445.9 516.1 L445.9 521.1 M461.6 515.9 L461.6 520.9 M476.9 515.7 L476.9 520.6 M491.9 515.6 L491.9 520.4 M506.7 515.4 L506.7 520.2 M521.1 515.2 L521.1 520.0 M535.3 515.0 L535.3 519.8 M549.3 514.9 L549.3 519.5 M562.9 514.7 L562.9 519.3 M576.4 514.5 L576.4 519.1 M589.5 514.4 L589.5 518.9 M602.5 514.2 L602.5 518.7 M615.2 514.1 L615.2 518.5 M627.7 513.9 L627.7 518.4 M640.0 513.8 L640.0 518.2 M652.1 513.6 L652.1 518.0 M280.4 523.6 L280.4 529.1 M299.5 523.3 L299.5 528.8 M318.1 523.0 L318.1 528.4 M336.3 522.8 L336.3 528.1 M354.1 522.5 L354.1 527.8 M371.6 522.2 L371.6 527.5 M388.7 522.0 L388.7 527.2 M405.5 521.7 L405.5 526.8 M421.9 521.5 L421.9 526.5 M438.0 521.2 L438.0 526.3 M453.8 521.0 L453.8 526.0 M469.3 520.8 L469.3 525.7 M484.4 520.5 L484.4 525.4 M499.3 520.3 L499.3 525.1 M513.9 520.1 L513.9 524.9 M528.3 519.9 L528.3 524.6 M542.3 519.7 L542.3 524.3 M556.1 519.4 L556.1 524.1 M569.7 519.2 L569.7 523.8 M583.0 519.0 L583.0 523.6 M596.1 518.8 L596.1 523.4 M608.9 518.6 L608.9 523.1 M621.5 518.5 L621.5 522.9 M633.9 518.3 L633.9 522.7 M646.1 518.1 L646.1 522.5 M658.0 517.9 L658.0 522.2 M270.8 529.3 L270.8 534.9 M290.0 529.0 L290.0 534.4 M308.8 528.6 L308.8 534.0 M327.2 528.3 L327.2 533.6 M345.3 527.9 L345.3 533.3 M362.9 527.6 L362.9 532.9 M380.2 527.3 L380.2 532.5 M397.1 527.0 L397.1 532.2 M413.7 526.7 L413.7 531.8 M430.0 526.4 L430.0 531.5 M445.9 526.1 L445.9 531.1 M461.6 525.8 L461.6 530.8 M476.9 525.5 L476.9 530.4 M491.9 525.3 L491.9 530.1 M506.7 525.0 L506.7 529.8 M521.1 524.7 L521.1 529.5 M535.3 524.5 L535.3 529.2 M549.3 524.2 L549.3 528.9 M562.9 524.0 L562.9 528.6 M576.4 523.7 L576.4 528.3 M589.5 523.5 L589.5 528.0 M602.5 523.2 L602.5 527.8 M615.2 523.0 L615.2 527.5 M627.7 522.8 L627.7 527.2 M640.0 522.6 L640.0 527.0 M652.1 522.3 L652.1 526.7 M280.4 534.7 L280.4 540.2 M299.5 534.2 L299.5 539.7 M318.1 533.8 L318.1 539.2 M336.3 533.5 L336.3 538.8 M354.1 533.1 L354.1 538.4 M371.6 532.7 L371.6 537.9 M388.7 532.3 L388.7 537.5 M405.5 532.0 L405.5 537.1 M421.9 531.6 L421.9 536.7 M438.0 531.3 L438.0 536.3 M453.8 530.9 L453.8 535.9 M469.3 530.6 L469.3 535.5 M484.4 530.3 L484.4 535.2 M499.3 530.0 L499.3 534.8 M513.9 529.7 L513.9 534.4 M528.3 529.3 L528.3 534.1 M542.3 529.0 L542.3 533.7 M556.1 528.8 L556.1 533.4 M569.7 528.5 L569.7 533.1 M583.0 528.2 L583.0 532.7 M596.1 527.9 L596.1 532.4 M608.9 527.6 L608.9 532.1 M621.5 527.4 L621.5 531.8 M633.9 527.1 L633.9 531.5 M646.1 526.8 L646.1 531.2 M658.0 526.6 L658.0 530.9 M270.8 540.4 L270.8 546.0 M290.0 539.9 L290.0 545.4 M308.8 539.5 L308.8 544.9 M327.2 539.0 L327.2 544.4 M345.3 538.6 L345.3 543.9 M362.9 538.1 L362.9 543.4 M380.2 537.7 L380.2 542.9 M397.1 537.3 L397.1 542.5 M413.7 536.9 L413.7 542.0 M430.0 536.5 L430.0 541.5 M445.9 536.1 L445.9 541.1 M461.6 535.7 L461.6 540.7 M476.9 535.3 L476.9 540.3 M491.9 535.0 L491.9 539.8 M506.7 534.6 L506.7 539.4 M521.1 534.3 L521.1 539.0 M535.3 533.9 L535.3 538.6 M549.3 533.6 L549.3 538.2 M562.9 533.2 L562.9 537.9 M576.4 532.9 L576.4 537.5 M589.5 532.6 L589.5 537.1 M602.5 532.3 L602.5 536.8 M615.2 532.0 L615.2 536.4 M627.7 531.6 L627.7 536.1 M640.0 531.3 L640.0 535.7 M652.1 531.1 L652.1 535.4 M280.4 545.7 L280.4 551.2 M299.5 545.2 L299.5 550.6 M318.1 544.6 L318.1 550.0 M336.3 544.1 L336.3 549.5 M354.1 543.6 L354.1 548.9 M371.6 543.2 L371.6 548.4 M388.7 542.7 L388.7 547.9 M405.5 542.2 L405.5 547.4 M421.9 541.8 L421.9 546.8 M438.0 541.3 L438.0 546.4 M453.8 540.9 L453.8 545.9 M469.3 540.5 L469.3 545.4 M484.4 540.0 L484.4 544.9 M499.3 539.6 L499.3 544.5 M513.9 539.2 L513.9 544.0 M528.3 538.8 L528.3 543.6 M542.3 538.4 L542.3 543.1 M556.1 538.1 L556.1 542.7 M569.7 537.7 L569.7 542.3 M583.0 537.3 L583.0 541.9 M596.1 537.0 L596.1 541.5 M608.9 536.6 L608.9 541.1 M621.5 536.3 L621.5 540.7 M633.9 535.9 L633.9 540.3 M646.1 535.6 L646.1 539.9 M658.0 535.2 L658.0 539.6 M270.8 551.5 L270.8 557.1 M290.0 550.9 L290.0 556.4 M308.8 550.3 L308.8 555.8 M327.2 549.8 L327.2 555.1 M345.3 549.2 L345.3 554.5 M362.9 548.7 L362.9 553.9 M380.2 548.1 L380.2 553.3 M397.1 547.6 L397.1 552.8 M413.7 547.1 L413.7 552.2 M430.0 546.6 L430.0 551.6 M445.9 546.1 L445.9 551.1 M461.6 545.6 L461.6 550.6 M476.9 545.2 L476.9 550.1 M491.9 544.7 L491.9 549.5 M506.7 544.2 L506.7 549.0 M521.1 543.8 L521.1 548.6 M535.3 543.4 L535.3 548.1 M549.3 542.9 L549.3 547.6 M562.9 542.5 L562.9 547.1 M576.4 542.1 L576.4 546.7 M589.5 541.7 L589.5 546.2 M602.5 541.3 L602.5 545.8 M615.2 540.9 L615.2 545.4 M627.7 540.5 L627.7 544.9 M640.0 540.1 L640.0 544.5 M652.1 539.8 L652.1 544.1 M280.4 556.7 L280.4 562.2 M299.5 556.1 L299.5 561.5 M318.1 555.4 L318.1 560.9 M336.3 554.8 L336.3 560.2 M354.1 554.2 L354.1 559.5 M371.6 553.6 L371.6 558.9 M388.7 553.1 L388.7 558.2 M405.5 552.5 L405.5 557.6 M421.9 551.9 L421.9 557.0 M438.0 551.4 L438.0 556.4 M453.8 550.8 L453.8 555.8 M469.3 550.3 L469.3 555.2 M484.4 549.8 L484.4 554.7 M499.3 549.3 L499.3 554.1 M513.9 548.8 L513.9 553.6 M528.3 548.3 L528.3 553.1 M542.3 547.8 L542.3 552.5 M556.1 547.4 L556.1 552.0 M569.7 546.9 L569.7 551.5 M583.0 546.5 L583.0 551.0 M596.1 546.0 L596.1 550.5 M608.9 545.6 L608.9 550.1 M621.5 545.1 L621.5 549.6 M633.9 544.7 L633.9 549.1 M646.1 544.3 L646.1 548.7 M658.0 543.9 L658.0 548.2 M270.8 562.6 L270.8 568.2 M290.0 561.9 L290.0 567.4 M308.8 561.2 L308.8 566.6 M327.2 560.5 L327.2 565.9 M345.3 559.8 L345.3 565.2 M362.9 559.2 L362.9 564.4 M380.2 558.5 L380.2 563.8 M397.1 557.9 L397.1 563.1 M413.7 557.3 L413.7 562.4 M430.0 556.7 L430.0 561.8 M445.9 556.1 L445.9 561.1 M461.6 555.5 L461.6 560.5 M476.9 555.0 L476.9 559.9 M491.9 554.4 L491.9 559.3 M506.7 553.9 L506.7 558.7 M521.1 553.3 L521.1 558.1 M535.3 552.8 L535.3 557.5 M549.3 552.3 L549.3 557.0 M562.9 551.8 L562.9 556.4 M576.4 551.3 L576.4 555.9 M589.5 550.8 L589.5 555.3 M602.5 550.3 L602.5 554.8 M615.2 549.8 L615.2 554.3 M627.7 549.4 L627.7 553.8 M640.0 548.9 L640.0 553.3 M652.1 548.5 L652.1 552.8 M280.4 567.8 L280.4 573.3 M299.5 567.0 L299.5 572.5 M318.1 566.3 L318.1 571.7 M336.3 565.5 L336.3 570.9 M354.1 564.8 L354.1 570.1 M371.6 564.1 L371.6 569.3 M388.7 563.4 L388.7 568.6 M405.5 562.7 L405.5 567.9 M421.9 562.1 L421.9 567.2 M438.0 561.4 L438.0 566.5 M453.8 560.8 L453.8 565.8 M469.3 560.2 L469.3 565.1 M484.4 559.6 L484.4 564.4 M499.3 559.0 L499.3 563.8 M513.9 558.4 L513.9 563.2 M528.3 557.8 L528.3 562.5 M542.3 557.2 L542.3 561.9 M556.1 556.7 L556.1 561.3 M569.7 556.1 L569.7 560.7 M583.0 555.6 L583.0 560.2 M596.1 555.1 L596.1 559.6 M608.9 554.6 L608.9 559.0 M621.5 554.0 L621.5 558.5 M633.9 553.6 L633.9 558.0 M646.1 553.1 L646.1 557.4 M658.0 552.6 L658.0 556.9 M270.8 573.7 L270.8 579.3 M290.0 572.9 L290.0 578.4 M308.8 572.1 L308.8 577.5 M327.2 571.3 L327.2 576.6 M345.3 570.5 L345.3 575.8 M362.9 569.7 L362.9 575.0 M380.2 569.0 L380.2 574.2 M397.1 568.2 L397.1 573.4 M413.7 567.5 L413.7 572.6 M430.0 566.8 L430.0 571.9 M445.9 566.1 L445.9 571.1 M461.6 565.4 L461.6 570.4 M476.9 564.8 L476.9 569.7 M491.9 564.1 L491.9 569.0 M506.7 563.5 L506.7 568.3 M521.1 562.8 L521.1 567.6 M535.3 562.2 L535.3 567.0 M549.3 561.6 L549.3 566.3 M562.9 561.0 L562.9 565.7 M576.4 560.5 L576.4 565.0 M589.5 559.9 L589.5 564.4 M602.5 559.3 L602.5 563.8 M615.2 558.8 L615.2 563.2 M627.7 558.2 L627.7 562.7 M640.0 557.7 L640.0 562.1 M652.1 557.2 L652.1 561.5 M280.4 578.8 L280.4 584.3 M299.5 577.9 L299.5 583.4 M318.1 577.1 L318.1 582.5 M336.3 576.2 L336.3 581.6 M354.1 575.4 L354.1 580.7 M371.6 574.6 L371.6 579.8 M388.7 573.8 L388.7 578.9 M405.5 573.0 L405.5 578.1 M421.9 572.2 L421.9 577.3 M438.0 571.5 L438.0 576.5 M453.8 570.7 L453.8 575.7 M469.3 570.0 L469.3 575.0 M484.4 569.3 L484.4 574.2 M499.3 568.6 L499.3 573.5 M513.9 567.9 L513.9 572.7 M528.3 567.3 L528.3 572.0 M542.3 566.6 L542.3 571.3 M556.1 566.0 L556.1 570.6 M569.7 565.4 L569.7 570.0 M583.0 564.7 L583.0 569.3 M596.1 564.1 L596.1 568.7 M608.9 563.5 L608.9 568.0 M621.5 562.9 L621.5 567.4 M633.9 562.4 L633.9 566.8 M646.1 561.8 L646.1 566.2 M658.0 561.2 L658.0 565.6 M270.8 584.8 L270.8 590.4 M290.0 583.8 L290.0 589.3 M308.8 582.9 L308.8 588.3 M327.2 582.0 L327.2 587.4 M345.3 581.1 L345.3 586.4 M362.9 580.2 L362.9 585.5 M380.2 579.4 L380.2 584.6 M397.1 578.5 L397.1 583.7 M413.7 577.7 L413.7 582.8 M430.0 576.9 L430.0 582.0 M445.9 576.1 L445.9 581.1 M461.6 575.3 L461.6 580.3 M476.9 574.6 L476.9 579.5 M491.9 573.8 L491.9 578.7 M506.7 573.1 L506.7 577.9 M521.1 572.4 L521.1 577.1 M535.3 571.7 L535.3 576.4 M549.3 571.0 L549.3 575.7 M562.9 570.3 L562.9 574.9 M576.4 569.6 L576.4 574.2 M589.5 569.0 L589.5 573.5 M602.5 568.3 L602.5 572.8 M615.2 567.7 L615.2 572.2 M627.7 567.1 L627.7 571.5 M640.0 566.5 L640.0 570.9 M652.1 565.9 L652.1 570.2 M280.4 589.8 L280.4 595.4 M299.5 588.8 L299.5 594.3 M318.1 587.9 L318.1 593.3 M336.3 586.9 L336.3 592.2 M354.1 586.0 L354.1 591.2 M371.6 585.0 L371.6 590.3 M388.7 584.1 L388.7 589.3 M405.5 583.2 L405.5 588.4 M421.9 582.4 L421.9 587.5 M438.0 581.5 L438.0 586.6 M453.8 580.7 L453.8 585.7 M469.3 579.9 L469.3 584.8 M484.4 579.1 L484.4 584.0 M499.3 578.3 L499.3 583.1 M513.9 577.5 L513.9 582.3 M528.3 576.8 L528.3 581.5 M542.3 576.0 L542.3 580.7 M556.1 575.3 L556.1 579.9 M569.7 574.6 L569.7 579.2 M583.0 573.9 L583.0 578.4 M596.1 573.2 L596.1 577.7 M608.9 572.5 L608.9 577.0 M621.5 571.8 L621.5 576.3 M633.9 571.2 L633.9 575.6 M646.1 570.5 L646.1 574.9 M658.0 569.9 L658.0 574.3 M270.8 595.9 L270.8 601.5 M290.0 594.8 L290.0 600.3 M308.8 593.8 L308.8 599.2 M327.2 592.7 L327.2 598.1 M345.3 591.7 L345.3 597.1 M362.9 590.8 L362.9 596.0 M380.2 589.8 L380.2 595.0 M397.1 588.8 L397.1 594.0 M413.7 587.9 L413.7 593.0 M430.0 587.0 L430.0 592.0 M445.9 586.1 L445.9 591.1 M461.6 585.2 L461.6 590.2 M476.9 584.4 L476.9 589.3 M491.9 583.5 L491.9 588.4 M506.7 582.7 L506.7 587.5 M521.1 581.9 L521.1 586.7 M535.3 581.1 L535.3 585.8 M549.3 580.3 L549.3 585.0 M562.9 579.6 L562.9 584.2 M576.4 578.8 L576.4 583.4 M589.5 578.1 L589.5 582.6 M602.5 577.4 L602.5 581.9 M615.2 576.6 L615.2 581.1 M627.7 575.9 L627.7 580.4 M640.0 575.3 L640.0 579.7 M652.1 574.6 L652.1 578.9 M280.4 600.9 L280.4 606.4 M299.5 599.8 L299.5 605.2 M318.1 598.7 L318.1 604.1 M336.3 597.6 L336.3 602.9 M354.1 596.5 L354.1 601.8 M371.6 595.5 L371.6 600.7 M388.7 594.5 L388.7 599.7 M405.5 593.5 L405.5 598.6 M421.9 592.5 L421.9 597.6 M438.0 591.6 L438.0 596.6 M453.8 590.6 L453.8 595.6 M469.3 589.7 L469.3 594.7 M484.4 588.8 L484.4 593.7 M499.3 588.0 L499.3 592.8 M513.9 587.1 L513.9 591.9 M528.3 586.2 L528.3 591.0 M542.3 585.4 L542.3 590.1 M556.1 584.6 L556.1 589.3 M569.7 583.8 L569.7 588.4 M583.0 583.0 L583.0 587.6 M596.1 582.2 L596.1 586.8 M608.9 581.5 L608.9 586.0 M621.5 580.7 L621.5 585.2 M633.9 580.0 L633.9 584.4 M646.1 579.3 L646.1 583.7 M658.0 578.6 L658.0 582.9 M270.8 607.0 L270.8 612.5 M290.0 605.8 L290.0 611.3 M308.8 604.6 L308.8 610.1 M327.2 603.5 L327.2 608.9 M345.3 602.4 L345.3 607.7 M362.9 601.3 L362.9 606.5 M380.2 600.2 L380.2 605.4 M397.1 599.1 L397.1 604.3 M413.7 598.1 L413.7 603.2 M430.0 597.1 L430.0 602.1 M445.9 596.1 L445.9 601.1 M461.6 595.1 L461.6 600.1 M476.9 594.2 L476.9 599.1 M491.9 593.2 L491.9 598.1 M506.7 592.3 L506.7 597.1 M521.1 591.4 L521.1 596.2 M535.3 590.6 L535.3 595.3 M549.3 589.7 L549.3 594.4 M562.9 588.8 L562.9 593.5 M576.4 588.0 L576.4 592.6 M589.5 587.2 L589.5 591.7 M602.5 586.4 L602.5 590.9 M615.2 585.6 L615.2 590.1 M627.7 584.8 L627.7 589.2 M640.0 584.0 L640.0 588.4 M652.1 583.3 L652.1 587.6 M280.4 611.9 L280.4 617.4 M299.5 610.7 L299.5 616.1 M318.1 609.5 L318.1 614.9 M336.3 608.3 L336.3 613.6 M354.1 607.1 L354.1 612.4 M371.6 606.0 L371.6 611.2 M388.7 604.8 L388.7 610.0 M405.5 603.8 L405.5 608.9 M421.9 602.7 L421.9 607.8 M438.0 601.6 L438.0 606.7 M453.8 600.6 L453.8 605.6 M469.3 599.6 L469.3 604.5 M484.4 598.6 L484.4 603.5 M499.3 597.6 L499.3 602.5 M513.9 596.7 L513.9 601.5 M528.3 595.7 L528.3 600.5 M542.3 594.8 L542.3 599.5 M556.1 593.9 L556.1 598.6 M569.7 593.0 L569.7 597.6 M583.0 592.2 L583.0 596.7 M596.1 591.3 L596.1 595.8 M608.9 590.5 L608.9 595.0 M621.5 589.6 L621.5 594.1 M633.9 588.8 L633.9 593.2 M646.1 588.0 L646.1 592.4 M658.0 587.3 L658.0 591.6 M270.8 618.1 L270.8 623.6 M290.0 616.8 L290.0 622.3 M308.8 615.5 L308.8 620.9 M327.2 614.2 L327.2 619.6 M345.3 613.0 L345.3 618.3 M362.9 611.8 L362.9 617.1 M380.2 610.6 L380.2 615.8 M397.1 609.4 L397.1 614.6 M413.7 608.3 L413.7 613.4 M430.0 607.2 L430.0 612.2 M445.9 606.1 L445.9 611.1 M461.6 605.0 L461.6 610.0 M476.9 604.0 L476.9 608.9 M491.9 603.0 L491.9 607.8 M506.7 602.0 L506.7 606.8 M521.1 601.0 L521.1 605.7 M535.3 600.0 L535.3 604.7 M549.3 599.0 L549.3 603.7 M562.9 598.1 L562.9 602.7 M576.4 597.2 L576.4 601.8 M589.5 596.3 L589.5 600.8 M602.5 595.4 L602.5 599.9 M615.2 594.5 L615.2 599.0 M627.7 593.7 L627.7 598.1 M640.0 592.8 L640.0 597.2 M652.1 592.0 L652.1 596.4 M280.4 623.0 L280.4 628.5 M299.5 621.6 L299.5 627.1 M318.1 620.3 L318.1 625.7 M336.3 619.0 L336.3 624.3 M354.1 617.7 L354.1 623.0 M371.6 616.4 L371.6 621.7 M388.7 615.2 L388.7 620.4 M405.5 614.0 L405.5 619.1 M421.9 612.8 L421.9 617.9 M438.0 611.7 L438.0 616.7 M453.8 610.5 L453.8 615.5 M469.3 609.4 L469.3 614.4 M484.4 608.4 L484.4 613.2 M499.3 607.3 L499.3 612.1 M513.9 606.2 L513.9 611.0 M528.3 605.2 L528.3 610.0 M542.3 604.2 L542.3 608.9 M556.1 603.2 L556.1 607.9 M569.7 602.3 L569.7 606.9 M583.0 601.3 L583.0 605.9 M596.1 600.4 L596.1 604.9 M608.9 599.4 L608.9 603.9 M621.5 598.5 L621.5 603.0 M633.9 597.7 L633.9 602.1 M646.1 596.8 L646.1 601.2 M658.0 595.9 L658.0 600.3 M270.8 629.2 L270.8 634.7 M290.0 627.8 L290.0 633.2 M308.8 626.4 L308.8 631.8 M327.2 625.0 L327.2 630.4 M345.3 623.6 L345.3 628.9 M362.9 622.3 L362.9 627.6 M380.2 621.0 L380.2 626.2 M397.1 619.8 L397.1 624.9 M413.7 618.5 L413.7 623.6 M430.0 617.3 L430.0 622.4 M445.9 616.1 L445.9 621.1 M461.6 614.9 L461.6 619.9 M476.9 613.8 L476.9 618.7 M491.9 612.7 L491.9 617.5 M506.7 611.6 L506.7 616.4 M521.1 610.5 L521.1 615.3 M535.3 609.4 L535.3 614.1 M549.3 608.4 L549.3 613.1 M562.9 607.4 L562.9 612.0 M576.4 606.4 L576.4 611.0 M589.5 605.4 L589.5 609.9 M602.5 604.4 L602.5 608.9 M615.2 603.5 L615.2 607.9 M627.7 602.5 L627.7 607.0 M640.0 601.6 L640.0 606.0 M652.1 600.7 L652.1 605.1 M280.4 634.0 L280.4 639.5 M299.5 632.5 L299.5 638.0 M318.1 631.1 L318.1 636.5 M336.3 629.6 L336.3 635.0 M354.1 628.3 L354.1 633.5 M371.6 626.9 L371.6 632.1 M388.7 625.6 L388.7 630.7 M405.5 624.3 L405.5 629.4 M421.9 623.0 L421.9 628.1 M438.0 621.7 L438.0 626.8 M453.8 620.5 L453.8 625.5 M469.3 619.3 L469.3 624.2 M484.4 618.1 L484.4 623.0 M499.3 617.0 L499.3 621.8 M513.9 615.8 L513.9 620.6 M528.3 614.7 L528.3 619.4 M542.3 613.6 L542.3 618.3 M556.1 612.5 L556.1 617.2 M569.7 611.5 L569.7 616.1 M583.0 610.4 L583.0 615.0 M596.1 609.4 L596.1 614.0 M608.9 608.4 L608.9 612.9 M621.5 607.4 L621.5 611.9 M633.9 606.5 L633.9 610.9 M646.1 605.5 L646.1 609.9 M658.0 604.6 L658.0 608.9" stroke="#d6d6d6" stroke-width="0.9" fill="none" shape-rendering="crispEdges"/>
<path d="M602.0 409.0 L1043.0 298.0 L1043.0 724.0 L985.0 724.0 L602.0 593.5Z" fill="#ffffff"/>
<clipPath id="rw"><path d="M602.0 409.0 L1043.0 298.0 L1043.0 724.0 L985.0 724.0 L602.0 593.5Z"/></clipPath>
<path clip-path="url(#rw)" d="M1110.2 156.0 L472.6 428.0 M1110.2 168.6 L472.6 430.6 M1110.2 181.3 L472.6 433.1 M1110.2 193.9 L472.6 435.7 M1110.2 206.6 L472.6 438.2 M1110.2 219.2 L472.6 440.8 M1110.2 231.8 L472.6 443.4 M1110.2 244.5 L472.6 445.9 M1110.2 257.1 L472.6 448.5 M1110.2 269.8 L472.6 451.0 M1110.2 282.4 L472.6 453.6 M1110.2 295.0 L472.6 456.1 M1110.2 307.7 L472.6 458.7 M1110.2 320.3 L472.6 461.3 M1110.2 333.0 L472.6 463.8 M1110.2 345.6 L472.6 466.4 M1110.2 358.2 L472.6 468.9 M1110.2 370.9 L472.6 471.5 M1110.2 383.5 L472.6 474.0 M1110.2 396.2 L472.6 476.6 M1110.2 408.8 L472.6 479.2 M1110.2 421.4 L472.6 481.7 M1110.2 434.1 L472.6 484.3 M1110.2 446.7 L472.6 486.8 M1110.2 459.4 L472.6 489.4 M1110.2 472.0 L472.6 491.9 M1110.2 484.6 L472.6 494.5 M1110.2 497.3 L472.6 497.1 M1110.2 509.9 L472.6 499.6 M1110.2 522.6 L472.6 502.2 M1110.2 535.2 L472.6 504.7 M1110.2 547.8 L472.6 507.3 M1110.2 560.5 L472.6 509.8 M1110.2 573.1 L472.6 512.4 M1110.2 585.8 L472.6 515.0 M1110.2 598.4 L472.6 517.5 M1110.2 611.0 L472.6 520.1 M1110.2 623.7 L472.6 522.6 M1110.2 636.3 L472.6 525.2 M1110.2 649.0 L472.6 527.7 M1110.2 661.6 L472.6 530.3 M1110.2 674.2 L472.6 532.9 M1110.2 686.9 L472.6 535.4 M1110.2 699.5 L472.6 538.0 M1110.2 712.2 L472.6 540.5 M1110.2 724.8 L472.6 543.1 M1110.2 737.4 L472.6 545.6 M1110.2 750.1 L472.6 548.2 M1110.2 762.7 L472.6 550.8 M1110.2 775.4 L472.6 553.3 M1110.2 788.0 L472.6 555.9 M1110.2 800.7 L472.6 558.4 M1110.2 813.3 L472.6 561.0 M1110.2 825.9 L472.6 563.5 M1110.2 838.6 L472.6 566.1 M1152.7 137.8 L1152.7 151.1 M1110.2 156.0 L1110.2 168.6 M1071.7 172.4 L1071.7 184.4 M1036.8 187.3 L1036.8 198.8 M1004.9 200.9 L1004.9 211.9 M975.7 213.4 L975.7 223.9 M948.9 224.8 L948.9 234.9 M924.1 235.4 L924.1 245.1 M901.2 245.1 L901.2 254.5 M880.0 254.2 L880.0 263.2 M860.2 262.6 L860.2 271.3 M841.8 270.5 L841.8 278.9 M824.5 277.9 L824.5 286.0 M808.4 284.8 L808.4 292.6 M793.2 291.2 L793.2 298.9 M778.9 297.3 L778.9 304.7 M765.5 303.1 L765.5 310.3 M752.8 308.5 L752.8 315.5 M740.8 313.6 L740.8 320.4 M729.4 318.5 L729.4 325.1 M718.6 323.1 L718.6 329.5 M708.3 327.4 L708.3 333.7 M698.6 331.6 L698.6 337.7 M689.3 335.6 L689.3 341.5 M680.5 339.3 L680.5 345.2 M672.0 342.9 L672.0 348.6 M664.0 346.4 L664.0 352.0 M656.3 349.7 L656.3 355.1 M648.9 352.8 L648.9 358.2 M641.8 355.8 L641.8 361.1 M635.0 358.7 L635.0 363.9 M628.5 361.5 L628.5 366.5 M622.3 364.2 L622.3 369.1 M616.3 366.7 L616.3 371.6 M610.5 369.2 L610.5 373.9 M604.9 371.6 L604.9 376.2 M599.5 373.9 L599.5 378.4 M594.4 376.1 L594.4 380.6 M589.4 378.2 L589.4 382.6 M584.6 380.3 L584.6 384.6 M579.9 382.3 L579.9 386.5 M575.4 384.2 L575.4 388.4 M571.1 386.0 L571.1 390.1 M566.8 387.8 L566.8 391.9 M562.8 389.6 L562.8 393.5 M558.8 391.3 L558.8 395.2 M555.0 392.9 L555.0 396.7 M551.3 394.5 L551.3 398.3 M547.7 396.0 L547.7 399.7 M544.2 397.5 L544.2 401.2 M540.8 398.9 L540.8 402.6 M537.5 400.3 L537.5 403.9 M534.3 401.7 L534.3 405.2 M531.2 403.0 L531.2 406.5 M528.2 404.3 L528.2 407.8 M525.2 405.6 L525.2 409.0 M522.4 406.8 L522.4 410.2 M519.6 408.0 L519.6 411.3 M516.9 409.2 L516.9 412.4 M514.2 410.3 L514.2 413.5 M511.6 411.4 L511.6 414.6 M509.1 412.5 L509.1 415.6 M506.7 413.5 L506.7 416.6 M504.3 414.5 L504.3 417.6 M501.9 415.5 L501.9 418.5 M499.7 416.5 L499.7 419.5 M497.4 417.4 L497.4 420.4 M495.3 418.4 L495.3 421.3 M493.1 419.3 L493.1 422.2 M491.1 420.2 L491.1 423.0 M489.0 421.0 L489.0 423.8 M487.1 421.9 L487.1 424.7 M485.1 422.7 L485.1 425.5 M483.2 423.5 L483.2 426.2 M481.4 424.3 L481.4 427.0 M479.5 425.1 L479.5 427.7 M477.8 425.8 L477.8 428.5 M476.0 426.6 L476.0 429.2 M474.3 427.3 L474.3 429.9 M472.6 428.0 L472.6 430.6 M1130.9 160.1 L1130.9 173.1 M1090.5 176.7 L1090.5 189.1 M1053.8 191.8 L1053.8 203.5 M1020.5 205.5 L1020.5 216.7 M990.0 218.0 L990.0 228.7 M962.0 229.5 L962.0 239.8 M936.3 240.1 L936.3 250.0 M912.5 249.9 L912.5 259.4 M890.4 258.9 L890.4 268.1 M869.9 267.3 L869.9 276.2 M850.8 275.2 L850.8 283.7 M833.0 282.5 L833.0 290.8 M816.3 289.4 L816.3 297.4 M800.7 295.8 L800.7 303.5 M786.0 301.8 L786.0 309.4 M772.1 307.5 L772.1 314.8 M759.0 312.9 L759.0 320.0 M746.7 318.0 L746.7 324.9 M735.0 322.8 L735.0 329.5 M723.9 327.3 L723.9 333.9 M713.4 331.7 L713.4 338.0 M703.4 335.8 L703.4 342.0 M693.9 339.7 L693.9 345.7 M684.9 343.4 L684.9 349.3 M676.2 346.9 L676.2 352.7 M668.0 350.3 L668.0 356.0 M660.1 353.6 L660.1 359.1 M652.5 356.7 L652.5 362.1 M645.3 359.6 L645.3 364.9 M638.4 362.5 L638.4 367.7 M631.7 365.2 L631.7 370.3 M625.4 367.8 L625.4 372.8 M619.2 370.3 L619.2 375.2 M613.3 372.8 L613.3 377.6 M607.7 375.1 L607.7 379.8 M602.2 377.3 L602.2 382.0 M596.9 379.5 L596.9 384.0 M591.8 381.6 L591.8 386.0 M586.9 383.6 L586.9 388.0 M582.2 385.6 L582.2 389.9 M577.6 387.4 L577.6 391.7 M573.2 389.3 L573.2 393.4 M568.9 391.0 L568.9 395.1 M564.8 392.7 L564.8 396.7 M560.8 394.4 L560.8 398.3 M556.9 396.0 L556.9 399.9 M553.1 397.5 L553.1 401.3 M549.5 399.0 L549.5 402.8 M545.9 400.5 L545.9 404.2 M542.5 401.9 L542.5 405.5 M539.1 403.3 L539.1 406.9 M535.9 404.6 L535.9 408.1 M532.7 405.9 L532.7 409.4 M529.7 407.1 L529.7 410.6 M526.7 408.4 L526.7 411.8 M523.8 409.6 L523.8 412.9 M521.0 410.7 L521.0 414.0 M518.2 411.9 L518.2 415.1 M515.5 413.0 L515.5 416.2 M512.9 414.0 L512.9 417.2 M510.4 415.1 L510.4 418.2 M507.9 416.1 L507.9 419.2 M505.5 417.1 L505.5 420.2 M503.1 418.1 L503.1 421.1 M500.8 419.0 L500.8 422.0 M498.5 419.9 L498.5 422.9 M496.3 420.8 L496.3 423.8 M494.2 421.7 L494.2 424.6 M492.1 422.6 L492.1 425.5 M490.0 423.4 L490.0 426.3 M488.0 424.3 L488.0 427.1 M486.1 425.1 L486.1 427.8 M484.2 425.8 L484.2 428.6 M482.3 426.6 L482.3 429.3 M480.4 427.4 L480.4 430.1 M478.6 428.1 L478.6 430.8 M476.9 428.8 L476.9 431.5 M475.2 429.5 L475.2 432.1 M473.5 430.2 L473.5 432.8 M471.8 430.9 L471.8 433.5 M1152.7 164.5 L1152.7 177.8 M1110.2 181.3 L1110.2 193.9 M1071.7 196.5 L1071.7 208.5 M1036.8 210.3 L1036.8 221.7 M1004.9 222.9 L1004.9 233.8 M975.7 234.4 L975.7 244.9 M948.9 245.0 L948.9 255.1 M924.1 254.8 L924.1 264.5 M901.2 263.8 L901.2 273.1 M880.0 272.2 L880.0 281.2 M860.2 280.0 L860.2 288.7 M841.8 287.3 L841.8 295.7 M824.5 294.1 L824.5 302.2 M808.4 300.5 L808.4 308.4 M793.2 306.5 L793.2 314.1 M778.9 312.1 L778.9 319.5 M765.5 317.4 L765.5 324.6 M752.8 322.5 L752.8 329.5 M740.8 327.2 L740.8 334.0 M729.4 331.7 L729.4 338.3 M718.6 336.0 L718.6 342.4 M708.3 340.0 L708.3 346.3 M698.6 343.9 L698.6 350.0 M689.3 347.5 L689.3 353.5 M680.5 351.0 L680.5 356.9 M672.0 354.4 L672.0 360.1 M664.0 357.5 L664.0 363.1 M656.3 360.6 L656.3 366.1 M648.9 363.5 L648.9 368.9 M641.8 366.3 L641.8 371.5 M635.0 369.0 L635.0 374.1 M628.5 371.6 L628.5 376.6 M622.3 374.0 L622.3 378.9 M616.3 376.4 L616.3 381.2 M610.5 378.7 L610.5 383.4 M604.9 380.9 L604.9 385.5 M599.5 383.0 L599.5 387.6 M594.4 385.0 L594.4 389.5 M589.4 387.0 L589.4 391.4 M584.6 388.9 L584.6 393.2 M579.9 390.8 L579.9 395.0 M575.4 392.5 L575.4 396.7 M571.1 394.3 L571.1 398.4 M566.8 395.9 L566.8 400.0 M562.8 397.5 L562.8 401.5 M558.8 399.1 L558.8 403.0 M555.0 400.6 L555.0 404.5 M551.3 402.1 L551.3 405.9 M547.7 403.5 L547.7 407.2 M544.2 404.9 L544.2 408.6 M540.8 406.2 L540.8 409.8 M537.5 407.5 L537.5 411.1 M534.3 408.8 L534.3 412.3 M531.2 410.0 L531.2 413.5 M528.2 411.2 L528.2 414.6 M525.2 412.4 L525.2 415.8 M522.4 413.5 L522.4 416.8 M519.6 414.6 L519.6 417.9 M516.9 415.7 L516.9 418.9 M514.2 416.7 L514.2 419.9 M511.6 417.7 L511.6 420.9 M509.1 418.7 L509.1 421.9 M506.7 419.7 L506.7 422.8 M504.3 420.6 L504.3 423.7 M501.9 421.6 L501.9 424.6 M499.7 422.5 L499.7 425.4 M497.4 423.3 L497.4 426.3 M495.3 424.2 L495.3 427.1 M493.1 425.0 L493.1 427.9 M491.1 425.9 L491.1 428.7 M489.0 426.7 L489.0 429.5 M487.1 427.4 L487.1 430.2 M485.1 428.2 L485.1 431.0 M483.2 429.0 L483.2 431.7 M481.4 429.7 L481.4 432.4 M479.5 430.4 L479.5 433.1 M477.8 431.1 L477.8 433.8 M476.0 431.8 L476.0 434.4 M474.3 432.5 L474.3 435.1 M472.6 433.1 L472.6 435.7 M1130.9 186.0 L1130.9 199.0 M1090.5 201.4 L1090.5 213.7 M1053.8 215.3 L1053.8 227.0 M1020.5 227.9 L1020.5 239.1 M990.0 239.5 L990.0 250.2 M962.0 250.1 L962.0 260.4 M936.3 259.9 L936.3 269.7 M912.5 268.9 L912.5 278.4 M890.4 277.2 L890.4 286.4 M869.9 285.0 L869.9 293.9 M850.8 292.3 L850.8 300.8 M833.0 299.0 L833.0 307.3 M816.3 305.3 L816.3 313.3 M800.7 311.3 L800.7 319.0 M786.0 316.9 L786.0 324.4 M772.1 322.1 L772.1 329.4 M759.0 327.1 L759.0 334.2 M746.7 331.8 L746.7 338.7 M735.0 336.2 L735.0 342.9 M723.9 340.4 L723.9 346.9 M713.4 344.4 L713.4 350.7 M703.4 348.2 L703.4 354.4 M693.9 351.8 L693.9 357.8 M684.9 355.2 L684.9 361.1 M676.2 358.5 L676.2 364.3 M668.0 361.6 L668.0 367.3 M660.1 364.6 L660.1 370.1 M652.5 367.5 L652.5 372.9 M645.3 370.2 L645.3 375.5 M638.4 372.8 L638.4 378.0 M631.7 375.4 L631.7 380.4 M625.4 377.8 L625.4 382.7 M619.2 380.1 L619.2 385.0 M613.3 382.3 L613.3 387.1 M607.7 384.5 L607.7 389.2 M602.2 386.6 L602.2 391.2 M596.9 388.6 L596.9 393.1 M591.8 390.5 L591.8 394.9 M586.9 392.3 L586.9 396.7 M582.2 394.1 L582.2 398.4 M577.6 395.9 L577.6 400.1 M573.2 397.6 L573.2 401.7 M568.9 399.2 L568.9 403.3 M564.8 400.7 L564.8 404.8 M560.8 402.3 L560.8 406.2 M556.9 403.7 L556.9 407.6 M553.1 405.2 L553.1 409.0 M549.5 406.6 L549.5 410.3 M545.9 407.9 L545.9 411.6 M542.5 409.2 L542.5 412.9 M539.1 410.5 L539.1 414.1 M535.9 411.7 L535.9 415.3 M532.7 412.9 L532.7 416.4 M529.7 414.1 L529.7 417.5 M526.7 415.2 L526.7 418.6 M523.8 416.3 L523.8 419.7 M521.0 417.4 L521.0 420.7 M518.2 418.4 L518.2 421.7 M515.5 419.4 L515.5 422.7 M512.9 420.4 L512.9 423.6 M510.4 421.4 L510.4 424.5 M507.9 422.3 L507.9 425.4 M505.5 423.2 L505.5 426.3 M503.1 424.1 L503.1 427.2 M500.8 425.0 L500.8 428.0 M498.5 425.9 L498.5 428.8 M496.3 426.7 L496.3 429.6 M494.2 427.5 L494.2 430.4 M492.1 428.3 L492.1 431.2 M490.0 429.1 L490.0 431.9 M488.0 429.9 L488.0 432.7 M486.1 430.6 L486.1 433.4 M484.2 431.3 L484.2 434.1 M482.3 432.0 L482.3 434.7 M480.4 432.7 L480.4 435.4 M478.6 433.4 L478.6 436.1 M476.9 434.1 L476.9 436.7 M475.2 434.7 L475.2 437.3 M473.5 435.4 L473.5 437.9 M471.8 436.0 L471.8 438.5 M1152.7 191.1 L1152.7 204.4 M1110.2 206.6 L1110.2 219.2 M1071.7 220.5 L1071.7 232.6 M1036.8 233.2 L1036.8 244.7 M1004.9 244.8 L1004.9 255.8 M975.7 255.4 L975.7 265.9 M948.9 265.2 L948.9 275.3 M924.1 274.2 L924.1 283.9 M901.2 282.5 L901.2 291.8 M880.0 290.2 L880.0 299.2 M860.2 297.4 L860.2 306.1 M841.8 304.1 L841.8 312.5 M824.5 310.4 L824.5 318.5 M808.4 316.2 L808.4 324.1 M793.2 321.7 L793.2 329.4 M778.9 326.9 L778.9 334.3 M765.5 331.8 L765.5 339.0 M752.8 336.4 L752.8 343.4 M740.8 340.8 L740.8 347.6 M729.4 344.9 L729.4 351.6 M718.6 348.9 L718.6 355.3 M708.3 352.6 L708.3 358.9 M698.6 356.1 L698.6 362.3 M689.3 359.5 L689.3 365.5 M680.5 362.7 L680.5 368.6 M672.0 365.8 L672.0 371.5 M664.0 368.7 L664.0 374.3 M656.3 371.5 L656.3 377.0 M648.9 374.2 L648.9 379.5 M641.8 376.8 L641.8 382.0 M635.0 379.2 L635.0 384.4 M628.5 381.6 L628.5 386.6 M622.3 383.9 L622.3 388.8 M616.3 386.1 L616.3 390.9 M610.5 388.2 L610.5 392.9 M604.9 390.2 L604.9 394.8 M599.5 392.1 L599.5 396.7 M594.4 394.0 L594.4 398.5 M589.4 395.8 L589.4 400.2 M584.6 397.6 L584.6 401.9 M579.9 399.3 L579.9 403.5 M575.4 400.9 L575.4 405.1 M571.1 402.5 L571.1 406.6 M566.8 404.0 L566.8 408.1 M562.8 405.5 L562.8 409.5 M558.8 406.9 L558.8 410.9 M555.0 408.3 L555.0 412.2 M551.3 409.7 L551.3 413.5 M547.7 411.0 L547.7 414.7 M544.2 412.2 L544.2 415.9 M540.8 413.5 L540.8 417.1 M537.5 414.7 L537.5 418.3 M534.3 415.8 L534.3 419.4 M531.2 417.0 L531.2 420.5 M528.2 418.1 L528.2 421.5 M525.2 419.1 L525.2 422.5 M522.4 420.2 L522.4 423.5 M519.6 421.2 L519.6 424.5 M516.9 422.2 L516.9 425.4 M514.2 423.1 L514.2 426.4 M511.6 424.1 L511.6 427.3 M509.1 425.0 L509.1 428.1 M506.7 425.9 L506.7 429.0 M504.3 426.8 L504.3 429.8 M501.9 427.6 L501.9 430.6 M499.7 428.4 L499.7 431.4 M497.4 429.2 L497.4 432.2 M495.3 430.0 L495.3 432.9 M493.1 430.8 L493.1 433.7 M491.1 431.6 L491.1 434.4 M489.0 432.3 L489.0 435.1 M487.1 433.0 L487.1 435.8 M485.1 433.7 L485.1 436.5 M483.2 434.4 L483.2 437.1 M481.4 435.1 L481.4 437.8 M479.5 435.7 L479.5 438.4 M477.8 436.4 L477.8 439.0 M476.0 437.0 L476.0 439.6 M474.3 437.6 L474.3 440.2 M472.6 438.2 L472.6 440.8 M1130.9 212.0 L1130.9 225.0 M1090.5 226.0 L1090.5 238.4 M1053.8 238.8 L1053.8 250.5 M1020.5 250.4 L1020.5 261.6 M990.0 261.0 L990.0 271.7 M962.0 270.7 L962.0 281.0 M936.3 279.6 L936.3 289.5 M912.5 287.9 L912.5 297.4 M890.4 295.6 L890.4 304.7 M869.9 302.7 L869.9 311.5 M850.8 309.3 L850.8 317.9 M833.0 315.5 L833.0 323.8 M816.3 321.3 L816.3 329.3 M800.7 326.8 L800.7 334.5 M786.0 331.9 L786.0 339.4 M772.1 336.7 L772.1 344.0 M759.0 341.3 L759.0 348.3 M746.7 345.5 L746.7 352.4 M735.0 349.6 L735.0 356.3 M723.9 353.5 L723.9 360.0 M713.4 357.1 L713.4 363.5 M703.4 360.6 L703.4 366.8 M693.9 363.9 L693.9 369.9 M684.9 367.0 L684.9 373.0 M676.2 370.0 L676.2 375.8 M668.0 372.9 L668.0 378.6 M660.1 375.7 L660.1 381.2 M652.5 378.3 L652.5 383.7 M645.3 380.8 L645.3 386.1 M638.4 383.2 L638.4 388.4 M631.7 385.5 L631.7 390.6 M625.4 387.7 L625.4 392.7 M619.2 389.8 L619.2 394.7 M613.3 391.9 L613.3 396.7 M607.7 393.9 L607.7 398.6 M602.2 395.8 L602.2 400.4 M596.9 397.6 L596.9 402.1 M591.8 399.4 L591.8 403.8 M586.9 401.1 L586.9 405.4 M582.2 402.7 L582.2 407.0 M577.6 404.3 L577.6 408.5 M573.2 405.8 L573.2 410.0 M568.9 407.3 L568.9 411.4 M564.8 408.8 L564.8 412.8 M560.8 410.2 L560.8 414.1 M556.9 411.5 L556.9 415.4 M553.1 412.8 L553.1 416.7 M549.5 414.1 L549.5 417.9 M545.9 415.3 L545.9 419.0 M542.5 416.5 L542.5 420.2 M539.1 417.7 L539.1 421.3 M535.9 418.8 L535.9 422.4 M532.7 419.9 L532.7 423.4 M529.7 421.0 L529.7 424.4 M526.7 422.0 L526.7 425.4 M523.8 423.0 L523.8 426.4 M521.0 424.0 L521.0 427.3 M518.2 425.0 L518.2 428.2 M515.5 425.9 L515.5 429.1 M512.9 426.8 L512.9 430.0 M510.4 427.7 L510.4 430.8 M507.9 428.6 L507.9 431.7 M505.5 429.4 L505.5 432.5 M503.1 430.2 L503.1 433.3 M500.8 431.0 L500.8 434.0 M498.5 431.8 L498.5 434.8 M496.3 432.6 L496.3 435.5 M494.2 433.3 L494.2 436.2 M492.1 434.0 L492.1 436.9 M490.0 434.8 L490.0 437.6 M488.0 435.5 L488.0 438.3 M486.1 436.1 L486.1 438.9 M484.2 436.8 L484.2 439.5 M482.3 437.5 L482.3 440.2 M480.4 438.1 L480.4 440.8 M478.6 438.7 L478.6 441.4 M476.9 439.3 L476.9 442.0 M475.2 439.9 L475.2 442.5 M473.5 440.5 L473.5 443.1 M471.8 441.1 L471.8 443.6 M1152.7 217.7 L1152.7 231.0 M1110.2 231.8 L1110.2 244.5 M1071.7 244.6 L1071.7 256.6 M1036.8 256.2 L1036.8 267.7 M1004.9 266.8 L1004.9 277.7 M975.7 276.4 L975.7 287.0 M948.9 285.3 L948.9 295.4 M924.1 293.6 L924.1 303.3 M901.2 301.1 L901.2 310.5 M880.0 308.2 L880.0 317.2 M860.2 314.8 L860.2 323.4 M841.8 320.9 L841.8 329.3 M824.5 326.6 L824.5 334.7 M808.4 332.0 L808.4 339.8 M793.2 337.0 L793.2 344.6 M778.9 341.7 L778.9 349.1 M765.5 346.2 L765.5 353.4 M752.8 350.4 L752.8 357.4 M740.8 354.4 L740.8 361.2 M729.4 358.2 L729.4 364.8 M718.6 361.8 L718.6 368.2 M708.3 365.2 L708.3 371.4 M698.6 368.4 L698.6 374.5 M689.3 371.5 L689.3 377.5 M680.5 374.4 L680.5 380.2 M672.0 377.2 L672.0 382.9 M664.0 379.9 L664.0 385.5 M656.3 382.4 L656.3 387.9 M648.9 384.9 L648.9 390.2 M641.8 387.2 L641.8 392.5 M635.0 389.5 L635.0 394.6 M628.5 391.6 L628.5 396.7 M622.3 393.7 L622.3 398.6 M616.3 395.7 L616.3 400.5 M610.5 397.6 L610.5 402.4 M604.9 399.5 L604.9 404.1 M599.5 401.3 L599.5 405.8 M594.4 403.0 L594.4 407.5 M589.4 404.6 L589.4 409.0 M584.6 406.2 L584.6 410.6 M579.9 407.8 L579.9 412.0 M575.4 409.3 L575.4 413.4 M571.1 410.7 L571.1 414.8 M566.8 412.1 L566.8 416.2 M562.8 413.5 L562.8 417.4 M558.8 414.8 L558.8 418.7 M555.0 416.0 L555.0 419.9 M551.3 417.3 L551.3 421.1 M547.7 418.5 L547.7 422.2 M544.2 419.6 L544.2 423.3 M540.8 420.7 L540.8 424.4 M537.5 421.8 L537.5 425.4 M534.3 422.9 L534.3 426.4 M531.2 423.9 L531.2 427.4 M528.2 424.9 L528.2 428.4 M525.2 425.9 L525.2 429.3 M522.4 426.9 L522.4 430.2 M519.6 427.8 L519.6 431.1 M516.9 428.7 L516.9 431.9 M514.2 429.6 L514.2 432.8 M511.6 430.4 L511.6 433.6 M509.1 431.3 L509.1 434.4 M506.7 432.1 L506.7 435.2 M504.3 432.9 L504.3 435.9 M501.9 433.6 L501.9 436.7 M499.7 434.4 L499.7 437.4 M497.4 435.1 L497.4 438.1 M495.3 435.9 L495.3 438.8 M493.1 436.6 L493.1 439.4 M491.1 437.3 L491.1 440.1 M489.0 437.9 L489.0 440.7 M487.1 438.6 L487.1 441.4 M485.1 439.2 L485.1 442.0 M483.2 439.9 L483.2 442.6 M481.4 440.5 L481.4 443.2 M479.5 441.1 L479.5 443.7 M477.8 441.7 L477.8 444.3 M476.0 442.2 L476.0 444.9 M474.3 442.8 L474.3 445.4 M472.6 443.4 L472.6 445.9 M1130.9 237.9 L1130.9 250.9 M1090.5 250.7 L1090.5 263.0 M1053.8 262.3 L1053.8 274.0 M1020.5 272.8 L1020.5 284.0 M990.0 282.4 L990.0 293.2 M962.0 291.3 L962.0 301.6 M936.3 299.4 L936.3 309.3 M912.5 306.9 L912.5 316.5 M890.4 313.9 L890.4 323.1 M869.9 320.4 L869.9 329.2 M850.8 326.4 L850.8 335.0 M833.0 332.0 L833.0 340.3 M816.3 337.3 L816.3 345.3 M800.7 342.3 L800.7 350.0 M786.0 346.9 L786.0 354.4 M772.1 351.3 L772.1 358.6 M759.0 355.4 L759.0 362.5 M746.7 359.3 L746.7 366.2 M735.0 363.0 L735.0 369.7 M723.9 366.5 L723.9 373.1 M713.4 369.8 L713.4 376.2 M703.4 373.0 L703.4 379.2 M693.9 376.0 L693.9 382.1 M684.9 378.9 L684.9 384.8 M676.2 381.6 L676.2 387.4 M668.0 384.2 L668.0 389.8 M660.1 386.7 L660.1 392.2 M652.5 389.1 L652.5 394.5 M645.3 391.4 L645.3 396.6 M638.4 393.5 L638.4 398.7 M631.7 395.6 L631.7 400.7 M625.4 397.7 L625.4 402.6 M619.2 399.6 L619.2 404.5 M613.3 401.5 L613.3 406.2 M607.7 403.3 L607.7 407.9 M602.2 405.0 L602.2 409.6 M596.9 406.6 L596.9 411.2 M591.8 408.3 L591.8 412.7 M586.9 409.8 L586.9 414.2 M582.2 411.3 L582.2 415.6 M577.6 412.7 L577.6 417.0 M573.2 414.1 L573.2 418.3 M568.9 415.5 L568.9 419.6 M564.8 416.8 L564.8 420.8 M560.8 418.1 L560.8 422.0 M556.9 419.3 L556.9 423.2 M553.1 420.5 L553.1 424.3 M549.5 421.6 L549.5 425.4 M545.9 422.8 L545.9 426.5 M542.5 423.9 L542.5 427.5 M539.1 424.9 L539.1 428.5 M535.9 425.9 L535.9 429.5 M532.7 426.9 L532.7 430.4 M529.7 427.9 L529.7 431.4 M526.7 428.8 L526.7 432.3 M523.8 429.8 L523.8 433.1 M521.0 430.7 L521.0 434.0 M518.2 431.5 L518.2 434.8 M515.5 432.4 L515.5 435.6 M512.9 433.2 L512.9 436.4 M510.4 434.0 L510.4 437.2 M507.9 434.8 L507.9 437.9 M505.5 435.6 L505.5 438.6 M503.1 436.3 L503.1 439.3 M500.8 437.0 L500.8 440.0 M498.5 437.7 L498.5 440.7 M496.3 438.4 L496.3 441.4 M494.2 439.1 L494.2 442.0 M492.1 439.8 L492.1 442.6 M490.0 440.4 L490.0 443.3 M488.0 441.1 L488.0 443.9 M486.1 441.7 L486.1 444.4 M484.2 442.3 L484.2 445.0 M482.3 442.9 L482.3 445.6 M480.4 443.5 L480.4 446.1 M478.6 444.0 L478.6 446.7 M476.9 444.6 L476.9 447.2 M475.2 445.1 L475.2 447.7 M473.5 445.7 L473.5 448.2 M471.8 446.2 L471.8 448.7 M1152.7 244.3 L1152.7 257.7 M1110.2 257.1 L1110.2 269.8 M1071.7 268.7 L1071.7 280.7 M1036.8 279.1 L1036.8 290.6 M1004.9 288.7 L1004.9 299.7 M975.7 297.5 L975.7 308.0 M948.9 305.5 L948.9 315.6 M924.1 312.9 L924.1 322.6 M901.2 319.8 L901.2 329.2 M880.0 326.2 L880.0 335.2 M860.2 332.1 L860.2 340.8 M841.8 337.7 L841.8 346.1 M824.5 342.8 L824.5 351.0 M808.4 347.7 L808.4 355.6 M793.2 352.3 L793.2 359.9 M778.9 356.5 L778.9 363.9 M765.5 360.6 L765.5 367.8 M752.8 364.4 L752.8 371.4 M740.8 368.0 L740.8 374.8 M729.4 371.4 L729.4 378.0 M718.6 374.7 L718.6 381.1 M708.3 377.7 L708.3 384.0 M698.6 380.7 L698.6 386.8 M689.3 383.4 L689.3 389.4 M680.5 386.1 L680.5 391.9 M672.0 388.6 L672.0 394.3 M664.0 391.0 L664.0 396.6 M656.3 393.4 L656.3 398.8 M648.9 395.6 L648.9 400.9 M641.8 397.7 L641.8 402.9 M635.0 399.7 L635.0 404.9 M628.5 401.7 L628.5 406.7 M622.3 403.6 L622.3 408.5 M616.3 405.4 L616.3 410.2 M610.5 407.1 L610.5 411.8 M604.9 408.8 L604.9 413.4 M599.5 410.4 L599.5 415.0 M594.4 411.9 L594.4 416.4 M589.4 413.4 L589.4 417.8 M584.6 414.9 L584.6 419.2 M579.9 416.3 L579.9 420.5 M575.4 417.6 L575.4 421.8 M571.1 418.9 L571.1 423.1 M566.8 420.2 L566.8 424.2 M562.8 421.4 L562.8 425.4 M558.8 422.6 L558.8 426.5 M555.0 423.8 L555.0 427.6 M551.3 424.9 L551.3 428.7 M547.7 426.0 L547.7 429.7 M544.2 427.0 L544.2 430.7 M540.8 428.0 L540.8 431.7 M537.5 429.0 L537.5 432.6 M534.3 430.0 L534.3 433.5 M531.2 430.9 L531.2 434.4 M528.2 431.8 L528.2 435.2 M525.2 432.7 L525.2 436.1 M522.4 433.6 L522.4 436.9 M519.6 434.4 L519.6 437.7 M516.9 435.2 L516.9 438.5 M514.2 436.0 L514.2 439.2 M511.6 436.8 L511.6 439.9 M509.1 437.5 L509.1 440.7 M506.7 438.3 L506.7 441.4 M504.3 439.0 L504.3 442.0 M501.9 439.7 L501.9 442.7 M499.7 440.4 L499.7 443.4 M497.4 441.0 L497.4 444.0 M495.3 441.7 L495.3 444.6 M493.1 442.3 L493.1 445.2 M491.1 442.9 L491.1 445.8 M489.0 443.6 L489.0 446.4 M487.1 444.2 L487.1 446.9 M485.1 444.7 L485.1 447.5 M483.2 445.3 L483.2 448.0 M481.4 445.9 L481.4 448.6 M479.5 446.4 L479.5 449.1 M477.8 446.9 L477.8 449.6 M476.0 447.5 L476.0 450.1 M474.3 448.0 L474.3 450.6 M472.6 448.5 L472.6 451.0 M1130.9 263.9 L1130.9 276.8 M1090.5 275.4 L1090.5 287.7 M1053.8 285.8 L1053.8 297.5 M1020.5 295.3 L1020.5 306.5 M990.0 303.9 L990.0 314.7 M962.0 311.9 L962.0 322.2 M936.3 319.2 L936.3 329.1 M912.5 326.0 L912.5 335.5 M890.4 332.2 L890.4 341.4 M869.9 338.1 L869.9 346.9 M850.8 343.5 L850.8 352.0 M833.0 348.6 L833.0 356.8 M816.3 353.3 L816.3 361.3 M800.7 357.8 L800.7 365.5 M786.0 361.9 L786.0 369.5 M772.1 365.9 L772.1 373.2 M759.0 369.6 L759.0 376.7 M746.7 373.1 L746.7 380.0 M735.0 376.4 L735.0 383.1 M723.9 379.6 L723.9 386.1 M713.4 382.6 L713.4 388.9 M703.4 385.4 L703.4 391.6 M693.9 388.1 L693.9 394.2 M684.9 390.7 L684.9 396.6 M676.2 393.1 L676.2 398.9 M668.0 395.5 L668.0 401.1 M660.1 397.7 L660.1 403.3 M652.5 399.9 L652.5 405.3 M645.3 401.9 L645.3 407.2 M638.4 403.9 L638.4 409.1 M631.7 405.8 L631.7 410.9 M625.4 407.6 L625.4 412.6 M619.2 409.4 L619.2 414.2 M613.3 411.0 L613.3 415.8 M607.7 412.6 L607.7 417.3 M602.2 414.2 L602.2 418.8 M596.9 415.7 L596.9 420.2 M591.8 417.1 L591.8 421.6 M586.9 418.5 L586.9 422.9 M582.2 419.9 L582.2 424.2 M577.6 421.2 L577.6 425.4 M573.2 422.4 L573.2 426.6 M568.9 423.7 L568.9 427.7 M564.8 424.8 L564.8 428.8 M560.8 426.0 L560.8 429.9 M556.9 427.1 L556.9 431.0 M553.1 428.1 L553.1 432.0 M549.5 429.2 L549.5 433.0 M545.9 430.2 L545.9 433.9 M542.5 431.2 L542.5 434.8 M539.1 432.1 L539.1 435.7 M535.9 433.0 L535.9 436.6 M532.7 433.9 L532.7 437.5 M529.7 434.8 L529.7 438.3 M526.7 435.7 L526.7 439.1 M523.8 436.5 L523.8 439.9 M521.0 437.3 L521.0 440.6 M518.2 438.1 L518.2 441.4 M515.5 438.8 L515.5 442.1 M512.9 439.6 L512.9 442.8 M510.4 440.3 L510.4 443.5 M507.9 441.0 L507.9 444.1 M505.5 441.7 L505.5 444.8 M503.1 442.4 L503.1 445.4 M500.8 443.0 L500.8 446.0 M498.5 443.7 L498.5 446.6 M496.3 444.3 L496.3 447.2 M494.2 444.9 L494.2 447.8 M492.1 445.5 L492.1 448.4 M490.0 446.1 L490.0 448.9 M488.0 446.7 L488.0 449.5 M486.1 447.2 L486.1 450.0 M484.2 447.8 L484.2 450.5 M482.3 448.3 L482.3 451.0 M480.4 448.8 L480.4 451.5 M478.6 449.3 L478.6 452.0 M476.9 449.8 L476.9 452.5 M475.2 450.3 L475.2 452.9 M473.5 450.8 L473.5 453.4 M471.8 451.3 L471.8 453.8 M1152.7 271.0 L1152.7 284.3 M1110.2 282.4 L1110.2 295.0 M1071.7 292.7 L1071.7 304.8 M1036.8 302.1 L1036.8 313.6 M1004.9 310.7 L1004.9 321.6 M975.7 318.5 L975.7 329.0 M948.9 325.7 L948.9 335.8 M924.1 332.3 L924.1 342.0 M901.2 338.5 L901.2 347.8 M880.0 344.2 L880.0 353.2 M860.2 349.5 L860.2 358.2 M841.8 354.5 L841.8 362.9 M824.5 359.1 L824.5 367.2 M808.4 363.4 L808.4 371.3 M793.2 367.5 L793.2 375.1 M778.9 371.3 L778.9 378.7 M765.5 375.0 L765.5 382.1 M752.8 378.4 L752.8 385.4 M740.8 381.6 L740.8 388.4 M729.4 384.6 L729.4 391.3 M718.6 387.5 L718.6 394.0 M708.3 390.3 L708.3 396.6 M698.6 392.9 L698.6 399.0 M689.3 395.4 L689.3 401.4 M680.5 397.8 L680.5 403.6 M672.0 400.0 L672.0 405.8 M664.0 402.2 L664.0 407.8 M656.3 404.3 L656.3 409.7 M648.9 406.3 L648.9 411.6 M641.8 408.2 L641.8 413.4 M635.0 410.0 L635.0 415.1 M628.5 411.7 L628.5 416.8 M622.3 413.4 L622.3 418.3 M616.3 415.0 L616.3 419.9 M610.5 416.6 L610.5 421.3 M604.9 418.1 L604.9 422.7 M599.5 419.5 L599.5 424.1 M594.4 420.9 L594.4 425.4 M589.4 422.2 L589.4 426.6 M584.6 423.5 L584.6 427.9 M579.9 424.8 L579.9 429.0 M575.4 426.0 L575.4 430.2 M571.1 427.2 L571.1 431.3 M566.8 428.3 L566.8 432.3 M562.8 429.4 L562.8 433.4 M558.8 430.4 L558.8 434.4 M555.0 431.5 L555.0 435.3 M551.3 432.5 L551.3 436.3 M547.7 433.4 L547.7 437.2 M544.2 434.4 L544.2 438.1 M540.8 435.3 L540.8 438.9 M537.5 436.2 L537.5 439.8 M534.3 437.0 L534.3 440.6 M531.2 437.9 L531.2 441.3 M528.2 438.7 L528.2 442.1 M525.2 439.5 L525.2 442.9 M522.4 440.2 L522.4 443.6 M519.6 441.0 L519.6 444.3 M516.9 441.7 L516.9 445.0 M514.2 442.4 L514.2 445.6 M511.6 443.1 L511.6 446.3 M509.1 443.8 L509.1 446.9 M506.7 444.5 L506.7 447.6 M504.3 445.1 L504.3 448.2 M501.9 445.7 L501.9 448.7 M499.7 446.3 L499.7 449.3 M497.4 446.9 L497.4 449.9 M495.3 447.5 L495.3 450.4 M493.1 448.1 L493.1 451.0 M491.1 448.6 L491.1 451.5 M489.0 449.2 L489.0 452.0 M487.1 449.7 L487.1 452.5 M485.1 450.2 L485.1 453.0 M483.2 450.8 L483.2 453.5 M481.4 451.3 L481.4 453.9 M479.5 451.7 L479.5 454.4 M477.8 452.2 L477.8 454.9 M476.0 452.7 L476.0 455.3 M474.3 453.1 L474.3 455.7 M472.6 453.6 L472.6 456.1 M1130.9 289.8 L1130.9 302.8 M1090.5 300.0 L1090.5 312.3 M1053.8 309.3 L1053.8 321.0 M1020.5 317.7 L1020.5 328.9 M990.0 325.4 L990.0 336.1 M962.0 332.5 L962.0 342.8 M936.3 339.0 L936.3 348.9 M912.5 345.0 L912.5 354.5 M890.4 350.6 L890.4 359.7 M869.9 355.7 L869.9 364.6 M850.8 360.6 L850.8 369.1 M833.0 365.1 L833.0 373.3 M816.3 369.3 L816.3 377.3 M800.7 373.2 L800.7 381.0 M786.0 377.0 L786.0 384.5 M772.1 380.5 L772.1 387.8 M759.0 383.8 L759.0 390.9 M746.7 386.9 L746.7 393.8 M735.0 389.8 L735.0 396.6 M723.9 392.6 L723.9 399.2 M713.4 395.3 L713.4 401.7 M703.4 397.8 L703.4 404.0 M693.9 400.2 L693.9 406.3 M684.9 402.5 L684.9 408.4 M676.2 404.7 L676.2 410.5 M668.0 406.8 L668.0 412.4 M660.1 408.8 L660.1 414.3 M652.5 410.7 L652.5 416.1 M645.3 412.5 L645.3 417.8 M638.4 414.3 L638.4 419.4 M631.7 415.9 L631.7 421.0 M625.4 417.6 L625.4 422.5 M619.2 419.1 L619.2 424.0 M613.3 420.6 L613.3 425.4 M607.7 422.0 L607.7 426.7 M602.2 423.4 L602.2 428.0 M596.9 424.7 L596.9 429.3 M591.8 426.0 L591.8 430.5 M586.9 427.3 L586.9 431.6 M582.2 428.5 L582.2 432.7 M577.6 429.6 L577.6 433.8 M573.2 430.7 L573.2 434.9 M568.9 431.8 L568.9 435.9 M564.8 432.9 L564.8 436.9 M560.8 433.9 L560.8 437.8 M556.9 434.9 L556.9 438.7 M553.1 435.8 L553.1 439.6 M549.5 436.7 L549.5 440.5 M545.9 437.6 L545.9 441.3 M542.5 438.5 L542.5 442.2 M539.1 439.3 L539.1 443.0 M535.9 440.2 L535.9 443.7 M532.7 441.0 L532.7 444.5 M529.7 441.7 L529.7 445.2 M526.7 442.5 L526.7 445.9 M523.8 443.2 L523.8 446.6 M521.0 443.9 L521.0 447.3 M518.2 444.6 L518.2 447.9 M515.5 445.3 L515.5 448.5 M512.9 446.0 L512.9 449.2 M510.4 446.6 L510.4 449.8 M507.9 447.2 L507.9 450.4 M505.5 447.9 L505.5 450.9 M503.1 448.5 L503.1 451.5 M500.8 449.0 L500.8 452.0 M498.5 449.6 L498.5 452.6 M496.3 450.2 L496.3 453.1 M494.2 450.7 L494.2 453.6 M492.1 451.2 L492.1 454.1 M490.0 451.8 L490.0 454.6 M488.0 452.3 L488.0 455.1 M486.1 452.8 L486.1 455.5 M484.2 453.2 L484.2 456.0 M482.3 453.7 L482.3 456.4 M480.4 454.2 L480.4 456.9 M478.6 454.6 L478.6 457.3 M476.9 455.1 L476.9 457.7 M475.2 455.5 L475.2 458.1 M473.5 455.9 L473.5 458.5 M471.8 456.4 L471.8 458.9 M1152.7 297.6 L1152.7 310.9 M1110.2 307.7 L1110.2 320.3 M1071.7 316.8 L1071.7 328.8 M1036.8 325.1 L1036.8 336.5 M1004.9 332.6 L1004.9 343.6 M975.7 339.5 L975.7 350.0 M948.9 345.9 L948.9 356.0 M924.1 351.7 L924.1 361.4 M901.2 357.2 L901.2 366.5 M880.0 362.2 L880.0 371.2 M860.2 366.9 L860.2 375.6 M841.8 371.3 L841.8 379.6 M824.5 375.3 L824.5 383.5 M808.4 379.2 L808.4 387.0 M793.2 382.8 L793.2 390.4 M778.9 386.1 L778.9 393.5 M765.5 389.3 L765.5 396.5 M752.8 392.3 L752.8 399.3 M740.8 395.2 L740.8 402.0 M729.4 397.9 L729.4 404.5 M718.6 400.4 L718.6 406.9 M708.3 402.9 L708.3 409.2 M698.6 405.2 L698.6 411.3 M689.3 407.4 L689.3 413.4 M680.5 409.5 L680.5 415.3 M672.0 411.5 L672.0 417.2 M664.0 413.4 L664.0 419.0 M656.3 415.2 L656.3 420.7 M648.9 417.0 L648.9 422.3 M641.8 418.6 L641.8 423.9 M635.0 420.2 L635.0 425.4 M628.5 421.8 L628.5 426.8 M622.3 423.3 L622.3 428.2 M616.3 424.7 L616.3 429.5 M610.5 426.1 L610.5 430.8 M604.9 427.4 L604.9 432.0 M599.5 428.6 L599.5 433.2 M594.4 429.9 L594.4 434.4 M589.4 431.1 L589.4 435.5 M584.6 432.2 L584.6 436.5 M579.9 433.3 L579.9 437.5 M575.4 434.4 L575.4 438.5 M571.1 435.4 L571.1 439.5 M566.8 436.4 L566.8 440.4 M562.8 437.4 L562.8 441.3 M558.8 438.3 L558.8 442.2 M555.0 439.2 L555.0 443.1 M551.3 440.1 L551.3 443.9 M547.7 440.9 L547.7 444.7 M544.2 441.8 L544.2 445.4 M540.8 442.6 L540.8 446.2 M537.5 443.3 L537.5 446.9 M534.3 444.1 L534.3 447.6 M531.2 444.8 L531.2 448.3 M528.2 445.5 L528.2 449.0 M525.2 446.2 L525.2 449.6 M522.4 446.9 L522.4 450.3 M519.6 447.6 L519.6 450.9 M516.9 448.2 L516.9 451.5 M514.2 448.9 L514.2 452.1 M511.6 449.5 L511.6 452.6 M509.1 450.1 L509.1 453.2 M506.7 450.6 L506.7 453.7 M504.3 451.2 L504.3 454.3 M501.9 451.8 L501.9 454.8 M499.7 452.3 L499.7 455.3 M497.4 452.8 L497.4 455.8 M495.3 453.3 L495.3 456.3 M493.1 453.9 L493.1 456.7 M491.1 454.3 L491.1 457.2 M489.0 454.8 L489.0 457.6 M487.1 455.3 L487.1 458.1 M485.1 455.8 L485.1 458.5 M483.2 456.2 L483.2 458.9 M481.4 456.6 L481.4 459.3 M479.5 457.1 L479.5 459.7 M477.8 457.5 L477.8 460.1 M476.0 457.9 L476.0 460.5 M474.3 458.3 L474.3 460.9 M472.6 458.7 L472.6 461.3 M1130.9 315.7 L1130.9 328.7 M1090.5 324.7 L1090.5 337.0 M1053.8 332.8 L1053.8 344.5 M1020.5 340.1 L1020.5 351.4 M990.0 346.9 L990.0 357.6 M962.0 353.1 L962.0 363.4 M936.3 358.8 L936.3 368.6 M912.5 364.0 L912.5 373.5 M890.4 368.9 L890.4 378.1 M869.9 373.4 L869.9 382.3 M850.8 377.6 L850.8 386.2 M833.0 381.6 L833.0 389.8 M816.3 385.3 L816.3 393.3 M800.7 388.7 L800.7 396.5 M786.0 392.0 L786.0 399.5 M772.1 395.1 L772.1 402.3 M759.0 397.9 L759.0 405.0 M746.7 400.7 L746.7 407.6 M735.0 403.3 L735.0 410.0 M723.9 405.7 L723.9 412.2 M713.4 408.0 L713.4 414.4 M703.4 410.2 L703.4 416.4 M693.9 412.3 L693.9 418.4 M684.9 414.3 L684.9 420.3 M676.2 416.3 L676.2 422.0 M668.0 418.1 L668.0 423.7 M660.1 419.8 L660.1 425.3 M652.5 421.5 L652.5 426.9 M645.3 423.1 L645.3 428.4 M638.4 424.6 L638.4 429.8 M631.7 426.1 L631.7 431.2 M625.4 427.5 L625.4 432.5 M619.2 428.9 L619.2 433.7 M613.3 430.2 L613.3 434.9 M607.7 431.4 L607.7 436.1 M602.2 432.6 L602.2 437.2 M596.9 433.8 L596.9 438.3 M591.8 434.9 L591.8 439.3 M586.9 436.0 L586.9 440.4 M582.2 437.0 L582.2 441.3 M577.6 438.0 L577.6 442.3 M573.2 439.0 L573.2 443.2 M568.9 440.0 L568.9 444.1 M564.8 440.9 L564.8 444.9 M560.8 441.8 L560.8 445.7 M556.9 442.6 L556.9 446.5 M553.1 443.5 L553.1 447.3 M549.5 444.3 L549.5 448.0 M545.9 445.1 L545.9 448.8 M542.5 445.8 L542.5 449.5 M539.1 446.6 L539.1 450.2 M535.9 447.3 L535.9 450.8 M532.7 448.0 L532.7 451.5 M529.7 448.7 L529.7 452.1 M526.7 449.3 L526.7 452.7 M523.8 450.0 L523.8 453.3 M521.0 450.6 L521.0 453.9 M518.2 451.2 L518.2 454.5 M515.5 451.8 L515.5 455.0 M512.9 452.4 L512.9 455.6 M510.4 452.9 L510.4 456.1 M507.9 453.5 L507.9 456.6 M505.5 454.0 L505.5 457.1 M503.1 454.5 L503.1 457.6 M500.8 455.0 L500.8 458.0 M498.5 455.5 L498.5 458.5 M496.3 456.0 L496.3 459.0 M494.2 456.5 L494.2 459.4 M492.1 457.0 L492.1 459.8 M490.0 457.4 L490.0 460.2 M488.0 457.9 L488.0 460.7 M486.1 458.3 L486.1 461.1 M484.2 458.7 L484.2 461.5 M482.3 459.1 L482.3 461.8 M480.4 459.5 L480.4 462.2 M478.6 459.9 L478.6 462.6 M476.9 460.3 L476.9 462.9 M475.2 460.7 L475.2 463.3 M473.5 461.1 L473.5 463.6 M471.8 461.4 L471.8 464.0 M1152.7 324.2 L1152.7 337.5 M1110.2 333.0 L1110.2 345.6 M1071.7 340.9 L1071.7 352.9 M1036.8 348.0 L1036.8 359.5 M1004.9 354.6 L1004.9 365.5 M975.7 360.6 L975.7 371.1 M948.9 366.1 L948.9 376.1 M924.1 371.1 L924.1 380.8 M901.2 375.8 L901.2 385.2 M880.0 380.2 L880.0 389.2 M860.2 384.3 L860.2 392.9 M841.8 388.0 L841.8 396.4 M824.5 391.6 L824.5 399.7 M808.4 394.9 L808.4 402.8 M793.2 398.0 L793.2 405.6 M778.9 400.9 L778.9 408.3 M765.5 403.7 L765.5 410.9 M752.8 406.3 L752.8 413.3 M740.8 408.8 L740.8 415.6 M729.4 411.1 L729.4 417.7 M718.6 413.3 L718.6 419.8 M708.3 415.4 L708.3 421.7 M698.6 417.4 L698.6 423.6 M689.3 419.3 L689.3 425.3 M680.5 421.2 L680.5 427.0 M672.0 422.9 L672.0 428.6 M664.0 424.5 L664.0 430.1 M656.3 426.1 L656.3 431.6 M648.9 427.6 L648.9 433.0 M641.8 429.1 L641.8 434.3 M635.0 430.5 L635.0 435.6 M628.5 431.8 L628.5 436.8 M622.3 433.1 L622.3 438.0 M616.3 434.3 L616.3 439.2 M610.5 435.5 L610.5 440.3 M604.9 436.7 L604.9 441.3 M599.5 437.8 L599.5 442.3 M594.4 438.8 L594.4 443.3 M589.4 439.9 L589.4 444.3 M584.6 440.8 L584.6 445.2 M579.9 441.8 L579.9 446.1 M575.4 442.7 L575.4 446.9 M571.1 443.6 L571.1 447.7 M566.8 444.5 L566.8 448.5 M562.8 445.3 L562.8 449.3 M558.8 446.1 L558.8 450.0 M555.0 446.9 L555.0 450.8 M551.3 447.7 L551.3 451.5 M547.7 448.4 L547.7 452.2 M544.2 449.1 L544.2 452.8 M540.8 449.8 L540.8 453.5 M537.5 450.5 L537.5 454.1 M534.3 451.2 L534.3 454.7 M531.2 451.8 L531.2 455.3 M528.2 452.4 L528.2 455.9 M525.2 453.0 L525.2 456.4 M522.4 453.6 L522.4 457.0 M519.6 454.2 L519.6 457.5 M516.9 454.7 L516.9 458.0 M514.2 455.3 L514.2 458.5 M511.6 455.8 L511.6 459.0 M509.1 456.3 L509.1 459.5 M506.7 456.8 L506.7 459.9 M504.3 457.3 L504.3 460.4 M501.9 457.8 L501.9 460.8 M499.7 458.3 L499.7 461.3 M497.4 458.7 L497.4 461.7 M495.3 459.2 L495.3 462.1 M493.1 459.6 L493.1 462.5 M491.1 460.0 L491.1 462.9 M489.0 460.5 L489.0 463.3 M487.1 460.9 L487.1 463.6 M485.1 461.3 L485.1 464.0 M483.2 461.6 L483.2 464.4 M481.4 462.0 L481.4 464.7 M479.5 462.4 L479.5 465.1 M477.8 462.8 L477.8 465.4 M476.0 463.1 L476.0 465.7 M474.3 463.5 L474.3 466.1 M472.6 463.8 L472.6 466.4 M1130.9 341.7 L1130.9 354.6 M1090.5 349.3 L1090.5 361.7 M1053.8 356.3 L1053.8 368.0 M1020.5 362.6 L1020.5 373.8 M990.0 368.4 L990.0 379.1 M962.0 373.7 L962.0 384.0 M936.3 378.5 L936.3 388.4 M912.5 383.0 L912.5 392.6 M890.4 387.2 L890.4 396.4 M869.9 391.1 L869.9 399.9 M850.8 394.7 L850.8 403.3 M833.0 398.1 L833.0 406.4 M816.3 401.3 L816.3 409.3 M800.7 404.2 L800.7 412.0 M786.0 407.0 L786.0 414.5 M772.1 409.6 L772.1 416.9 M759.0 412.1 L759.0 419.2 M746.7 414.5 L746.7 421.3 M735.0 416.7 L735.0 423.4 M723.9 418.8 L723.9 425.3 M713.4 420.8 L713.4 427.1 M703.4 422.7 L703.4 428.9 M693.9 424.5 L693.9 430.5 M684.9 426.2 L684.9 432.1 M676.2 427.8 L676.2 433.6 M668.0 429.4 L668.0 435.0 M660.1 430.9 L660.1 436.4 M652.5 432.3 L652.5 437.7 M645.3 433.7 L645.3 439.0 M638.4 435.0 L638.4 440.2 M631.7 436.2 L631.7 441.3 M625.4 437.4 L625.4 442.4 M619.2 438.6 L619.2 443.5 M613.3 439.7 L613.3 444.5 M607.7 440.8 L607.7 445.5 M602.2 441.8 L602.2 446.4 M596.9 442.8 L596.9 447.4 M591.8 443.8 L591.8 448.2 M586.9 444.7 L586.9 449.1 M582.2 445.6 L582.2 449.9 M577.6 446.5 L577.6 450.7 M573.2 447.3 L573.2 451.5 M568.9 448.1 L568.9 452.2 M564.8 448.9 L564.8 452.9 M560.8 449.7 L560.8 453.6 M556.9 450.4 L556.9 454.3 M553.1 451.1 L553.1 455.0 M549.5 451.8 L549.5 455.6 M545.9 452.5 L545.9 456.2 M542.5 453.1 L542.5 456.8 M539.1 453.8 L539.1 457.4 M535.9 454.4 L535.9 457.9 M532.7 455.0 L532.7 458.5 M529.7 455.6 L529.7 459.0 M526.7 456.1 L526.7 459.5 M523.8 456.7 L523.8 460.1 M521.0 457.2 L521.0 460.5 M518.2 457.7 L518.2 461.0 M515.5 458.3 L515.5 461.5 M512.9 458.7 L512.9 461.9 M510.4 459.2 L510.4 462.4 M507.9 459.7 L507.9 462.8 M505.5 460.2 L505.5 463.2 M503.1 460.6 L503.1 463.6 M500.8 461.0 L500.8 464.0 M498.5 461.5 L498.5 464.4 M496.3 461.9 L496.3 464.8 M494.2 462.3 L494.2 465.2 M492.1 462.7 L492.1 465.6 M490.0 463.1 L490.0 465.9 M488.0 463.5 L488.0 466.3 M486.1 463.8 L486.1 466.6 M484.2 464.2 L484.2 466.9 M482.3 464.5 L482.3 467.3 M480.4 464.9 L480.4 467.6 M478.6 465.2 L478.6 467.9 M476.9 465.6 L476.9 468.2 M475.2 465.9 L475.2 468.5 M473.5 466.2 L473.5 468.8 M471.8 466.5 L471.8 469.1 M1152.7 350.8 L1152.7 364.2 M1110.2 358.2 L1110.2 370.9 M1071.7 364.9 L1071.7 376.9 M1036.8 371.0 L1036.8 382.5 M1004.9 376.5 L1004.9 387.5 M975.7 381.6 L975.7 392.1 M948.9 386.2 L948.9 396.3 M924.1 390.5 L924.1 400.2 M901.2 394.5 L901.2 403.8 M880.0 398.2 L880.0 407.2 M860.2 401.6 L860.2 410.3 M841.8 404.8 L841.8 413.2 M824.5 407.8 L824.5 416.0 M808.4 410.6 L808.4 418.5 M793.2 413.3 L793.2 420.9 M778.9 415.8 L778.9 423.2 M765.5 418.1 L765.5 425.3 M752.8 420.3 L752.8 427.3 M740.8 422.4 L740.8 429.2 M729.4 424.4 L729.4 431.0 M718.6 426.2 L718.6 432.7 M708.3 428.0 L708.3 434.3 M698.6 429.7 L698.6 435.8 M689.3 431.3 L689.3 437.3 M680.5 432.8 L680.5 438.7 M672.0 434.3 L672.0 440.0 M664.0 435.7 L664.0 441.3 M656.3 437.0 L656.3 442.5 M648.9 438.3 L648.9 443.7 M641.8 439.6 L641.8 444.8 M635.0 440.7 L635.0 445.9 M628.5 441.9 L628.5 446.9 M622.3 443.0 L622.3 447.9 M616.3 444.0 L616.3 448.8 M610.5 445.0 L610.5 449.7 M604.9 446.0 L604.9 450.6 M599.5 446.9 L599.5 451.5 M594.4 447.8 L594.4 452.3 M589.4 448.7 L589.4 453.1 M584.6 449.5 L584.6 453.8 M579.9 450.3 L579.9 454.6 M575.4 451.1 L575.4 455.3 M571.1 451.8 L571.1 456.0 M566.8 452.6 L566.8 456.6 M562.8 453.3 L562.8 457.3 M558.8 454.0 L558.8 457.9 M555.0 454.6 L555.0 458.5 M551.3 455.3 L551.3 459.1 M547.7 455.9 L547.7 459.6 M544.2 456.5 L544.2 460.2 M540.8 457.1 L540.8 460.7 M537.5 457.7 L537.5 461.3 M534.3 458.2 L534.3 461.8 M531.2 458.8 L531.2 462.2 M528.2 459.3 L528.2 462.7 M525.2 459.8 L525.2 463.2 M522.4 460.3 L522.4 463.6 M519.6 460.8 L519.6 464.1 M516.9 461.3 L516.9 464.5 M514.2 461.7 L514.2 464.9 M511.6 462.2 L511.6 465.3 M509.1 462.6 L509.1 465.7 M506.7 463.0 L506.7 466.1 M504.3 463.4 L504.3 466.5 M501.9 463.8 L501.9 466.9 M499.7 464.2 L499.7 467.2 M497.4 464.6 L497.4 467.6 M495.3 465.0 L495.3 467.9 M493.1 465.4 L493.1 468.3 M491.1 465.7 L491.1 468.6 M489.0 466.1 L489.0 468.9 M487.1 466.4 L487.1 469.2 M485.1 466.8 L485.1 469.5 M483.2 467.1 L483.2 469.8 M481.4 467.4 L481.4 470.1 M479.5 467.7 L479.5 470.4 M477.8 468.0 L477.8 470.7 M476.0 468.3 L476.0 471.0 M474.3 468.6 L474.3 471.2 M472.6 468.9 L472.6 471.5 M1130.9 367.6 L1130.9 380.6 M1090.5 374.0 L1090.5 386.3 M1053.8 379.8 L1053.8 391.5 M1020.5 385.0 L1020.5 396.3 M990.0 389.8 L990.0 400.6 M962.0 394.3 L962.0 404.6 M936.3 398.3 L936.3 408.2 M912.5 402.1 L912.5 411.6 M890.4 405.6 L890.4 414.7 M869.9 408.8 L869.9 417.6 M850.8 411.8 L850.8 420.3 M833.0 414.6 L833.0 422.9 M816.3 417.2 L816.3 425.2 M800.7 419.7 L800.7 427.5 M786.0 422.0 L786.0 429.6 M772.1 424.2 L772.1 431.5 M759.0 426.3 L759.0 433.4 M746.7 428.2 L746.7 435.1 M735.0 430.1 L735.0 436.8 M723.9 431.8 L723.9 438.4 M713.4 433.5 L713.4 439.9 M703.4 435.1 L703.4 441.3 M693.9 436.6 L693.9 442.6 M684.9 438.0 L684.9 443.9 M676.2 439.4 L676.2 445.1 M668.0 440.7 L668.0 446.3 M660.1 441.9 L660.1 447.4 M652.5 443.1 L652.5 448.5 M645.3 444.2 L645.3 449.5 M638.4 445.3 L638.4 450.5 M631.7 446.4 L631.7 451.5 M625.4 447.4 L625.4 452.4 M619.2 448.4 L619.2 453.2 M613.3 449.3 L613.3 454.1 M607.7 450.2 L607.7 454.9 M602.2 451.0 L602.2 455.6 M596.9 451.9 L596.9 456.4 M591.8 452.7 L591.8 457.1 M586.9 453.5 L586.9 457.8 M582.2 454.2 L582.2 458.5 M577.6 454.9 L577.6 459.1 M573.2 455.6 L573.2 459.8 M568.9 456.3 L568.9 460.4 M564.8 456.9 L564.8 461.0 M560.8 457.6 L560.8 461.5 M556.9 458.2 L556.9 462.1 M553.1 458.8 L553.1 462.6 M549.5 459.4 L549.5 463.1 M545.9 459.9 L545.9 463.6 M542.5 460.5 L542.5 464.1 M539.1 461.0 L539.1 464.6 M535.9 461.5 L535.9 465.1 M532.7 462.0 L532.7 465.5 M529.7 462.5 L529.7 465.9 M526.7 463.0 L526.7 466.4 M523.8 463.4 L523.8 466.8 M521.0 463.9 L521.0 467.2 M518.2 464.3 L518.2 467.6 M515.5 464.7 L515.5 468.0 M512.9 465.1 L512.9 468.3 M510.4 465.5 L510.4 468.7 M507.9 465.9 L507.9 469.0 M505.5 466.3 L505.5 469.4 M503.1 466.7 L503.1 469.7 M500.8 467.0 L500.8 470.0 M498.5 467.4 L498.5 470.4 M496.3 467.7 L496.3 470.7 M494.2 468.1 L494.2 471.0 M492.1 468.4 L492.1 471.3 M490.0 468.7 L490.0 471.6 M488.0 469.1 L488.0 471.9 M486.1 469.4 L486.1 472.1 M484.2 469.7 L484.2 472.4 M482.3 470.0 L482.3 472.7 M480.4 470.3 L480.4 472.9 M478.6 470.5 L478.6 473.2 M476.9 470.8 L476.9 473.4 M475.2 471.1 L475.2 473.7 M473.5 471.4 L473.5 473.9 M471.8 471.6 L471.8 474.2 M1152.7 377.5 L1152.7 390.8 M1110.2 383.5 L1110.2 396.2 M1071.7 389.0 L1071.7 401.0 M1036.8 393.9 L1036.8 405.4 M1004.9 398.5 L1004.9 409.4 M975.7 402.6 L975.7 413.1 M948.9 406.4 L948.9 416.5 M924.1 409.9 L924.1 419.6 M901.2 413.2 L901.2 422.5 M880.0 416.2 L880.0 425.2 M860.2 419.0 L860.2 427.7 M841.8 421.6 L841.8 430.0 M824.5 424.1 L824.5 432.2 M808.4 426.4 L808.4 434.2 M793.2 428.5 L793.2 436.2 M778.9 430.6 L778.9 438.0 M765.5 432.5 L765.5 439.7 M752.8 434.3 L752.8 441.3 M740.8 436.0 L740.8 442.8 M729.4 437.6 L729.4 444.2 M718.6 439.1 L718.6 445.6 M708.3 440.6 L708.3 446.9 M698.6 442.0 L698.6 448.1 M689.3 443.3 L689.3 449.3 M680.5 444.5 L680.5 450.4 M672.0 445.7 L672.0 451.4 M664.0 446.9 L664.0 452.5 M656.3 448.0 L656.3 453.4 M648.9 449.0 L648.9 454.4 M641.8 450.0 L641.8 455.3 M635.0 451.0 L635.0 456.1 M628.5 451.9 L628.5 456.9 M622.3 452.8 L622.3 457.7 M616.3 453.7 L616.3 458.5 M610.5 454.5 L610.5 459.2 M604.9 455.3 L604.9 459.9 M599.5 456.0 L599.5 460.6 M594.4 456.8 L594.4 461.2 M589.4 457.5 L589.4 461.9 M584.6 458.2 L584.6 462.5 M579.9 458.8 L579.9 463.1 M575.4 459.5 L575.4 463.6 M571.1 460.1 L571.1 464.2 M566.8 460.7 L566.8 464.7 M562.8 461.2 L562.8 465.2 M558.8 461.8 L558.8 465.7 M555.0 462.4 L555.0 466.2 M551.3 462.9 L551.3 466.7 M547.7 463.4 L547.7 467.1 M544.2 463.9 L544.2 467.6 M540.8 464.4 L540.8 468.0 M537.5 464.8 L537.5 468.4 M534.3 465.3 L534.3 468.8 M531.2 465.7 L531.2 469.2 M528.2 466.2 L528.2 469.6 M525.2 466.6 L525.2 470.0 M522.4 467.0 L522.4 470.3 M519.6 467.4 L519.6 470.7 M516.9 467.8 L516.9 471.0 M514.2 468.1 L514.2 471.4 M511.6 468.5 L511.6 471.7 M509.1 468.9 L509.1 472.0 M506.7 469.2 L506.7 472.3 M504.3 469.6 L504.3 472.6 M501.9 469.9 L501.9 472.9 M499.7 470.2 L499.7 473.2 M497.4 470.5 L497.4 473.5 M495.3 470.8 L495.3 473.7 M493.1 471.1 L493.1 474.0 M491.1 471.4 L491.1 474.3 M489.0 471.7 L489.0 474.5 M487.1 472.0 L487.1 474.8 M485.1 472.3 L485.1 475.0 M483.2 472.5 L483.2 475.3 M481.4 472.8 L481.4 475.5 M479.5 473.1 L479.5 475.7 M477.8 473.3 L477.8 476.0 M476.0 473.6 L476.0 476.2 M474.3 473.8 L474.3 476.4 M472.6 474.0 L472.6 476.6 M1130.9 393.5 L1130.9 406.5 M1090.5 398.6 L1090.5 411.0 M1053.8 403.3 L1053.8 415.0 M1020.5 407.5 L1020.5 418.7 M990.0 411.3 L990.0 422.1 M962.0 414.8 L962.0 425.1 M936.3 418.1 L936.3 428.0 M912.5 421.1 L912.5 430.6 M890.4 423.9 L890.4 433.0 M869.9 426.5 L869.9 435.3 M850.8 428.9 L850.8 437.4 M833.0 431.1 L833.0 439.4 M816.3 433.2 L816.3 441.2 M800.7 435.2 L800.7 443.0 M786.0 437.1 L786.0 444.6 M772.1 438.8 L772.1 446.1 M759.0 440.5 L759.0 447.6 M746.7 442.0 L746.7 448.9 M735.0 443.5 L735.0 450.2 M723.9 444.9 L723.9 451.4 M713.4 446.2 L713.4 452.6 M703.4 447.5 L703.4 453.7 M693.9 448.7 L693.9 454.7 M684.9 449.8 L684.9 455.7 M676.2 450.9 L676.2 456.7 M668.0 452.0 L668.0 457.6 M660.1 453.0 L660.1 458.5 M652.5 453.9 L652.5 459.3 M645.3 454.8 L645.3 460.1 M638.4 455.7 L638.4 460.9 M631.7 456.5 L631.7 461.6 M625.4 457.3 L625.4 462.3 M619.2 458.1 L619.2 463.0 M613.3 458.8 L613.3 463.6 M607.7 459.6 L607.7 464.3 M602.2 460.3 L602.2 464.9 M596.9 460.9 L596.9 465.4 M591.8 461.6 L591.8 466.0 M586.9 462.2 L586.9 466.5 M582.2 462.8 L582.2 467.1 M577.6 463.4 L577.6 467.6 M573.2 463.9 L573.2 468.1 M568.9 464.5 L568.9 468.5 M564.8 465.0 L564.8 469.0 M560.8 465.5 L560.8 469.4 M556.9 466.0 L556.9 469.9 M553.1 466.4 L553.1 470.3 M549.5 466.9 L549.5 470.7 M545.9 467.4 L545.9 471.1 M542.5 467.8 L542.5 471.5 M539.1 468.2 L539.1 471.8 M535.9 468.6 L535.9 472.2 M532.7 469.0 L532.7 472.5 M529.7 469.4 L529.7 472.9 M526.7 469.8 L526.7 473.2 M523.8 470.1 L523.8 473.5 M521.0 470.5 L521.0 473.8 M518.2 470.9 L518.2 474.1 M515.5 471.2 L515.5 474.4 M512.9 471.5 L512.9 474.7 M510.4 471.8 L510.4 475.0 M507.9 472.2 L507.9 475.3 M505.5 472.5 L505.5 475.5 M503.1 472.8 L503.1 475.8 M500.8 473.1 L500.8 476.1 M498.5 473.3 L498.5 476.3 M496.3 473.6 L496.3 476.5 M494.2 473.9 L494.2 476.8 M492.1 474.1 L492.1 477.0 M490.0 474.4 L490.0 477.2 M488.0 474.7 L488.0 477.5 M486.1 474.9 L486.1 477.7 M484.2 475.1 L484.2 477.9 M482.3 475.4 L482.3 478.1 M480.4 475.6 L480.4 478.3 M478.6 475.8 L478.6 478.5 M476.9 476.1 L476.9 478.7 M475.2 476.3 L475.2 478.9 M473.5 476.5 L473.5 479.1 M471.8 476.7 L471.8 479.2 M1152.7 404.1 L1152.7 417.4 M1110.2 408.8 L1110.2 421.4 M1071.7 413.0 L1071.7 425.1 M1036.8 416.9 L1036.8 428.4 M1004.9 420.4 L1004.9 431.4 M975.7 423.6 L975.7 434.1 M948.9 426.6 L948.9 436.7 M924.1 429.3 L924.1 439.0 M901.2 431.9 L901.2 441.2 M880.0 434.2 L880.0 443.2 M860.2 436.4 L860.2 445.1 M841.8 438.4 L841.8 446.8 M824.5 440.3 L824.5 448.4 M808.4 442.1 L808.4 450.0 M793.2 443.8 L793.2 451.4 M778.9 445.4 L778.9 452.8 M765.5 446.8 L765.5 454.0 M752.8 448.2 L752.8 455.2 M740.8 449.6 L740.8 456.4 M729.4 450.8 L729.4 457.4 M718.6 452.0 L718.6 458.5 M708.3 453.1 L708.3 459.4 M698.6 454.2 L698.6 460.4 M689.3 455.2 L689.3 461.2 M680.5 456.2 L680.5 462.1 M672.0 457.2 L672.0 462.9 M664.0 458.0 L664.0 463.6 M656.3 458.9 L656.3 464.4 M648.9 459.7 L648.9 465.1 M641.8 460.5 L641.8 465.7 M635.0 461.2 L635.0 466.4 M628.5 462.0 L628.5 467.0 M622.3 462.6 L622.3 467.6 M616.3 463.3 L616.3 468.1 M610.5 463.9 L610.5 468.7 M604.9 464.6 L604.9 469.2 M599.5 465.2 L599.5 469.7 M594.4 465.7 L594.4 470.2 M589.4 466.3 L589.4 470.7 M584.6 466.8 L584.6 471.1 M579.9 467.3 L579.9 471.6 M575.4 467.8 L575.4 472.0 M571.1 468.3 L571.1 472.4 M566.8 468.8 L566.8 472.8 M562.8 469.2 L562.8 473.2 M558.8 469.6 L558.8 473.6 M555.0 470.1 L555.0 473.9 M551.3 470.5 L551.3 474.3 M547.7 470.9 L547.7 474.6 M544.2 471.3 L544.2 475.0 M540.8 471.6 L540.8 475.3 M537.5 472.0 L537.5 475.6 M534.3 472.4 L534.3 475.9 M531.2 472.7 L531.2 476.2 M528.2 473.0 L528.2 476.5 M525.2 473.4 L525.2 476.7 M522.4 473.7 L522.4 477.0 M519.6 474.0 L519.6 477.3 M516.9 474.3 L516.9 477.5 M514.2 474.6 L514.2 477.8 M511.6 474.9 L511.6 478.0 M509.1 475.1 L509.1 478.3 M506.7 475.4 L506.7 478.5 M504.3 475.7 L504.3 478.7 M501.9 475.9 L501.9 478.9 M499.7 476.2 L499.7 479.2 M497.4 476.4 L497.4 479.4 M495.3 476.7 L495.3 479.6 M493.1 476.9 L493.1 479.8 M491.1 477.1 L491.1 480.0 M489.0 477.4 L489.0 480.2 M487.1 477.6 L487.1 480.4 M485.1 477.8 L485.1 480.5 M483.2 478.0 L483.2 480.7 M481.4 478.2 L481.4 480.9 M479.5 478.4 L479.5 481.1 M477.8 478.6 L477.8 481.2 M476.0 478.8 L476.0 481.4 M474.3 479.0 L474.3 481.6 M472.6 479.2 L472.6 481.7 M1130.9 419.5 L1130.9 432.4 M1090.5 423.3 L1090.5 435.6 M1053.8 426.8 L1053.8 438.5 M1020.5 429.9 L1020.5 441.1 M990.0 432.8 L990.0 443.5 M962.0 435.4 L962.0 445.7 M936.3 437.9 L936.3 447.8 M912.5 440.1 L912.5 449.6 M890.4 442.2 L890.4 451.4 M869.9 444.2 L869.9 453.0 M850.8 446.0 L850.8 454.5 M833.0 447.6 L833.0 455.9 M816.3 449.2 L816.3 457.2 M800.7 450.7 L800.7 458.4 M786.0 452.1 L786.0 459.6 M772.1 453.4 L772.1 460.7 M759.0 454.6 L759.0 461.7 M746.7 455.8 L746.7 462.7 M735.0 456.9 L735.0 463.6 M723.9 458.0 L723.9 464.5 M713.4 459.0 L713.4 465.3 M703.4 459.9 L703.4 466.1 M693.9 460.8 L693.9 466.9 M684.9 461.7 L684.9 467.6 M676.2 462.5 L676.2 468.2 M668.0 463.2 L668.0 468.9 M660.1 464.0 L660.1 469.5 M652.5 464.7 L652.5 470.1 M645.3 465.4 L645.3 470.7 M638.4 466.0 L638.4 471.2 M631.7 466.7 L631.7 471.7 M625.4 467.3 L625.4 472.2 M619.2 467.9 L619.2 472.7 M613.3 468.4 L613.3 473.2 M607.7 468.9 L607.7 473.6 M602.2 469.5 L602.2 474.1 M596.9 470.0 L596.9 474.5 M591.8 470.4 L591.8 474.9 M586.9 470.9 L586.9 475.3 M582.2 471.4 L582.2 475.6 M577.6 471.8 L577.6 476.0 M573.2 472.2 L573.2 476.4 M568.9 472.6 L568.9 476.7 M564.8 473.0 L564.8 477.0 M560.8 473.4 L560.8 477.3 M556.9 473.8 L556.9 477.6 M553.1 474.1 L553.1 477.9 M549.5 474.5 L549.5 478.2 M545.9 474.8 L545.9 478.5 M542.5 475.1 L542.5 478.8 M539.1 475.4 L539.1 479.0 M535.9 475.7 L535.9 479.3 M532.7 476.0 L532.7 479.5 M529.7 476.3 L529.7 479.8 M526.7 476.6 L526.7 480.0 M523.8 476.9 L523.8 480.2 M521.0 477.1 L521.0 480.5 M518.2 477.4 L518.2 480.7 M515.5 477.7 L515.5 480.9 M512.9 477.9 L512.9 481.1 M510.4 478.1 L510.4 481.3 M507.9 478.4 L507.9 481.5 M505.5 478.6 L505.5 481.7 M503.1 478.8 L503.1 481.9 M500.8 479.1 L500.8 482.1 M498.5 479.3 L498.5 482.2 M496.3 479.5 L496.3 482.4 M494.2 479.7 L494.2 482.6 M492.1 479.9 L492.1 482.7 M490.0 480.1 L490.0 482.9 M488.0 480.3 L488.0 483.1 M486.1 480.4 L486.1 483.2 M484.2 480.6 L484.2 483.4 M482.3 480.8 L482.3 483.5 M480.4 481.0 L480.4 483.7 M478.6 481.1 L478.6 483.8 M476.9 481.3 L476.9 483.9 M475.2 481.5 L475.2 484.1 M473.5 481.6 L473.5 484.2 M471.8 481.8 L471.8 484.3 M1152.7 430.7 L1152.7 444.0 M1110.2 434.1 L1110.2 446.7 M1071.7 437.1 L1071.7 449.1 M1036.8 439.9 L1036.8 451.3 M1004.9 442.4 L1004.9 453.3 M975.7 444.7 L975.7 455.2 M948.9 446.8 L948.9 456.9 M924.1 448.7 L924.1 458.4 M901.2 450.5 L901.2 459.9 M880.0 452.2 L880.0 461.2 M860.2 453.8 L860.2 462.4 M841.8 455.2 L841.8 463.6 M824.5 456.6 L824.5 464.7 M808.4 457.8 L808.4 465.7 M793.2 459.0 L793.2 466.7 M778.9 460.2 L778.9 467.6 M765.5 461.2 L765.5 468.4 M752.8 462.2 L752.8 469.2 M740.8 463.2 L740.8 470.0 M729.4 464.1 L729.4 470.7 M718.6 464.9 L718.6 471.4 M708.3 465.7 L708.3 472.0 M698.6 466.5 L698.6 472.6 M689.3 467.2 L689.3 473.2 M680.5 467.9 L680.5 473.8 M672.0 468.6 L672.0 474.3 M664.0 469.2 L664.0 474.8 M656.3 469.8 L656.3 475.3 M648.9 470.4 L648.9 475.7 M641.8 471.0 L641.8 476.2 M635.0 471.5 L635.0 476.6 M628.5 472.0 L628.5 477.0 M622.3 472.5 L622.3 477.4 M616.3 473.0 L616.3 477.8 M610.5 473.4 L610.5 478.2 M604.9 473.9 L604.9 478.5 M599.5 474.3 L599.5 478.8 M594.4 474.7 L594.4 479.2 M589.4 475.1 L589.4 479.5 M584.6 475.5 L584.6 479.8 M579.9 475.8 L579.9 480.1 M575.4 476.2 L575.4 480.4 M571.1 476.5 L571.1 480.6 M566.8 476.9 L566.8 480.9 M562.8 477.2 L562.8 481.2 M558.8 477.5 L558.8 481.4 M555.0 477.8 L555.0 481.6 M551.3 478.1 L551.3 481.9 M547.7 478.4 L547.7 482.1 M544.2 478.6 L544.2 482.3 M540.8 478.9 L540.8 482.5 M537.5 479.2 L537.5 482.7 M534.3 479.4 L534.3 482.9 M531.2 479.7 L531.2 483.1 M528.2 479.9 L528.2 483.3 M525.2 480.1 L525.2 483.5 M522.4 480.4 L522.4 483.7 M519.6 480.6 L519.6 483.9 M516.9 480.8 L516.9 484.0 M514.2 481.0 L514.2 484.2 M511.6 481.2 L511.6 484.4 M509.1 481.4 L509.1 484.5 M506.7 481.6 L506.7 484.7 M504.3 481.8 L504.3 484.8 M501.9 482.0 L501.9 485.0 M499.7 482.1 L499.7 485.1 M497.4 482.3 L497.4 485.3 M495.3 482.5 L495.3 485.4 M493.1 482.7 L493.1 485.5 M491.1 482.8 L491.1 485.7 M489.0 483.0 L489.0 485.8 M487.1 483.1 L487.1 485.9 M485.1 483.3 L485.1 486.0 M483.2 483.4 L483.2 486.2 M481.4 483.6 L481.4 486.3 M479.5 483.7 L479.5 486.4 M477.8 483.9 L477.8 486.5 M476.0 484.0 L476.0 486.6 M474.3 484.1 L474.3 486.7 M472.6 484.3 L472.6 486.8 M1130.9 445.4 L1130.9 458.4 M1090.5 448.0 L1090.5 460.3 M1053.8 450.3 L1053.8 462.0 M1020.5 452.4 L1020.5 463.6 M990.0 454.3 L990.0 465.0 M962.0 456.0 L962.0 466.3 M936.3 457.7 L936.3 467.5 M912.5 459.2 L912.5 468.7 M890.4 460.5 L890.4 469.7 M869.9 461.8 L869.9 470.7 M850.8 463.0 L850.8 471.6 M833.0 464.2 L833.0 472.4 M816.3 465.2 L816.3 473.2 M800.7 466.2 L800.7 473.9 M786.0 467.1 L786.0 474.6 M772.1 468.0 L772.1 475.3 M759.0 468.8 L759.0 475.9 M746.7 469.6 L746.7 476.5 M735.0 470.3 L735.0 477.0 M723.9 471.0 L723.9 477.6 M713.4 471.7 L713.4 478.0 M703.4 472.3 L703.4 478.5 M693.9 472.9 L693.9 479.0 M684.9 473.5 L684.9 479.4 M676.2 474.0 L676.2 479.8 M668.0 474.5 L668.0 480.2 M660.1 475.0 L660.1 480.6 M652.5 475.5 L652.5 480.9 M645.3 476.0 L645.3 481.3 M638.4 476.4 L638.4 481.6 M631.7 476.8 L631.7 481.9 M625.4 477.2 L625.4 482.2 M619.2 477.6 L619.2 482.5 M613.3 478.0 L613.3 482.8 M607.7 478.3 L607.7 483.0 M602.2 478.7 L602.2 483.3 M596.9 479.0 L596.9 483.5 M591.8 479.3 L591.8 483.8 M586.9 479.6 L586.9 484.0 M582.2 479.9 L582.2 484.2 M577.6 480.2 L577.6 484.4 M573.2 480.5 L573.2 484.6 M568.9 480.8 L568.9 484.9 M564.8 481.0 L564.8 485.0 M560.8 481.3 L560.8 485.2 M556.9 481.5 L556.9 485.4 M553.1 481.8 L553.1 485.6 M549.5 482.0 L549.5 485.8 M545.9 482.2 L545.9 485.9 M542.5 482.4 L542.5 486.1 M539.1 482.6 L539.1 486.3 M535.9 482.8 L535.9 486.4 M532.7 483.0 L532.7 486.6 M529.7 483.2 L529.7 486.7 M526.7 483.4 L526.7 486.8 M523.8 483.6 L523.8 487.0 M521.0 483.8 L521.0 487.1 M518.2 484.0 L518.2 487.2 M515.5 484.1 L515.5 487.4 M512.9 484.3 L512.9 487.5 M510.4 484.5 L510.4 487.6 M507.9 484.6 L507.9 487.7 M505.5 484.8 L505.5 487.8 M503.1 484.9 L503.1 488.0 M500.8 485.1 L500.8 488.1 M498.5 485.2 L498.5 488.2 M496.3 485.3 L496.3 488.3 M494.2 485.5 L494.2 488.4 M492.1 485.6 L492.1 488.5 M490.0 485.7 L490.0 488.6 M488.0 485.9 L488.0 488.7 M486.1 486.0 L486.1 488.8 M484.2 486.1 L484.2 488.8 M482.3 486.2 L482.3 488.9 M480.4 486.3 L480.4 489.0 M478.6 486.5 L478.6 489.1 M476.9 486.6 L476.9 489.2 M475.2 486.7 L475.2 489.3 M473.5 486.8 L473.5 489.3 M471.8 486.9 L471.8 489.4 M1152.7 457.4 L1152.7 470.7 M1110.2 459.4 L1110.2 472.0 M1071.7 461.2 L1071.7 473.2 M1036.8 462.8 L1036.8 474.3 M1004.9 464.3 L1004.9 475.3 M975.7 465.7 L975.7 476.2 M948.9 467.0 L948.9 477.0 M924.1 468.1 L924.1 477.8 M901.2 469.2 L901.2 478.5 M880.0 470.2 L880.0 479.2 M860.2 471.1 L860.2 479.8 M841.8 472.0 L841.8 480.4 M824.5 472.8 L824.5 480.9 M808.4 473.6 L808.4 481.4 M793.2 474.3 L793.2 481.9 M778.9 475.0 L778.9 482.4 M765.5 475.6 L765.5 482.8 M752.8 476.2 L752.8 483.2 M740.8 476.8 L740.8 483.6 M729.4 477.3 L729.4 483.9 M718.6 477.8 L718.6 484.2 M708.3 478.3 L708.3 484.6 M698.6 478.7 L698.6 484.9 M689.3 479.2 L689.3 485.2 M680.5 479.6 L680.5 485.4 M672.0 480.0 L672.0 485.7 M664.0 480.4 L664.0 486.0 M656.3 480.7 L656.3 486.2 M648.9 481.1 L648.9 486.4 M641.8 481.4 L641.8 486.7 M635.0 481.7 L635.0 486.9 M628.5 482.0 L628.5 487.1 M622.3 482.3 L622.3 487.3 M616.3 482.6 L616.3 487.5 M610.5 482.9 L610.5 487.6 M604.9 483.2 L604.9 487.8 M599.5 483.4 L599.5 488.0 M594.4 483.7 L594.4 488.1 M589.4 483.9 L589.4 488.3 M584.6 484.1 L584.6 488.4 M579.9 484.3 L579.9 488.6 M575.4 484.5 L575.4 488.7 M571.1 484.8 L571.1 488.9 M566.8 484.9 L566.8 489.0 M562.8 485.1 L562.8 489.1 M558.8 485.3 L558.8 489.2 M555.0 485.5 L555.0 489.4 M551.3 485.7 L551.3 489.5 M547.7 485.9 L547.7 489.6 M544.2 486.0 L544.2 489.7 M540.8 486.2 L540.8 489.8 M537.5 486.3 L537.5 489.9 M534.3 486.5 L534.3 490.0 M531.2 486.6 L531.2 490.1 M528.2 486.8 L528.2 490.2 M525.2 486.9 L525.2 490.3 M522.4 487.0 L522.4 490.4 M519.6 487.2 L519.6 490.5 M516.9 487.3 L516.9 490.6 M514.2 487.4 L514.2 490.6 M511.6 487.6 L511.6 490.7 M509.1 487.7 L509.1 490.8 M506.7 487.8 L506.7 490.9 M504.3 487.9 L504.3 491.0 M501.9 488.0 L501.9 491.0 M499.7 488.1 L499.7 491.1 M497.4 488.2 L497.4 491.2 M495.3 488.3 L495.3 491.2 M493.1 488.4 L493.1 491.3 M491.1 488.5 L491.1 491.4 M489.0 488.6 L489.0 491.4 M487.1 488.7 L487.1 491.5 M485.1 488.8 L485.1 491.6 M483.2 488.9 L483.2 491.6 M481.4 489.0 L481.4 491.7 M479.5 489.1 L479.5 491.7 M477.8 489.1 L477.8 491.8 M476.0 489.2 L476.0 491.8 M474.3 489.3 L474.3 491.9 M472.6 489.4 L472.6 491.9 M1130.9 471.4 L1130.9 484.3 M1090.5 472.6 L1090.5 484.9 M1053.8 473.8 L1053.8 485.5 M1020.5 474.8 L1020.5 486.0 M990.0 475.8 L990.0 486.5 M962.0 476.6 L962.0 486.9 M936.3 477.4 L936.3 487.3 M912.5 478.2 L912.5 487.7 M890.4 478.9 L890.4 488.0 M869.9 479.5 L869.9 488.4 M850.8 480.1 L850.8 488.7 M833.0 480.7 L833.0 488.9 M816.3 481.2 L816.3 489.2 M800.7 481.7 L800.7 489.4 M786.0 482.1 L786.0 489.7 M772.1 482.6 L772.1 489.9 M759.0 483.0 L759.0 490.1 M746.7 483.4 L746.7 490.3 M735.0 483.7 L735.0 490.4 M723.9 484.1 L723.9 490.6 M713.4 484.4 L713.4 490.8 M703.4 484.7 L703.4 490.9 M693.9 485.0 L693.9 491.1 M684.9 485.3 L684.9 491.2 M676.2 485.6 L676.2 491.4 M668.0 485.8 L668.0 491.5 M660.1 486.1 L660.1 491.6 M652.5 486.3 L652.5 491.7 M645.3 486.5 L645.3 491.8 M638.4 486.8 L638.4 491.9 M631.7 487.0 L631.7 492.0 M625.4 487.2 L625.4 492.1 M619.2 487.4 L619.2 492.2 M613.3 487.5 L613.3 492.3 M607.7 487.7 L607.7 492.4 M602.2 487.9 L602.2 492.5 M596.9 488.1 L596.9 492.6 M591.8 488.2 L591.8 492.7 M586.9 488.4 L586.9 492.7 M582.2 488.5 L582.2 492.8 M577.6 488.7 L577.6 492.9 M573.2 488.8 L573.2 492.9 M568.9 488.9 L568.9 493.0 M564.8 489.1 L564.8 493.1 M560.8 489.2 L560.8 493.1 M556.9 489.3 L556.9 493.2 M553.1 489.4 L553.1 493.3 M549.5 489.5 L549.5 493.3 M545.9 489.7 L545.9 493.4 M542.5 489.8 L542.5 493.4 M539.1 489.9 L539.1 493.5 M535.9 490.0 L535.9 493.5 M532.7 490.1 L532.7 493.6 M529.7 490.2 L529.7 493.6 M526.7 490.3 L526.7 493.7 M523.8 490.3 L523.8 493.7 M521.0 490.4 L521.0 493.8 M518.2 490.5 L518.2 493.8 M515.5 490.6 L515.5 493.8 M512.9 490.7 L512.9 493.9 M510.4 490.8 L510.4 493.9 M507.9 490.8 L507.9 494.0 M505.5 490.9 L505.5 494.0 M503.1 491.0 L503.1 494.0 M500.8 491.1 L500.8 494.1 M498.5 491.1 L498.5 494.1 M496.3 491.2 L496.3 494.1 M494.2 491.3 L494.2 494.2 M492.1 491.3 L492.1 494.2 M490.0 491.4 L490.0 494.2 M488.0 491.5 L488.0 494.3 M486.1 491.5 L486.1 494.3 M484.2 491.6 L484.2 494.3 M482.3 491.6 L482.3 494.4 M480.4 491.7 L480.4 494.4 M478.6 491.8 L478.6 494.4 M476.9 491.8 L476.9 494.4 M475.2 491.9 L475.2 494.5 M473.5 491.9 L473.5 494.5 M471.8 492.0 L471.8 494.5 M1152.7 484.0 L1152.7 497.3 M1110.2 484.6 L1110.2 497.3 M1071.7 485.2 L1071.7 497.3 M1036.8 485.8 L1036.8 497.3 M1004.9 486.3 L1004.9 497.2 M975.7 486.7 L975.7 497.2 M948.9 487.1 L948.9 497.2 M924.1 487.5 L924.1 497.2 M901.2 487.9 L901.2 497.2 M880.0 488.2 L880.0 497.2 M860.2 488.5 L860.2 497.2 M841.8 488.8 L841.8 497.2 M824.5 489.1 L824.5 497.2 M808.4 489.3 L808.4 497.2 M793.2 489.5 L793.2 497.2 M778.9 489.8 L778.9 497.2 M765.5 490.0 L765.5 497.2 M752.8 490.2 L752.8 497.2 M740.8 490.4 L740.8 497.2 M729.4 490.5 L729.4 497.1 M718.6 490.7 L718.6 497.1 M708.3 490.9 L708.3 497.1 M698.6 491.0 L698.6 497.1 M689.3 491.1 L689.3 497.1 M680.5 491.3 L680.5 497.1 M672.0 491.4 L672.0 497.1 M664.0 491.5 L664.0 497.1 M656.3 491.7 L656.3 497.1 M648.9 491.8 L648.9 497.1 M641.8 491.9 L641.8 497.1 M635.0 492.0 L635.0 497.1 M628.5 492.1 L628.5 497.1 M622.3 492.2 L622.3 497.1 M616.3 492.3 L616.3 497.1 M610.5 492.4 L610.5 497.1 M604.9 492.5 L604.9 497.1 M599.5 492.5 L599.5 497.1 M594.4 492.6 L594.4 497.1 M589.4 492.7 L589.4 497.1 M584.6 492.8 L584.6 497.1 M579.9 492.8 L579.9 497.1 M575.4 492.9 L575.4 497.1 M571.1 493.0 L571.1 497.1 M566.8 493.0 L566.8 497.1 M562.8 493.1 L562.8 497.1 M558.8 493.2 L558.8 497.1 M555.0 493.2 L555.0 497.1 M551.3 493.3 L551.3 497.1 M547.7 493.3 L547.7 497.1 M544.2 493.4 L544.2 497.1 M540.8 493.4 L540.8 497.1 M537.5 493.5 L537.5 497.1 M534.3 493.5 L534.3 497.1 M531.2 493.6 L531.2 497.1 M528.2 493.6 L528.2 497.1 M525.2 493.7 L525.2 497.1 M522.4 493.7 L522.4 497.1 M519.6 493.8 L519.6 497.1 M516.9 493.8 L516.9 497.1 M514.2 493.9 L514.2 497.1 M511.6 493.9 L511.6 497.1 M509.1 493.9 L509.1 497.1 M506.7 494.0 L506.7 497.1 M504.3 494.0 L504.3 497.1 M501.9 494.0 L501.9 497.1 M499.7 494.1 L499.7 497.1 M497.4 494.1 L497.4 497.1 M495.3 494.2 L495.3 497.1 M493.1 494.2 L493.1 497.1 M491.1 494.2 L491.1 497.1 M489.0 494.2 L489.0 497.1 M487.1 494.3 L487.1 497.1 M485.1 494.3 L485.1 497.1 M483.2 494.3 L483.2 497.1 M481.4 494.4 L481.4 497.1 M479.5 494.4 L479.5 497.1 M477.8 494.4 L477.8 497.1 M476.0 494.4 L476.0 497.1 M474.3 494.5 L474.3 497.1 M472.6 494.5 L472.6 497.1 M1130.9 497.3 L1130.9 510.3 M1090.5 497.3 L1090.5 509.6 M1053.8 497.3 L1053.8 509.0 M1020.5 497.2 L1020.5 508.5 M990.0 497.2 L990.0 508.0 M962.0 497.2 L962.0 507.5 M936.3 497.2 L936.3 507.1 M912.5 497.2 L912.5 506.7 M890.4 497.2 L890.4 506.4 M869.9 497.2 L869.9 506.0 M850.8 497.2 L850.8 505.7 M833.0 497.2 L833.0 505.4 M816.3 497.2 L816.3 505.2 M800.7 497.2 L800.7 504.9 M786.0 497.2 L786.0 504.7 M772.1 497.2 L772.1 504.5 M759.0 497.2 L759.0 504.2 M746.7 497.2 L746.7 504.0 M735.0 497.1 L735.0 503.9 M723.9 497.1 L723.9 503.7 M713.4 497.1 L713.4 503.5 M703.4 497.1 L703.4 503.3 M693.9 497.1 L693.9 503.2 M684.9 497.1 L684.9 503.0 M676.2 497.1 L676.2 502.9 M668.0 497.1 L668.0 502.8 M660.1 497.1 L660.1 502.6 M652.5 497.1 L652.5 502.5 M645.3 497.1 L645.3 502.4 M638.4 497.1 L638.4 502.3 M631.7 497.1 L631.7 502.2 M625.4 497.1 L625.4 502.1 M619.2 497.1 L619.2 502.0 M613.3 497.1 L613.3 501.9 M607.7 497.1 L607.7 501.8 M602.2 497.1 L602.2 501.7 M596.9 497.1 L596.9 501.6 M591.8 497.1 L591.8 501.5 M586.9 497.1 L586.9 501.5 M582.2 497.1 L582.2 501.4 M577.6 497.1 L577.6 501.3 M573.2 497.1 L573.2 501.2 M568.9 497.1 L568.9 501.2 M564.8 497.1 L564.8 501.1 M560.8 497.1 L560.8 501.0 M556.9 497.1 L556.9 501.0 M553.1 497.1 L553.1 500.9 M549.5 497.1 L549.5 500.9 M545.9 497.1 L545.9 500.8 M542.5 497.1 L542.5 500.7 M539.1 497.1 L539.1 500.7 M535.9 497.1 L535.9 500.6 M532.7 497.1 L532.7 500.6 M529.7 497.1 L529.7 500.5 M526.7 497.1 L526.7 500.5 M523.8 497.1 L523.8 500.4 M521.0 497.1 L521.0 500.4 M518.2 497.1 L518.2 500.4 M515.5 497.1 L515.5 500.3 M512.9 497.1 L512.9 500.3 M510.4 497.1 L510.4 500.2 M507.9 497.1 L507.9 500.2 M505.5 497.1 L505.5 500.1 M503.1 497.1 L503.1 500.1 M500.8 497.1 L500.8 500.1 M498.5 497.1 L498.5 500.0 M496.3 497.1 L496.3 500.0 M494.2 497.1 L494.2 500.0 M492.1 497.1 L492.1 499.9 M490.0 497.1 L490.0 499.9 M488.0 497.1 L488.0 499.9 M486.1 497.1 L486.1 499.8 M484.2 497.1 L484.2 499.8 M482.3 497.1 L482.3 499.8 M480.4 497.1 L480.4 499.7 M478.6 497.1 L478.6 499.7 M476.9 497.1 L476.9 499.7 M475.2 497.1 L475.2 499.7 M473.5 497.1 L473.5 499.6 M471.8 497.1 L471.8 499.6 M1152.7 510.6 L1152.7 523.9 M1110.2 509.9 L1110.2 522.6 M1071.7 509.3 L1071.7 521.3 M1036.8 508.7 L1036.8 520.2 M1004.9 508.2 L1004.9 519.2 M975.7 507.7 L975.7 518.3 M948.9 507.3 L948.9 517.4 M924.1 506.9 L924.1 516.6 M901.2 506.5 L901.2 515.9 M880.0 506.2 L880.0 515.2 M860.2 505.9 L860.2 514.6 M841.8 505.6 L841.8 514.0 M824.5 505.3 L824.5 513.4 M808.4 505.0 L808.4 512.9 M793.2 504.8 L793.2 512.4 M778.9 504.6 L778.9 512.0 M765.5 504.3 L765.5 511.5 M752.8 504.1 L752.8 511.1 M740.8 503.9 L740.8 510.7 M729.4 503.8 L729.4 510.4 M718.6 503.6 L718.6 510.0 M708.3 503.4 L708.3 509.7 M698.6 503.3 L698.6 509.4 M689.3 503.1 L689.3 509.1 M680.5 503.0 L680.5 508.8 M672.0 502.8 L672.0 508.5 M664.0 502.7 L664.0 508.3 M656.3 502.6 L656.3 508.0 M648.9 502.5 L648.9 507.8 M641.8 502.3 L641.8 507.6 M635.0 502.2 L635.0 507.4 M628.5 502.1 L628.5 507.2 M622.3 502.0 L622.3 507.0 M616.3 501.9 L616.3 506.8 M610.5 501.8 L610.5 506.6 M604.9 501.8 L604.9 506.4 M599.5 501.7 L599.5 506.2 M594.4 501.6 L594.4 506.1 M589.4 501.5 L589.4 505.9 M584.6 501.4 L584.6 505.8 M579.9 501.3 L579.9 505.6 M575.4 501.3 L575.4 505.5 M571.1 501.2 L571.1 505.3 M566.8 501.1 L566.8 505.2 M562.8 501.1 L562.8 505.1 M558.8 501.0 L558.8 504.9 M555.0 500.9 L555.0 504.8 M551.3 500.9 L551.3 504.7 M547.7 500.8 L547.7 504.6 M544.2 500.8 L544.2 504.5 M540.8 500.7 L540.8 504.4 M537.5 500.7 L537.5 504.2 M534.3 500.6 L534.3 504.1 M531.2 500.6 L531.2 504.0 M528.2 500.5 L528.2 503.9 M525.2 500.5 L525.2 503.9 M522.4 500.4 L522.4 503.8 M519.6 500.4 L519.6 503.7 M516.9 500.3 L516.9 503.6 M514.2 500.3 L514.2 503.5 M511.6 500.2 L511.6 503.4 M509.1 500.2 L509.1 503.3 M506.7 500.2 L506.7 503.3 M504.3 500.1 L504.3 503.2 M501.9 500.1 L501.9 503.1 M499.7 500.1 L499.7 503.0 M497.4 500.0 L497.4 503.0 M495.3 500.0 L495.3 502.9 M493.1 499.9 L493.1 502.8 M491.1 499.9 L491.1 502.8 M489.0 499.9 L489.0 502.7 M487.1 499.8 L487.1 502.6 M485.1 499.8 L485.1 502.6 M483.2 499.8 L483.2 502.5 M481.4 499.8 L481.4 502.4 M479.5 499.7 L479.5 502.4 M477.8 499.7 L477.8 502.3 M476.0 499.7 L476.0 502.3 M474.3 499.6 L474.3 502.2 M472.6 499.6 L472.6 502.2 M1130.9 523.2 L1130.9 536.2 M1090.5 521.9 L1090.5 534.3 M1053.8 520.8 L1053.8 532.5 M1020.5 519.7 L1020.5 530.9 M990.0 518.7 L990.0 529.5 M962.0 517.8 L962.0 528.1 M936.3 517.0 L936.3 526.9 M912.5 516.2 L912.5 525.8 M890.4 515.5 L890.4 524.7 M869.9 514.9 L869.9 523.7 M850.8 514.3 L850.8 522.8 M833.0 513.7 L833.0 522.0 M816.3 513.2 L816.3 521.2 M800.7 512.7 L800.7 520.4 M786.0 512.2 L786.0 519.7 M772.1 511.7 L772.1 519.0 M759.0 511.3 L759.0 518.4 M746.7 510.9 L746.7 517.8 M735.0 510.6 L735.0 517.3 M723.9 510.2 L723.9 516.7 M713.4 509.9 L713.4 516.2 M703.4 509.6 L703.4 515.8 M693.9 509.2 L693.9 515.3 M684.9 509.0 L684.9 514.9 M676.2 508.7 L676.2 514.5 M668.0 508.4 L668.0 514.1 M660.1 508.2 L660.1 513.7 M652.5 507.9 L652.5 513.3 M645.3 507.7 L645.3 513.0 M638.4 507.5 L638.4 512.7 M631.7 507.3 L631.7 512.3 M625.4 507.1 L625.4 512.0 M619.2 506.9 L619.2 511.7 M613.3 506.7 L613.3 511.5 M607.7 506.5 L607.7 511.2 M602.2 506.3 L602.2 510.9 M596.9 506.1 L596.9 510.7 M591.8 506.0 L591.8 510.4 M586.9 505.8 L586.9 510.2 M582.2 505.7 L582.2 510.0 M577.6 505.5 L577.6 509.7 M573.2 505.4 L573.2 509.5 M568.9 505.3 L568.9 509.3 M564.8 505.1 L564.8 509.1 M560.8 505.0 L560.8 508.9 M556.9 504.9 L556.9 508.8 M553.1 504.7 L553.1 508.6 M549.5 504.6 L549.5 508.4 M545.9 504.5 L545.9 508.2 M542.5 504.4 L542.5 508.1 M539.1 504.3 L539.1 507.9 M535.9 504.2 L535.9 507.8 M532.7 504.1 L532.7 507.6 M529.7 504.0 L529.7 507.5 M526.7 503.9 L526.7 507.3 M523.8 503.8 L523.8 507.2 M521.0 503.7 L521.0 507.0 M518.2 503.6 L518.2 506.9 M515.5 503.5 L515.5 506.8 M512.9 503.5 L512.9 506.7 M510.4 503.4 L510.4 506.5 M507.9 503.3 L507.9 506.4 M505.5 503.2 L505.5 506.3 M503.1 503.1 L503.1 506.2 M500.8 503.1 L500.8 506.1 M498.5 503.0 L498.5 506.0 M496.3 502.9 L496.3 505.9 M494.2 502.9 L494.2 505.8 M492.1 502.8 L492.1 505.7 M490.0 502.7 L490.0 505.6 M488.0 502.7 L488.0 505.5 M486.1 502.6 L486.1 505.4 M484.2 502.5 L484.2 505.3 M482.3 502.5 L482.3 505.2 M480.4 502.4 L480.4 505.1 M478.6 502.4 L478.6 505.0 M476.9 502.3 L476.9 504.9 M475.2 502.3 L475.2 504.8 M473.5 502.2 L473.5 504.8 M471.8 502.1 L471.8 504.7 M1152.7 537.2 L1152.7 550.6 M1110.2 535.2 L1110.2 547.8 M1071.7 533.4 L1071.7 545.4 M1036.8 531.7 L1036.8 543.2 M1004.9 530.2 L1004.9 541.1 M975.7 528.8 L975.7 539.3 M948.9 527.5 L948.9 537.6 M924.1 526.3 L924.1 536.0 M901.2 525.2 L901.2 534.6 M880.0 524.2 L880.0 533.2 M860.2 523.3 L860.2 531.9 M841.8 522.4 L841.8 530.8 M824.5 521.5 L824.5 529.7 M808.4 520.8 L808.4 528.6 M793.2 520.1 L793.2 527.7 M778.9 519.4 L778.9 526.8 M765.5 518.7 L765.5 525.9 M752.8 518.1 L752.8 525.1 M740.8 517.5 L740.8 524.3 M729.4 517.0 L729.4 523.6 M718.6 516.5 L718.6 522.9 M708.3 516.0 L708.3 522.3 M698.6 515.5 L698.6 521.7 M689.3 515.1 L689.3 521.1 M680.5 514.7 L680.5 520.5 M672.0 514.3 L672.0 520.0 M664.0 513.9 L664.0 519.5 M656.3 513.5 L656.3 519.0 M648.9 513.2 L648.9 518.5 M641.8 512.8 L641.8 518.0 M635.0 512.5 L635.0 517.6 M628.5 512.2 L628.5 517.2 M622.3 511.9 L622.3 516.8 M616.3 511.6 L616.3 516.4 M610.5 511.3 L610.5 516.1 M604.9 511.0 L604.9 515.7 M599.5 510.8 L599.5 515.4 M594.4 510.5 L594.4 515.0 M589.4 510.3 L589.4 514.7 M584.6 510.1 L584.6 514.4 M579.9 509.9 L579.9 514.1 M575.4 509.6 L575.4 513.8 M571.1 509.4 L571.1 513.5 M566.8 509.2 L566.8 513.3 M562.8 509.0 L562.8 513.0 M558.8 508.8 L558.8 512.8 M555.0 508.7 L555.0 512.5 M551.3 508.5 L551.3 512.3 M547.7 508.3 L547.7 512.1 M544.2 508.1 L544.2 511.8 M540.8 508.0 L540.8 511.6 M537.5 507.8 L537.5 511.4 M534.3 507.7 L534.3 511.2 M531.2 507.5 L531.2 511.0 M528.2 507.4 L528.2 510.8 M525.2 507.2 L525.2 510.6 M522.4 507.1 L522.4 510.4 M519.6 507.0 L519.6 510.3 M516.9 506.8 L516.9 510.1 M514.2 506.7 L514.2 509.9 M511.6 506.6 L511.6 509.8 M509.1 506.5 L509.1 509.6 M506.7 506.4 L506.7 509.4 M504.3 506.2 L504.3 509.3 M501.9 506.1 L501.9 509.1 M499.7 506.0 L499.7 509.0 M497.4 505.9 L497.4 508.9 M495.3 505.8 L495.3 508.7 M493.1 505.7 L493.1 508.6 M491.1 505.6 L491.1 508.5 M489.0 505.5 L489.0 508.3 M487.1 505.4 L487.1 508.2 M485.1 505.3 L485.1 508.1 M483.2 505.2 L483.2 508.0 M481.4 505.1 L481.4 507.8 M479.5 505.1 L479.5 507.7 M477.8 505.0 L477.8 507.6 M476.0 504.9 L476.0 507.5 M474.3 504.8 L474.3 507.4 M472.6 504.7 L472.6 507.3 M1130.9 549.2 L1130.9 562.1 M1090.5 546.6 L1090.5 558.9 M1053.8 544.3 L1053.8 556.0 M1020.5 542.1 L1020.5 553.4 M990.0 540.2 L990.0 550.9 M962.0 538.4 L962.0 548.7 M936.3 536.8 L936.3 546.7 M912.5 535.3 L912.5 544.8 M890.4 533.9 L890.4 543.0 M869.9 532.6 L869.9 541.4 M850.8 531.3 L850.8 539.9 M833.0 530.2 L833.0 538.5 M816.3 529.1 L816.3 537.1 M800.7 528.2 L800.7 535.9 M786.0 527.2 L786.0 534.7 M772.1 526.3 L772.1 533.6 M759.0 525.5 L759.0 532.6 M746.7 524.7 L746.7 531.6 M735.0 524.0 L735.0 530.7 M723.9 523.3 L723.9 529.8 M713.4 522.6 L713.4 529.0 M703.4 522.0 L703.4 528.2 M693.9 521.4 L693.9 527.4 M684.9 520.8 L684.9 526.7 M676.2 520.2 L676.2 526.0 M668.0 519.7 L668.0 525.4 M660.1 519.2 L660.1 524.7 M652.5 518.7 L652.5 524.1 M645.3 518.3 L645.3 523.6 M638.4 517.8 L638.4 523.0 M631.7 517.4 L631.7 522.5 M625.4 517.0 L625.4 522.0 M619.2 516.6 L619.2 521.5 M613.3 516.2 L613.3 521.0 M607.7 515.9 L607.7 520.6 M602.2 515.5 L602.2 520.1 M596.9 515.2 L596.9 519.7 M591.8 514.9 L591.8 519.3 M586.9 514.6 L586.9 518.9 M582.2 514.3 L582.2 518.5 M577.6 514.0 L577.6 518.2 M573.2 513.7 L573.2 517.8 M568.9 513.4 L568.9 517.5 M564.8 513.1 L564.8 517.2 M560.8 512.9 L560.8 516.8 M556.9 512.6 L556.9 516.5 M553.1 512.4 L553.1 516.2 M549.5 512.2 L549.5 515.9 M545.9 511.9 L545.9 515.7 M542.5 511.7 L542.5 515.4 M539.1 511.5 L539.1 515.1 M535.9 511.3 L535.9 514.9 M532.7 511.1 L532.7 514.6 M529.7 510.9 L529.7 514.4 M526.7 510.7 L526.7 514.1 M523.8 510.5 L523.8 513.9 M521.0 510.4 L521.0 513.7 M518.2 510.2 L518.2 513.5 M515.5 510.0 L515.5 513.2 M512.9 509.8 L512.9 513.0 M510.4 509.7 L510.4 512.8 M507.9 509.5 L507.9 512.6 M505.5 509.4 L505.5 512.4 M503.1 509.2 L503.1 512.3 M500.8 509.1 L500.8 512.1 M498.5 508.9 L498.5 511.9 M496.3 508.8 L496.3 511.7 M494.2 508.7 L494.2 511.6 M492.1 508.5 L492.1 511.4 M490.0 508.4 L490.0 511.2 M488.0 508.3 L488.0 511.1 M486.1 508.1 L486.1 510.9 M484.2 508.0 L484.2 510.8 M482.3 507.9 L482.3 510.6 M480.4 507.8 L480.4 510.5 M478.6 507.7 L478.6 510.3 M476.9 507.6 L476.9 510.2 M475.2 507.4 L475.2 510.0 M473.5 507.3 L473.5 509.9 M471.8 507.2 L471.8 509.8 M1152.7 563.9 L1152.7 577.2 M1110.2 560.5 L1110.2 573.1 M1071.7 557.4 L1071.7 569.5 M1036.8 554.7 L1036.8 566.1 M1004.9 552.1 L1004.9 563.1 M975.7 549.8 L975.7 560.3 M948.9 547.7 L948.9 557.8 M924.1 545.7 L924.1 555.4 M901.2 543.9 L901.2 553.2 M880.0 542.2 L880.0 551.2 M860.2 540.6 L860.2 549.3 M841.8 539.2 L841.8 547.6 M824.5 537.8 L824.5 545.9 M808.4 536.5 L808.4 544.4 M793.2 535.3 L793.2 542.9 M778.9 534.2 L778.9 541.6 M765.5 533.1 L765.5 540.3 M752.8 532.1 L752.8 539.1 M740.8 531.1 L740.8 537.9 M729.4 530.2 L729.4 536.9 M718.6 529.4 L718.6 535.8 M708.3 528.6 L708.3 534.8 M698.6 527.8 L698.6 533.9 M689.3 527.1 L689.3 533.0 M680.5 526.4 L680.5 532.2 M672.0 525.7 L672.0 531.4 M664.0 525.0 L664.0 530.6 M656.3 524.4 L656.3 529.9 M648.9 523.8 L648.9 529.2 M641.8 523.3 L641.8 528.5 M635.0 522.7 L635.0 527.9 M628.5 522.2 L628.5 527.2 M622.3 521.7 L622.3 526.6 M616.3 521.2 L616.3 526.1 M610.5 520.8 L610.5 525.5 M604.9 520.3 L604.9 525.0 M599.5 519.9 L599.5 524.5 M594.4 519.5 L594.4 524.0 M589.4 519.1 L589.4 523.5 M584.6 518.7 L584.6 523.1 M579.9 518.4 L579.9 522.6 M575.4 518.0 L575.4 522.2 M571.1 517.7 L571.1 521.8 M566.8 517.3 L566.8 521.4 M562.8 517.0 L562.8 521.0 M558.8 516.7 L558.8 520.6 M555.0 516.4 L555.0 520.2 M551.3 516.1 L551.3 519.9 M547.7 515.8 L547.7 519.5 M544.2 515.5 L544.2 519.2 M540.8 515.3 L540.8 518.9 M537.5 515.0 L537.5 518.6 M534.3 514.7 L534.3 518.3 M531.2 514.5 L531.2 518.0 M528.2 514.3 L528.2 517.7 M525.2 514.0 L525.2 517.4 M522.4 513.8 L522.4 517.1 M519.6 513.6 L519.6 516.9 M516.9 513.4 L516.9 516.6 M514.2 513.1 L514.2 516.4 M511.6 512.9 L511.6 516.1 M509.1 512.7 L509.1 515.9 M506.7 512.5 L506.7 515.6 M504.3 512.4 L504.3 515.4 M501.9 512.2 L501.9 515.2 M499.7 512.0 L499.7 515.0 M497.4 511.8 L497.4 514.8 M495.3 511.6 L495.3 514.6 M493.1 511.5 L493.1 514.3 M491.1 511.3 L491.1 514.2 M489.0 511.1 L489.0 514.0 M487.1 511.0 L487.1 513.8 M485.1 510.8 L485.1 513.6 M483.2 510.7 L483.2 513.4 M481.4 510.5 L481.4 513.2 M479.5 510.4 L479.5 513.1 M477.8 510.2 L477.8 512.9 M476.0 510.1 L476.0 512.7 M474.3 510.0 L474.3 512.6 M472.6 509.8 L472.6 512.4 M1130.9 575.1 L1130.9 588.1 M1090.5 571.2 L1090.5 583.6 M1053.8 567.8 L1053.8 579.5 M1020.5 564.6 L1020.5 575.8 M990.0 561.7 L990.0 572.4 M962.0 559.0 L962.0 569.3 M936.3 556.6 L936.3 566.5 M912.5 554.3 L912.5 563.8 M890.4 552.2 L890.4 561.4 M869.9 550.2 L869.9 559.1 M850.8 548.4 L850.8 557.0 M833.0 546.7 L833.0 555.0 M816.3 545.1 L816.3 553.1 M800.7 543.6 L800.7 551.4 M786.0 542.2 L786.0 549.8 M772.1 540.9 L772.1 548.2 M759.0 539.7 L759.0 546.8 M746.7 538.5 L746.7 545.4 M735.0 537.4 L735.0 544.1 M723.9 536.3 L723.9 542.9 M713.4 535.3 L713.4 541.7 M703.4 534.4 L703.4 540.6 M693.9 533.5 L693.9 539.5 M684.9 532.6 L684.9 538.5 M676.2 531.8 L676.2 537.6 M668.0 531.0 L668.0 536.6 M660.1 530.3 L660.1 535.8 M652.5 529.5 L652.5 534.9 M645.3 528.8 L645.3 534.1 M638.4 528.2 L638.4 533.4 M631.7 527.6 L631.7 532.6 M625.4 526.9 L625.4 531.9 M619.2 526.4 L619.2 531.2 M613.3 525.8 L613.3 530.6 M607.7 525.3 L607.7 530.0 M602.2 524.7 L602.2 529.3 M596.9 524.2 L596.9 528.8 M591.8 523.8 L591.8 528.2 M586.9 523.3 L586.9 527.6 M582.2 522.8 L582.2 527.1 M577.6 522.4 L577.6 526.6 M573.2 522.0 L573.2 526.1 M568.9 521.6 L568.9 525.6 M564.8 521.2 L564.8 525.2 M560.8 520.8 L560.8 524.7 M556.9 520.4 L556.9 524.3 M553.1 520.1 L553.1 523.9 M549.5 519.7 L549.5 523.5 M545.9 519.4 L545.9 523.1 M542.5 519.1 L542.5 522.7 M539.1 518.7 L539.1 522.3 M535.9 518.4 L535.9 522.0 M532.7 518.1 L532.7 521.6 M529.7 517.8 L529.7 521.3 M526.7 517.5 L526.7 521.0 M523.8 517.3 L523.8 520.6 M521.0 517.0 L521.0 520.3 M518.2 516.7 L518.2 520.0 M515.5 516.5 L515.5 519.7 M512.9 516.2 L512.9 519.4 M510.4 516.0 L510.4 519.1 M507.9 515.8 L507.9 518.9 M505.5 515.5 L505.5 518.6 M503.1 515.3 L503.1 518.3 M500.8 515.1 L500.8 518.1 M498.5 514.9 L498.5 517.8 M496.3 514.7 L496.3 517.6 M494.2 514.5 L494.2 517.3 M492.1 514.3 L492.1 517.1 M490.0 514.1 L490.0 516.9 M488.0 513.9 L488.0 516.7 M486.1 513.7 L486.1 516.4 M484.2 513.5 L484.2 516.2 M482.3 513.3 L482.3 516.0 M480.4 513.1 L480.4 515.8 M478.6 513.0 L478.6 515.6 M476.9 512.8 L476.9 515.4 M475.2 512.6 L475.2 515.2 M473.5 512.5 L473.5 515.0 M471.8 512.3 L471.8 514.9 M1152.7 590.5 L1152.7 603.8 M1110.2 585.8 L1110.2 598.4 M1071.7 581.5 L1071.7 593.5 M1036.8 577.6 L1036.8 589.1 M1004.9 574.1 L1004.9 585.0 M975.7 570.8 L975.7 581.3 M948.9 567.9 L948.9 577.9 M924.1 565.1 L924.1 574.8 M901.2 562.6 L901.2 571.9 M880.0 560.2 L880.0 569.2 M860.2 558.0 L860.2 566.7 M841.8 556.0 L841.8 564.4 M824.5 554.0 L824.5 562.2 M808.4 552.2 L808.4 560.1 M793.2 550.6 L793.2 558.2 M778.9 549.0 L778.9 556.4 M765.5 547.5 L765.5 554.7 M752.8 546.1 L752.8 553.1 M740.8 544.7 L740.8 551.5 M729.4 543.5 L729.4 550.1 M718.6 542.3 L718.6 548.7 M708.3 541.1 L708.3 547.4 M698.6 540.1 L698.6 546.2 M689.3 539.0 L689.3 545.0 M680.5 538.0 L680.5 543.9 M672.0 537.1 L672.0 542.8 M664.0 536.2 L664.0 541.8 M656.3 535.3 L656.3 540.8 M648.9 534.5 L648.9 539.9 M641.8 533.7 L641.8 539.0 M635.0 533.0 L635.0 538.1 M628.5 532.3 L628.5 537.3 M622.3 531.6 L622.3 536.5 M616.3 530.9 L616.3 535.7 M610.5 530.3 L610.5 535.0 M604.9 529.6 L604.9 534.3 M599.5 529.0 L599.5 533.6 M594.4 528.5 L594.4 533.0 M589.4 527.9 L589.4 532.3 M584.6 527.4 L584.6 531.7 M579.9 526.9 L579.9 531.1 M575.4 526.4 L575.4 530.6 M571.1 525.9 L571.1 530.0 M566.8 525.4 L566.8 529.5 M562.8 525.0 L562.8 528.9 M558.8 524.5 L558.8 528.4 M555.0 524.1 L555.0 528.0 M551.3 523.7 L551.3 527.5 M547.7 523.3 L547.7 527.0 M544.2 522.9 L544.2 526.6 M540.8 522.5 L540.8 526.2 M537.5 522.2 L537.5 525.7 M534.3 521.8 L534.3 525.3 M531.2 521.5 L531.2 524.9 M528.2 521.1 L528.2 524.6 M525.2 520.8 L525.2 524.2 M522.4 520.5 L522.4 523.8 M519.6 520.2 L519.6 523.5 M516.9 519.9 L516.9 523.1 M514.2 519.6 L514.2 522.8 M511.6 519.3 L511.6 522.5 M509.1 519.0 L509.1 522.1 M506.7 518.7 L506.7 521.8 M504.3 518.5 L504.3 521.5 M501.9 518.2 L501.9 521.2 M499.7 518.0 L499.7 520.9 M497.4 517.7 L497.4 520.7 M495.3 517.5 L495.3 520.4 M493.1 517.2 L493.1 520.1 M491.1 517.0 L491.1 519.8 M489.0 516.8 L489.0 519.6 M487.1 516.6 L487.1 519.3 M485.1 516.3 L485.1 519.1 M483.2 516.1 L483.2 518.9 M481.4 515.9 L481.4 518.6 M479.5 515.7 L479.5 518.4 M477.8 515.5 L477.8 518.2 M476.0 515.3 L476.0 517.9 M474.3 515.1 L474.3 517.7 M472.6 515.0 L472.6 517.5 M1130.9 601.0 L1130.9 614.0 M1090.5 595.9 L1090.5 608.2 M1053.8 591.3 L1053.8 603.0 M1020.5 587.0 L1020.5 598.2 M990.0 583.2 L990.0 593.9 M962.0 579.6 L962.0 589.9 M936.3 576.3 L936.3 586.2 M912.5 573.3 L912.5 582.8 M890.4 570.5 L890.4 579.7 M869.9 567.9 L869.9 576.8 M850.8 565.5 L850.8 574.0 M833.0 563.2 L833.0 571.5 M816.3 561.1 L816.3 569.1 M800.7 559.1 L800.7 566.9 M786.0 557.3 L786.0 564.8 M772.1 555.5 L772.1 562.8 M759.0 553.9 L759.0 560.9 M746.7 552.3 L746.7 559.2 M735.0 550.8 L735.0 557.5 M723.9 549.4 L723.9 555.9 M713.4 548.1 L713.4 554.4 M703.4 546.8 L703.4 553.0 M693.9 545.6 L693.9 551.6 M684.9 544.4 L684.9 550.4 M676.2 543.3 L676.2 549.1 M668.0 542.3 L668.0 547.9 M660.1 541.3 L660.1 546.8 M652.5 540.3 L652.5 545.7 M645.3 539.4 L645.3 544.7 M638.4 538.5 L638.4 543.7 M631.7 537.7 L631.7 542.8 M625.4 536.9 L625.4 541.9 M619.2 536.1 L619.2 541.0 M613.3 535.4 L613.3 540.1 M607.7 534.6 L607.7 539.3 M602.2 533.9 L602.2 538.6 M596.9 533.3 L596.9 537.8 M591.8 532.6 L591.8 537.1 M586.9 532.0 L586.9 536.4 M582.2 531.4 L582.2 535.7 M577.6 530.8 L577.6 535.1 M573.2 530.3 L573.2 534.4 M568.9 529.7 L568.9 533.8 M564.8 529.2 L564.8 533.2 M560.8 528.7 L560.8 532.6 M556.9 528.2 L556.9 532.1 M553.1 527.7 L553.1 531.6 M549.5 527.3 L549.5 531.0 M545.9 526.8 L545.9 530.5 M542.5 526.4 L542.5 530.0 M539.1 525.9 L539.1 529.6 M535.9 525.5 L535.9 529.1 M532.7 525.1 L532.7 528.6 M529.7 524.7 L529.7 528.2 M526.7 524.4 L526.7 527.8 M523.8 524.0 L523.8 527.4 M521.0 523.6 L521.0 527.0 M518.2 523.3 L518.2 526.6 M515.5 523.0 L515.5 526.2 M512.9 522.6 L512.9 525.8 M510.4 522.3 L510.4 525.5 M507.9 522.0 L507.9 525.1 M505.5 521.7 L505.5 524.8 M503.1 521.4 L503.1 524.4 M500.8 521.1 L500.8 524.1 M498.5 520.8 L498.5 523.8 M496.3 520.5 L496.3 523.4 M494.2 520.2 L494.2 523.1 M492.1 520.0 L492.1 522.8 M490.0 519.7 L490.0 522.6 M488.0 519.5 L488.0 522.3 M486.1 519.2 L486.1 522.0 M484.2 519.0 L484.2 521.7 M482.3 518.7 L482.3 521.4 M480.4 518.5 L480.4 521.2 M478.6 518.3 L478.6 520.9 M476.9 518.0 L476.9 520.7 M475.2 517.8 L475.2 520.4 M473.5 517.6 L473.5 520.2 M471.8 517.4 L471.8 520.0 M1152.7 617.1 L1152.7 630.4 M1110.2 611.0 L1110.2 623.7 M1071.7 605.6 L1071.7 617.6 M1036.8 600.6 L1036.8 612.1 M1004.9 596.0 L1004.9 607.0 M975.7 591.9 L975.7 602.4 M948.9 588.0 L948.9 598.1 M924.1 584.5 L924.1 594.2 M901.2 581.2 L901.2 590.6 M880.0 578.2 L880.0 587.2 M860.2 575.4 L860.2 584.1 M841.8 572.7 L841.8 581.1 M824.5 570.3 L824.5 578.4 M808.4 568.0 L808.4 575.8 M793.2 565.8 L793.2 573.4 M778.9 563.8 L778.9 571.2 M765.5 561.9 L765.5 569.0 M752.8 560.0 L752.8 567.0 M740.8 558.3 L740.8 565.1 M729.4 556.7 L729.4 563.3 M718.6 555.2 L718.6 561.6 M708.3 553.7 L708.3 560.0 M698.6 552.3 L698.6 558.4 M689.3 551.0 L689.3 557.0 M680.5 549.7 L680.5 555.6 M672.0 548.5 L672.0 554.2 M664.0 547.4 L664.0 553.0 M656.3 546.3 L656.3 551.7 M648.9 545.2 L648.9 550.6 M641.8 544.2 L641.8 549.4 M635.0 543.2 L635.0 548.4 M628.5 542.3 L628.5 547.3 M622.3 541.4 L622.3 546.3 M616.3 540.6 L616.3 545.4 M610.5 539.7 L610.5 544.5 M604.9 538.9 L604.9 543.6 M599.5 538.2 L599.5 542.7 M594.4 537.4 L594.4 541.9 M589.4 536.7 L589.4 541.1 M584.6 536.0 L584.6 540.4 M579.9 535.4 L579.9 539.6 M575.4 534.7 L575.4 538.9 M571.1 534.1 L571.1 538.2 M566.8 533.5 L566.8 537.6 M562.8 532.9 L562.8 536.9 M558.8 532.4 L558.8 536.3 M555.0 531.8 L555.0 535.7 M551.3 531.3 L551.3 535.1 M547.7 530.8 L547.7 534.5 M544.2 530.3 L544.2 534.0 M540.8 529.8 L540.8 533.4 M537.5 529.3 L537.5 532.9 M534.3 528.9 L534.3 532.4 M531.2 528.4 L531.2 531.9 M528.2 528.0 L528.2 531.4 M525.2 527.6 L525.2 531.0 M522.4 527.2 L522.4 530.5 M519.6 526.8 L519.6 530.1 M516.9 526.4 L516.9 529.6 M514.2 526.0 L514.2 529.2 M511.6 525.6 L511.6 528.8 M509.1 525.3 L509.1 528.4 M506.7 524.9 L506.7 528.0 M504.3 524.6 L504.3 527.6 M501.9 524.2 L501.9 527.3 M499.7 523.9 L499.7 526.9 M497.4 523.6 L497.4 526.6 M495.3 523.3 L495.3 526.2 M493.1 523.0 L493.1 525.9 M491.1 522.7 L491.1 525.5 M489.0 522.4 L489.0 525.2 M487.1 522.1 L487.1 524.9 M485.1 521.8 L485.1 524.6 M483.2 521.6 L483.2 524.3 M481.4 521.3 L481.4 524.0 M479.5 521.1 L479.5 523.7 M477.8 520.8 L477.8 523.4 M476.0 520.5 L476.0 523.2 M474.3 520.3 L474.3 522.9 M472.6 520.1 L472.6 522.6 M1130.9 627.0 L1130.9 639.9 M1090.5 620.6 L1090.5 632.9 M1053.8 614.8 L1053.8 626.5 M1020.5 609.5 L1020.5 620.7 M990.0 604.6 L990.0 615.4 M962.0 600.2 L962.0 610.5 M936.3 596.1 L936.3 606.0 M912.5 592.3 L912.5 601.9 M890.4 588.9 L890.4 598.0 M869.9 585.6 L869.9 594.4 M850.8 582.6 L850.8 591.1 M833.0 579.8 L833.0 588.0 M816.3 577.1 L816.3 585.1 M800.7 574.6 L800.7 582.4 M786.0 572.3 L786.0 579.8 M772.1 570.1 L772.1 577.4 M759.0 568.0 L759.0 575.1 M746.7 566.1 L746.7 573.0 M735.0 564.2 L735.0 570.9 M723.9 562.5 L723.9 569.0 M713.4 560.8 L713.4 567.2 M703.4 559.2 L703.4 565.4 M693.9 557.7 L693.9 563.8 M684.9 556.3 L684.9 562.2 M676.2 554.9 L676.2 560.7 M668.0 553.6 L668.0 559.2 M660.1 552.3 L660.1 557.9 M652.5 551.1 L652.5 556.5 M645.3 550.0 L645.3 555.3 M638.4 548.9 L638.4 554.1 M631.7 547.8 L631.7 552.9 M625.4 546.8 L625.4 551.8 M619.2 545.9 L619.2 550.7 M613.3 544.9 L613.3 549.7 M607.7 544.0 L607.7 548.7 M602.2 543.2 L602.2 547.8 M596.9 542.3 L596.9 546.8 M591.8 541.5 L591.8 546.0 M586.9 540.7 L586.9 545.1 M582.2 540.0 L582.2 544.3 M577.6 539.3 L577.6 543.5 M573.2 538.6 L573.2 542.7 M568.9 537.9 L568.9 542.0 M564.8 537.2 L564.8 541.2 M560.8 536.6 L560.8 540.5 M556.9 536.0 L556.9 539.9 M553.1 535.4 L553.1 539.2 M549.5 534.8 L549.5 538.6 M545.9 534.2 L545.9 538.0 M542.5 533.7 L542.5 537.4 M539.1 533.2 L539.1 536.8 M535.9 532.7 L535.9 536.2 M532.7 532.2 L532.7 535.7 M529.7 531.7 L529.7 535.1 M526.7 531.2 L526.7 534.6 M523.8 530.7 L523.8 534.1 M521.0 530.3 L521.0 533.6 M518.2 529.8 L518.2 533.1 M515.5 529.4 L515.5 532.7 M512.9 529.0 L512.9 532.2 M510.4 528.6 L510.4 531.8 M507.9 528.2 L507.9 531.3 M505.5 527.8 L505.5 530.9 M503.1 527.5 L503.1 530.5 M500.8 527.1 L500.8 530.1 M498.5 526.7 L498.5 529.7 M496.3 526.4 L496.3 529.3 M494.2 526.0 L494.2 528.9 M492.1 525.7 L492.1 528.6 M490.0 525.4 L490.0 528.2 M488.0 525.1 L488.0 527.9 M486.1 524.8 L486.1 527.5 M484.2 524.4 L484.2 527.2 M482.3 524.2 L482.3 526.9 M480.4 523.9 L480.4 526.5 M478.6 523.6 L478.6 526.2 M476.9 523.3 L476.9 525.9 M475.2 523.0 L475.2 525.6 M473.5 522.8 L473.5 525.3 M471.8 522.5 L471.8 525.0 M1152.7 643.7 L1152.7 657.1 M1110.2 636.3 L1110.2 649.0 M1071.7 629.6 L1071.7 641.7 M1036.8 623.5 L1036.8 635.0 M1004.9 618.0 L1004.9 629.0 M975.7 612.9 L975.7 623.4 M948.9 608.2 L948.9 618.3 M924.1 603.9 L924.1 613.6 M901.2 599.9 L901.2 609.2 M880.0 596.2 L880.0 605.2 M860.2 592.8 L860.2 601.4 M841.8 589.5 L841.8 597.9 M824.5 586.5 L824.5 594.7 M808.4 583.7 L808.4 591.6 M793.2 581.1 L793.2 588.7 M778.9 578.6 L778.9 586.0 M765.5 576.2 L765.5 583.4 M752.8 574.0 L752.8 581.0 M740.8 571.9 L740.8 578.7 M729.4 569.9 L729.4 576.6 M718.6 568.1 L718.6 574.5 M708.3 566.3 L708.3 572.6 M698.6 564.6 L698.6 570.7 M689.3 563.0 L689.3 568.9 M680.5 561.4 L680.5 567.3 M672.0 559.9 L672.0 565.7 M664.0 558.5 L664.0 564.1 M656.3 557.2 L656.3 562.7 M648.9 555.9 L648.9 561.3 M641.8 554.7 L641.8 559.9 M635.0 553.5 L635.0 558.6 M628.5 552.4 L628.5 557.4 M622.3 551.3 L622.3 556.2 M616.3 550.2 L616.3 555.0 M610.5 549.2 L610.5 553.9 M604.9 548.2 L604.9 552.9 M599.5 547.3 L599.5 551.9 M594.4 546.4 L594.4 550.9 M589.4 545.5 L589.4 549.9 M584.6 544.7 L584.6 549.0 M579.9 543.9 L579.9 548.1 M575.4 543.1 L575.4 547.3 M571.1 542.3 L571.1 546.5 M566.8 541.6 L566.8 545.7 M562.8 540.9 L562.8 544.9 M558.8 540.2 L558.8 544.1 M555.0 539.5 L555.0 543.4 M551.3 538.9 L551.3 542.7 M547.7 538.3 L547.7 542.0 M544.2 537.7 L544.2 541.3 M540.8 537.1 L540.8 540.7 M537.5 536.5 L537.5 540.1 M534.3 535.9 L534.3 539.5 M531.2 535.4 L531.2 538.9 M528.2 534.9 L528.2 538.3 M525.2 534.3 L525.2 537.7 M522.4 533.8 L522.4 537.2 M519.6 533.4 L519.6 536.7 M516.9 532.9 L516.9 536.1 M514.2 532.4 L514.2 535.6 M511.6 532.0 L511.6 535.2 M509.1 531.5 L509.1 534.7 M506.7 531.1 L506.7 534.2 M504.3 530.7 L504.3 533.8 M501.9 530.3 L501.9 533.3 M499.7 529.9 L499.7 532.9 M497.4 529.5 L497.4 532.5 M495.3 529.1 L495.3 532.0 M493.1 528.8 L493.1 531.6 M491.1 528.4 L491.1 531.2 M489.0 528.0 L489.0 530.9 M487.1 527.7 L487.1 530.5 M485.1 527.4 L485.1 530.1 M483.2 527.0 L483.2 529.7 M481.4 526.7 L481.4 529.4 M479.5 526.4 L479.5 529.0 M477.8 526.1 L477.8 528.7 M476.0 525.8 L476.0 528.4 M474.3 525.5 L474.3 528.1 M472.6 525.2 L472.6 527.7 M1130.9 652.9 L1130.9 665.9 M1090.5 645.2 L1090.5 657.5 M1053.8 638.3 L1053.8 650.0 M1020.5 631.9 L1020.5 643.1 M990.0 626.1 L990.0 636.9 M962.0 620.8 L962.0 631.1 M936.3 615.9 L936.3 625.8 M912.5 611.4 L912.5 620.9 M890.4 607.2 L890.4 616.3 M869.9 603.3 L869.9 612.1 M850.8 599.7 L850.8 608.2 M833.0 596.3 L833.0 604.5 M816.3 593.1 L816.3 601.1 M800.7 590.1 L800.7 597.9 M786.0 587.3 L786.0 594.8 M772.1 584.7 L772.1 592.0 M759.0 582.2 L759.0 589.3 M746.7 579.8 L746.7 586.7 M735.0 577.6 L735.0 584.3 M723.9 575.5 L723.9 582.1 M713.4 573.5 L713.4 579.9 M703.4 571.6 L703.4 577.8 M693.9 569.8 L693.9 575.9 M684.9 568.1 L684.9 574.0 M676.2 566.4 L676.2 572.2 M668.0 564.9 L668.0 570.5 M660.1 563.4 L660.1 568.9 M652.5 561.9 L652.5 567.3 M645.3 560.6 L645.3 565.9 M638.4 559.3 L638.4 564.4 M631.7 558.0 L631.7 563.1 M625.4 556.8 L625.4 561.8 M619.2 555.6 L619.2 560.5 M613.3 554.5 L613.3 559.3 M607.7 553.4 L607.7 558.1 M602.2 552.4 L602.2 557.0 M596.9 551.4 L596.9 555.9 M591.8 550.4 L591.8 554.8 M586.9 549.5 L586.9 553.8 M582.2 548.6 L582.2 552.9 M577.6 547.7 L577.6 551.9 M573.2 546.9 L573.2 551.0 M568.9 546.0 L568.9 550.1 M564.8 545.3 L564.8 549.3 M560.8 544.5 L560.8 548.4 M556.9 543.8 L556.9 547.6 M553.1 543.0 L553.1 546.9 M549.5 542.3 L549.5 546.1 M545.9 541.7 L545.9 545.4 M542.5 541.0 L542.5 544.7 M539.1 540.4 L539.1 544.0 M535.9 539.8 L535.9 543.3 M532.7 539.2 L532.7 542.7 M529.7 538.6 L529.7 542.0 M526.7 538.0 L526.7 541.4 M523.8 537.5 L523.8 540.8 M521.0 536.9 L521.0 540.2 M518.2 536.4 L518.2 539.7 M515.5 535.9 L515.5 539.1 M512.9 535.4 L512.9 538.6 M510.4 534.9 L510.4 538.1 M507.9 534.4 L507.9 537.6 M505.5 534.0 L505.5 537.1 M503.1 533.5 L503.1 536.6 M500.8 533.1 L500.8 536.1 M498.5 532.7 L498.5 535.6 M496.3 532.2 L496.3 535.2 M494.2 531.8 L494.2 534.7 M492.1 531.4 L492.1 534.3 M490.0 531.0 L490.0 533.9 M488.0 530.7 L488.0 533.5 M486.1 530.3 L486.1 533.1 M484.2 529.9 L484.2 532.7 M482.3 529.6 L482.3 532.3 M480.4 529.2 L480.4 531.9 M478.6 528.9 L478.6 531.5 M476.9 528.5 L476.9 531.2 M475.2 528.2 L475.2 530.8 M473.5 527.9 L473.5 530.5 M471.8 527.6 L471.8 530.1 M1152.7 670.4 L1152.7 683.7 M1110.2 661.6 L1110.2 674.2 M1071.7 653.7 L1071.7 665.7 M1036.8 646.5 L1036.8 658.0 M1004.9 639.9 L1004.9 650.9 M975.7 633.9 L975.7 644.4 M948.9 628.4 L948.9 638.5 M924.1 623.3 L924.1 633.0 M901.2 618.6 L901.2 627.9 M880.0 614.2 L880.0 623.2 M860.2 610.1 L860.2 618.8 M841.8 606.3 L841.8 614.7 M824.5 602.8 L824.5 610.9 M808.4 599.4 L808.4 607.3 M793.2 596.3 L793.2 603.9 M778.9 593.4 L778.9 600.8 M765.5 590.6 L765.5 597.8 M752.8 588.0 L752.8 595.0 M740.8 585.5 L740.8 592.3 M729.4 583.2 L729.4 589.8 M718.6 581.0 L718.6 587.4 M708.3 578.8 L708.3 585.1 M698.6 576.8 L698.6 583.0 M689.3 574.9 L689.3 580.9 M680.5 573.1 L680.5 578.9 M672.0 571.4 L672.0 577.1 M664.0 569.7 L664.0 575.3 M656.3 568.1 L656.3 573.6 M648.9 566.6 L648.9 571.9 M641.8 565.1 L641.8 570.4 M635.0 563.7 L635.0 568.9 M628.5 562.4 L628.5 567.4 M622.3 561.1 L622.3 566.0 M616.3 559.9 L616.3 564.7 M610.5 558.7 L610.5 563.4 M604.9 557.5 L604.9 562.2 M599.5 556.4 L599.5 561.0 M594.4 555.4 L594.4 559.8 M589.4 554.3 L589.4 558.7 M584.6 553.3 L584.6 557.7 M579.9 552.4 L579.9 556.6 M575.4 551.5 L575.4 555.6 M571.1 550.6 L571.1 554.7 M566.8 549.7 L566.8 553.7 M562.8 548.9 L562.8 552.8 M558.8 548.0 L558.8 552.0 M555.0 547.3 L555.0 551.1 M551.3 546.5 L551.3 550.3 M547.7 545.8 L547.7 549.5 M544.2 545.0 L544.2 548.7 M540.8 544.3 L540.8 548.0 M537.5 543.7 L537.5 547.2 M534.3 543.0 L534.3 546.5 M531.2 542.4 L531.2 545.8 M528.2 541.7 L528.2 545.2 M525.2 541.1 L525.2 544.5 M522.4 540.5 L522.4 543.9 M519.6 540.0 L519.6 543.3 M516.9 539.4 L516.9 542.7 M514.2 538.9 L514.2 542.1 M511.6 538.3 L511.6 541.5 M509.1 537.8 L509.1 540.9 M506.7 537.3 L506.7 540.4 M504.3 536.8 L504.3 539.9 M501.9 536.3 L501.9 539.3 M499.7 535.9 L499.7 538.8 M497.4 535.4 L497.4 538.3 M495.3 535.0 L495.3 537.9 M493.1 534.5 L493.1 537.4 M491.1 534.1 L491.1 536.9 M489.0 533.7 L489.0 536.5 M487.1 533.3 L487.1 536.0 M485.1 532.9 L485.1 535.6 M483.2 532.5 L483.2 535.2 M481.4 532.1 L481.4 534.8 M479.5 531.7 L479.5 534.4 M477.8 531.3 L477.8 534.0 M476.0 531.0 L476.0 533.6 M474.3 530.6 L474.3 533.2 M472.6 530.3 L472.6 532.9 M1130.9 678.8 L1130.9 691.8 M1090.5 669.9 L1090.5 682.2 M1053.8 661.8 L1053.8 673.5 M1020.5 654.4 L1020.5 665.6 M990.0 647.6 L990.0 658.3 M962.0 641.4 L962.0 651.7 M936.3 635.7 L936.3 645.6 M912.5 630.4 L912.5 639.9 M890.4 625.5 L890.4 634.7 M869.9 621.0 L869.9 629.8 M850.8 616.7 L850.8 625.3 M833.0 612.8 L833.0 621.0 M816.3 609.1 L816.3 617.1 M800.7 605.6 L800.7 613.4 M786.0 602.3 L786.0 609.9 M772.1 599.3 L772.1 606.6 M759.0 596.4 L759.0 603.5 M746.7 593.6 L746.7 600.5 M735.0 591.0 L735.0 597.7 M723.9 588.6 L723.9 595.1 M713.4 586.3 L713.4 592.6 M703.4 584.0 L703.4 590.2 M693.9 581.9 L693.9 588.0 M684.9 579.9 L684.9 585.8 M676.2 578.0 L676.2 583.8 M668.0 576.2 L668.0 581.8 M660.1 574.4 L660.1 579.9 M652.5 572.8 L652.5 578.2 M645.3 571.1 L645.3 576.4 M638.4 569.6 L638.4 574.8 M631.7 568.1 L631.7 573.2 M625.4 566.7 L625.4 571.7 M619.2 565.4 L619.2 570.2 M613.3 564.1 L613.3 568.8 M607.7 562.8 L607.7 567.5 M602.2 561.6 L602.2 566.2 M596.9 560.4 L596.9 564.9 M591.8 559.3 L591.8 563.7 M586.9 558.2 L586.9 562.6 M582.2 557.2 L582.2 561.4 M577.6 556.1 L577.6 560.4 M573.2 555.2 L573.2 559.3 M568.9 554.2 L568.9 558.3 M564.8 553.3 L564.8 557.3 M560.8 552.4 L560.8 556.4 M556.9 551.5 L556.9 555.4 M553.1 550.7 L553.1 554.5 M549.5 549.9 L549.5 553.7 M545.9 549.1 L545.9 552.8 M542.5 548.3 L542.5 552.0 M539.1 547.6 L539.1 551.2 M535.9 546.9 L535.9 550.4 M532.7 546.2 L532.7 549.7 M529.7 545.5 L529.7 549.0 M526.7 544.8 L526.7 548.3 M523.8 544.2 L523.8 547.6 M521.0 543.6 L521.0 546.9 M518.2 543.0 L518.2 546.2 M515.5 542.4 L515.5 545.6 M512.9 541.8 L512.9 545.0 M510.4 541.2 L510.4 544.4 M507.9 540.7 L507.9 543.8 M505.5 540.1 L505.5 543.2 M503.1 539.6 L503.1 542.6 M500.8 539.1 L500.8 542.1 M498.5 538.6 L498.5 541.6 M496.3 538.1 L496.3 541.0 M494.2 537.6 L494.2 540.5 M492.1 537.2 L492.1 540.0 M490.0 536.7 L490.0 539.5 M488.0 536.3 L488.0 539.1 M486.1 535.8 L486.1 538.6 M484.2 535.4 L484.2 538.1 M482.3 535.0 L482.3 537.7 M480.4 534.6 L480.4 537.3 M478.6 534.2 L478.6 536.8 M476.9 533.8 L476.9 536.4 M475.2 533.4 L475.2 536.0 M473.5 533.0 L473.5 535.6 M471.8 532.7 L471.8 535.2 M1152.7 697.0 L1152.7 710.3 M1110.2 686.9 L1110.2 699.5 M1071.7 677.7 L1071.7 689.8 M1036.8 669.4 L1036.8 680.9 M1004.9 661.9 L1004.9 672.9 M975.7 654.9 L975.7 665.5 M948.9 648.6 L948.9 658.7 M924.1 642.7 L924.1 652.4 M901.2 637.2 L901.2 646.6 M880.0 632.2 L880.0 641.2 M860.2 627.5 L860.2 636.2 M841.8 623.1 L841.8 631.5 M824.5 619.0 L824.5 627.1 M808.4 615.2 L808.4 623.0 M793.2 611.6 L793.2 619.2 M778.9 608.2 L778.9 615.6 M765.5 605.0 L765.5 612.2 M752.8 602.0 L752.8 609.0 M740.8 599.1 L740.8 605.9 M729.4 596.4 L729.4 603.0 M718.6 593.8 L718.6 600.3 M708.3 591.4 L708.3 597.7 M698.6 589.1 L698.6 595.2 M689.3 586.9 L689.3 592.9 M680.5 584.8 L680.5 590.6 M672.0 582.8 L672.0 588.5 M664.0 580.9 L664.0 586.5 M656.3 579.0 L656.3 584.5 M648.9 577.3 L648.9 582.6 M641.8 575.6 L641.8 580.8 M635.0 574.0 L635.0 579.1 M628.5 572.4 L628.5 577.5 M622.3 571.0 L622.3 575.9 M616.3 569.5 L616.3 574.4 M610.5 568.2 L610.5 572.9 M604.9 566.8 L604.9 571.5 M599.5 565.6 L599.5 570.1 M594.4 564.3 L594.4 568.8 M589.4 563.1 L589.4 567.5 M584.6 562.0 L584.6 566.3 M579.9 560.9 L579.9 565.1 M575.4 559.8 L575.4 564.0 M571.1 558.8 L571.1 562.9 M566.8 557.8 L566.8 561.8 M562.8 556.8 L562.8 560.8 M558.8 555.9 L558.8 559.8 M555.0 555.0 L555.0 558.8 M551.3 554.1 L551.3 557.9 M547.7 553.2 L547.7 557.0 M544.2 552.4 L544.2 556.1 M540.8 551.6 L540.8 555.2 M537.5 550.8 L537.5 554.4 M534.3 550.1 L534.3 553.6 M531.2 549.3 L531.2 552.8 M528.2 548.6 L528.2 552.0 M525.2 547.9 L525.2 551.3 M522.4 547.2 L522.4 550.6 M519.6 546.6 L519.6 549.9 M516.9 545.9 L516.9 549.2 M514.2 545.3 L514.2 548.5 M511.6 544.7 L511.6 547.8 M509.1 544.1 L509.1 547.2 M506.7 543.5 L506.7 546.6 M504.3 542.9 L504.3 546.0 M501.9 542.4 L501.9 545.4 M499.7 541.8 L499.7 544.8 M497.4 541.3 L497.4 544.2 M495.3 540.8 L495.3 543.7 M493.1 540.3 L493.1 543.2 M491.1 539.8 L491.1 542.6 M489.0 539.3 L489.0 542.1 M487.1 538.8 L487.1 541.6 M485.1 538.4 L485.1 541.1 M483.2 537.9 L483.2 540.6 M481.4 537.5 L481.4 540.2 M479.5 537.0 L479.5 539.7 M477.8 536.6 L477.8 539.3 M476.0 536.2 L476.0 538.8 M474.3 535.8 L474.3 538.4 M472.6 535.4 L472.6 538.0 M1130.9 704.8 L1130.9 717.7 M1090.5 694.5 L1090.5 706.9 M1053.8 685.3 L1053.8 697.0 M1020.5 676.8 L1020.5 688.0 M990.0 669.1 L990.0 679.8 M962.0 662.0 L962.0 672.3 M936.3 655.5 L936.3 665.4 M912.5 649.4 L912.5 658.9 M890.4 643.8 L890.4 653.0 M869.9 638.7 L869.9 647.5 M850.8 633.8 L850.8 642.4 M833.0 629.3 L833.0 637.6 M816.3 625.1 L816.3 633.1 M800.7 621.1 L800.7 628.8 M786.0 617.4 L786.0 624.9 M772.1 613.9 L772.1 621.1 M759.0 610.5 L759.0 617.6 M746.7 607.4 L746.7 614.3 M735.0 604.5 L735.0 611.2 M723.9 601.6 L723.9 608.2 M713.4 599.0 L713.4 605.3 M703.4 596.4 L703.4 602.7 M693.9 594.0 L693.9 600.1 M684.9 591.7 L684.9 597.7 M676.2 589.6 L676.2 595.3 M668.0 587.5 L668.0 593.1 M660.1 585.5 L660.1 591.0 M652.5 583.6 L652.5 589.0 M645.3 581.7 L645.3 587.0 M638.4 580.0 L638.4 585.1 M631.7 578.3 L631.7 583.4 M625.4 576.7 L625.4 581.6 M619.2 575.1 L619.2 580.0 M613.3 573.6 L613.3 578.4 M607.7 572.2 L607.7 576.9 M602.2 570.8 L602.2 575.4 M596.9 569.5 L596.9 574.0 M591.8 568.2 L591.8 572.6 M586.9 566.9 L586.9 571.3 M582.2 565.7 L582.2 570.0 M577.6 564.6 L577.6 568.8 M573.2 563.5 L573.2 567.6 M568.9 562.4 L568.9 566.4 M564.8 561.3 L564.8 565.3 M560.8 560.3 L560.8 564.3 M556.9 559.3 L556.9 563.2 M553.1 558.4 L553.1 562.2 M549.5 557.4 L549.5 561.2 M545.9 556.5 L545.9 560.3 M542.5 555.7 L542.5 559.3 M539.1 554.8 L539.1 558.4 M535.9 554.0 L535.9 557.6 M532.7 553.2 L532.7 556.7 M529.7 552.4 L529.7 555.9 M526.7 551.7 L526.7 555.1 M523.8 550.9 L523.8 554.3 M521.0 550.2 L521.0 553.5 M518.2 549.5 L518.2 552.8 M515.5 548.8 L515.5 552.1 M512.9 548.2 L512.9 551.4 M510.4 547.5 L510.4 550.7 M507.9 546.9 L507.9 550.0 M505.5 546.3 L505.5 549.4 M503.1 545.7 L503.1 548.7 M500.8 545.1 L500.8 548.1 M498.5 544.5 L498.5 547.5 M496.3 544.0 L496.3 546.9 M494.2 543.4 L494.2 546.3 M492.1 542.9 L492.1 545.8 M490.0 542.4 L490.0 545.2 M488.0 541.9 L488.0 544.7 M486.1 541.4 L486.1 544.1 M484.2 540.9 L484.2 543.6 M482.3 540.4 L482.3 543.1 M480.4 539.9 L480.4 542.6 M478.6 539.5 L478.6 542.1 M476.9 539.0 L476.9 541.7 M475.2 538.6 L475.2 541.2 M473.5 538.2 L473.5 540.7 M471.8 537.8 L471.8 540.3 M1152.7 723.6 L1152.7 736.9 M1110.2 712.2 L1110.2 724.8 M1071.7 701.8 L1071.7 713.8 M1036.8 692.4 L1036.8 703.9 M1004.9 683.8 L1004.9 694.8 M975.7 676.0 L975.7 686.5 M948.9 668.7 L948.9 678.8 M924.1 662.1 L924.1 671.8 M901.2 655.9 L901.2 665.3 M880.0 650.2 L880.0 659.2 M860.2 644.9 L860.2 653.6 M841.8 639.9 L841.8 648.3 M824.5 635.3 L824.5 643.4 M808.4 630.9 L808.4 638.8 M793.2 626.8 L793.2 634.5 M778.9 623.0 L778.9 630.4 M765.5 619.4 L765.5 626.6 M752.8 615.9 L752.8 622.9 M740.8 612.7 L740.8 619.5 M729.4 609.6 L729.4 616.3 M718.6 606.7 L718.6 613.2 M708.3 604.0 L708.3 610.3 M698.6 601.4 L698.6 607.5 M689.3 598.9 L689.3 604.8 M680.5 596.5 L680.5 602.3 M672.0 594.2 L672.0 599.9 M664.0 592.0 L664.0 597.6 M656.3 590.0 L656.3 595.4 M648.9 588.0 L648.9 593.3 M641.8 586.1 L641.8 591.3 M635.0 584.2 L635.0 589.4 M628.5 582.5 L628.5 587.5 M622.3 580.8 L622.3 585.7 M616.3 579.2 L616.3 584.0 M610.5 577.6 L610.5 582.4 M604.9 576.1 L604.9 580.8 M599.5 574.7 L599.5 579.3 M594.4 573.3 L594.4 577.8 M589.4 572.0 L589.4 576.4 M584.6 570.7 L584.6 575.0 M579.9 569.4 L579.9 573.7 M575.4 568.2 L575.4 572.4 M571.1 567.0 L571.1 571.1 M566.8 565.9 L566.8 569.9 M562.8 564.8 L562.8 568.8 M558.8 563.7 L558.8 567.6 M555.0 562.7 L555.0 566.6 M551.3 561.7 L551.3 565.5 M547.7 560.7 L547.7 564.5 M544.2 559.8 L544.2 563.5 M540.8 558.9 L540.8 562.5 M537.5 558.0 L537.5 561.6 M534.3 557.1 L534.3 560.7 M531.2 556.3 L531.2 559.8 M528.2 555.5 L528.2 558.9 M525.2 554.7 L525.2 558.1 M522.4 553.9 L522.4 557.3 M519.6 553.2 L519.6 556.5 M516.9 552.4 L516.9 555.7 M514.2 551.7 L514.2 554.9 M511.6 551.0 L511.6 554.2 M509.1 550.3 L509.1 553.5 M506.7 549.7 L506.7 552.8 M504.3 549.0 L504.3 552.1 M501.9 548.4 L501.9 551.4 M499.7 547.8 L499.7 550.8 M497.4 547.2 L497.4 550.1 M495.3 546.6 L495.3 549.5 M493.1 546.0 L493.1 548.9 M491.1 545.5 L491.1 548.3 M489.0 544.9 L489.0 547.8 M487.1 544.4 L487.1 547.2 M485.1 543.9 L485.1 546.6 M483.2 543.4 L483.2 546.1 M481.4 542.9 L481.4 545.6 M479.5 542.4 L479.5 545.0 M477.8 541.9 L477.8 544.5 M476.0 541.4 L476.0 544.0 M474.3 541.0 L474.3 543.6 M472.6 540.5 L472.6 543.1 M1130.9 730.7 L1130.9 743.7 M1090.5 719.2 L1090.5 731.5 M1053.8 708.7 L1053.8 720.5 M1020.5 699.2 L1020.5 710.5 M990.0 690.6 L990.0 701.3 M962.0 682.6 L962.0 692.9 M936.3 675.2 L936.3 685.1 M912.5 668.5 L912.5 678.0 M890.4 662.2 L890.4 671.3 M869.9 656.3 L869.9 665.2 M850.8 650.9 L850.8 659.4 M833.0 645.8 L833.0 654.1 M816.3 641.0 L816.3 649.0 M800.7 636.6 L800.7 644.3 M786.0 632.4 L786.0 639.9 M772.1 628.4 L772.1 635.7 M759.0 624.7 L759.0 631.8 M746.7 621.2 L746.7 628.1 M735.0 617.9 L735.0 624.6 M723.9 614.7 L723.9 621.2 M713.4 611.7 L713.4 618.1 M703.4 608.9 L703.4 615.1 M693.9 606.2 L693.9 612.2 M684.9 603.6 L684.9 609.5 M676.2 601.1 L676.2 606.9 M668.0 598.8 L668.0 604.4 M660.1 596.5 L660.1 602.0 M652.5 594.4 L652.5 599.8 M645.3 592.3 L645.3 597.6 M638.4 590.3 L638.4 595.5 M631.7 588.4 L631.7 593.5 M625.4 586.6 L625.4 591.6 M619.2 584.9 L619.2 589.7 M613.3 583.2 L613.3 588.0 M607.7 581.6 L607.7 586.3 M602.2 580.0 L602.2 584.6 M596.9 578.5 L596.9 583.0 M591.8 577.1 L591.8 581.5 M586.9 575.7 L586.9 580.0 M582.2 574.3 L582.2 578.6 M577.6 573.0 L577.6 577.2 M573.2 571.7 L573.2 575.9 M568.9 570.5 L568.9 574.6 M564.8 569.3 L564.8 573.4 M560.8 568.2 L560.8 572.2 M556.9 567.1 L556.9 571.0 M553.1 566.0 L553.1 569.9 M549.5 565.0 L549.5 568.8 M545.9 564.0 L545.9 567.7 M542.5 563.0 L542.5 566.7 M539.1 562.0 L539.1 565.6 M535.9 561.1 L535.9 564.7 M532.7 560.2 L532.7 563.7 M529.7 559.3 L529.7 562.8 M526.7 558.5 L526.7 561.9 M523.8 557.7 L523.8 561.0 M521.0 556.9 L521.0 560.2 M518.2 556.1 L518.2 559.3 M515.5 555.3 L515.5 558.5 M512.9 554.6 L512.9 557.8 M510.4 553.8 L510.4 557.0 M507.9 553.1 L507.9 556.2 M505.5 552.4 L505.5 555.5 M503.1 551.8 L503.1 554.8 M500.8 551.1 L500.8 554.1 M498.5 550.5 L498.5 553.4 M496.3 549.8 L496.3 552.8 M494.2 549.2 L494.2 552.1 M492.1 548.6 L492.1 551.5 M490.0 548.0 L490.0 550.9 M488.0 547.5 L488.0 550.3 M486.1 546.9 L486.1 549.7 M484.2 546.4 L484.2 549.1 M482.3 545.8 L482.3 548.5 M480.4 545.3 L480.4 548.0 M478.6 544.8 L478.6 547.4 M476.9 544.3 L476.9 546.9 M475.2 543.8 L475.2 546.4 M473.5 543.3 L473.5 545.9 M471.8 542.8 L471.8 545.4 M1152.7 750.3 L1152.7 763.6 M1110.2 737.4 L1110.2 750.1 M1071.7 725.9 L1071.7 737.9 M1036.8 715.4 L1036.8 726.8 M1004.9 705.8 L1004.9 716.8 M975.7 697.0 L975.7 707.5 M948.9 688.9 L948.9 699.0 M924.1 681.5 L924.1 691.2 M901.2 674.6 L901.2 683.9 M880.0 668.2 L880.0 677.2 M860.2 662.3 L860.2 670.9 M841.8 656.7 L841.8 665.1 M824.5 651.5 L824.5 659.6 M808.4 646.7 L808.4 654.5 M793.2 642.1 L793.2 649.7 M778.9 637.8 L778.9 645.2 M765.5 633.7 L765.5 640.9 M752.8 629.9 L752.8 636.9 M740.8 626.3 L740.8 633.1 M729.4 622.9 L729.4 629.5 M718.6 619.6 L718.6 626.1 M708.3 616.6 L708.3 622.8 M698.6 613.6 L698.6 619.8 M689.3 610.8 L689.3 616.8 M680.5 608.2 L680.5 614.0 M672.0 605.6 L672.0 611.3 M664.0 603.2 L664.0 608.8 M656.3 600.9 L656.3 606.3 M648.9 598.7 L648.9 604.0 M641.8 596.5 L641.8 601.8 M635.0 594.5 L635.0 599.6 M628.5 592.5 L628.5 597.6 M622.3 590.7 L622.3 595.6 M616.3 588.8 L616.3 593.7 M610.5 587.1 L610.5 591.8 M604.9 585.4 L604.9 590.1 M599.5 583.8 L599.5 588.4 M594.4 582.3 L594.4 586.7 M589.4 580.8 L589.4 585.2 M584.6 579.3 L584.6 583.6 M579.9 577.9 L579.9 582.2 M575.4 576.6 L575.4 580.7 M571.1 575.2 L571.1 579.4 M566.8 574.0 L566.8 578.0 M562.8 572.8 L562.8 576.7 M558.8 571.6 L558.8 575.5 M555.0 570.4 L555.0 574.3 M551.3 569.3 L551.3 573.1 M547.7 568.2 L547.7 572.0 M544.2 567.2 L544.2 570.9 M540.8 566.1 L540.8 569.8 M537.5 565.2 L537.5 568.7 M534.3 564.2 L534.3 567.7 M531.2 563.3 L531.2 566.7 M528.2 562.3 L528.2 565.8 M525.2 561.5 L525.2 564.8 M522.4 560.6 L522.4 563.9 M519.6 559.8 L519.6 563.1 M516.9 558.9 L516.9 562.2 M514.2 558.1 L514.2 561.4 M511.6 557.4 L511.6 560.5 M509.1 556.6 L509.1 559.7 M506.7 555.9 L506.7 559.0 M504.3 555.2 L504.3 558.2 M501.9 554.4 L501.9 557.5 M499.7 553.8 L499.7 556.7 M497.4 553.1 L497.4 556.0 M495.3 552.4 L495.3 555.4 M493.1 551.8 L493.1 554.7 M491.1 551.2 L491.1 554.0 M489.0 550.6 L489.0 553.4 M487.1 550.0 L487.1 552.8 M485.1 549.4 L485.1 552.1 M483.2 548.8 L483.2 551.5 M481.4 548.3 L481.4 551.0 M479.5 547.7 L479.5 550.4 M477.8 547.2 L477.8 549.8 M476.0 546.7 L476.0 549.3 M474.3 546.1 L474.3 548.7 M472.6 545.6 L472.6 548.2 M1130.9 756.7 L1130.9 769.6 M1090.5 743.8 L1090.5 756.2 M1053.8 732.2 L1053.8 744.0 M1020.5 721.7 L1020.5 732.9 M990.0 712.0 L990.0 722.8 M962.0 703.2 L962.0 713.5 M936.3 695.0 L936.3 704.9 M912.5 687.5 L912.5 697.0 M890.4 680.5 L890.4 689.7 M869.9 674.0 L869.9 682.9 M850.8 668.0 L850.8 676.5 M833.0 662.3 L833.0 670.6 M816.3 657.0 L816.3 665.0 M800.7 652.1 L800.7 659.8 M786.0 647.4 L786.0 654.9 M772.1 643.0 L772.1 650.3 M759.0 638.9 L759.0 646.0 M746.7 635.0 L746.7 641.9 M735.0 631.3 L735.0 638.0 M723.9 627.8 L723.9 634.3 M713.4 624.4 L713.4 630.8 M703.4 621.3 L703.4 627.5 M693.9 618.3 L693.9 624.3 M684.9 615.4 L684.9 621.3 M676.2 612.7 L676.2 618.4 M668.0 610.0 L668.0 615.7 M660.1 607.6 L660.1 613.1 M652.5 605.2 L652.5 610.6 M645.3 602.9 L645.3 608.2 M638.4 600.7 L638.4 605.9 M631.7 598.6 L631.7 603.7 M625.4 596.6 L625.4 601.5 M619.2 594.6 L619.2 599.5 M613.3 592.7 L613.3 597.5 M607.7 591.0 L607.7 595.6 M602.2 589.2 L602.2 593.8 M596.9 587.6 L596.9 592.1 M591.8 585.9 L591.8 590.4 M586.9 584.4 L586.9 588.8 M582.2 582.9 L582.2 587.2 M577.6 581.4 L577.6 585.7 M573.2 580.0 L573.2 584.2 M568.9 578.7 L568.9 582.8 M564.8 577.4 L564.8 581.4 M560.8 576.1 L560.8 580.1 M556.9 574.9 L556.9 578.8 M553.1 573.7 L553.1 577.5 M549.5 572.5 L549.5 576.3 M545.9 571.4 L545.9 575.1 M542.5 570.3 L542.5 574.0 M539.1 569.3 L539.1 572.9 M535.9 568.2 L535.9 571.8 M532.7 567.2 L532.7 570.7 M529.7 566.3 L529.7 569.7 M526.7 565.3 L526.7 568.7 M523.8 564.4 L523.8 567.8 M521.0 563.5 L521.0 566.8 M518.2 562.6 L518.2 565.9 M515.5 561.8 L515.5 565.0 M512.9 560.9 L512.9 564.1 M510.4 560.1 L510.4 563.3 M507.9 559.4 L507.9 562.5 M505.5 558.6 L505.5 561.7 M503.1 557.8 L503.1 560.9 M500.8 557.1 L500.8 560.1 M498.5 556.4 L498.5 559.4 M496.3 555.7 L496.3 558.6 M494.2 555.0 L494.2 557.9 M492.1 554.4 L492.1 557.2 M490.0 553.7 L490.0 556.5 M488.0 553.1 L488.0 555.9 M486.1 552.4 L486.1 555.2 M484.2 551.8 L484.2 554.6 M482.3 551.2 L482.3 554.0 M480.4 550.7 L480.4 553.3 M478.6 550.1 L478.6 552.7 M476.9 549.5 L476.9 552.2 M475.2 549.0 L475.2 551.6 M473.5 548.5 L473.5 551.0 M471.8 547.9 L471.8 550.5 M1152.7 776.9 L1152.7 790.2 M1110.2 762.7 L1110.2 775.4 M1071.7 749.9 L1071.7 762.0 M1036.8 738.3 L1036.8 749.8 M1004.9 727.7 L1004.9 738.7 M975.7 718.0 L975.7 728.5 M948.9 709.1 L948.9 719.2 M924.1 700.9 L924.1 710.6 M901.2 693.3 L901.2 702.6 M880.0 686.2 L880.0 695.2 M860.2 679.6 L860.2 688.3 M841.8 673.5 L841.8 681.9 M824.5 667.8 L824.5 675.9 M808.4 662.4 L808.4 670.3 M793.2 657.3 L793.2 665.0 M778.9 652.6 L778.9 660.0 M765.5 648.1 L765.5 655.3 M752.8 643.9 L752.8 650.9 M740.8 639.9 L740.8 646.7 M729.4 636.1 L729.4 642.7 M718.6 632.5 L718.6 639.0 M708.3 629.1 L708.3 635.4 M698.6 625.9 L698.6 632.0 M689.3 622.8 L689.3 628.8 M680.5 619.9 L680.5 625.7 M672.0 617.1 L672.0 622.8 M664.0 614.4 L664.0 620.0 M656.3 611.8 L656.3 617.3 M648.9 609.4 L648.9 614.7 M641.8 607.0 L641.8 612.2 M635.0 604.7 L635.0 609.9 M628.5 602.6 L628.5 607.6 M622.3 600.5 L622.3 605.4 M616.3 598.5 L616.3 603.3 M610.5 596.6 L610.5 601.3 M604.9 594.7 L604.9 599.4 M599.5 592.9 L599.5 597.5 M594.4 591.2 L594.4 595.7 M589.4 589.6 L589.4 594.0 M584.6 588.0 L584.6 592.3 M579.9 586.4 L579.9 590.7 M575.4 584.9 L575.4 589.1 M571.1 583.5 L571.1 587.6 M566.8 582.1 L566.8 586.1 M562.8 580.7 L562.8 584.7 M558.8 579.4 L558.8 583.3 M555.0 578.1 L555.0 582.0 M551.3 576.9 L551.3 580.7 M547.7 575.7 L547.7 579.4 M544.2 574.5 L544.2 578.2 M540.8 573.4 L540.8 577.0 M537.5 572.3 L537.5 575.9 M534.3 571.3 L534.3 574.8 M531.2 570.2 L531.2 573.7 M528.2 569.2 L528.2 572.6 M525.2 568.2 L525.2 571.6 M522.4 567.3 L522.4 570.6 M519.6 566.4 L519.6 569.7 M516.9 565.5 L516.9 568.7 M514.2 564.6 L514.2 567.8 M511.6 563.7 L511.6 566.9 M509.1 562.9 L509.1 566.0 M506.7 562.1 L506.7 565.2 M504.3 561.3 L504.3 564.3 M501.9 560.5 L501.9 563.5 M499.7 559.7 L499.7 562.7 M497.4 559.0 L497.4 561.9 M495.3 558.3 L495.3 561.2 M493.1 557.6 L493.1 560.4 M491.1 556.9 L491.1 559.7 M489.0 556.2 L489.0 559.0 M487.1 555.5 L487.1 558.3 M485.1 554.9 L485.1 557.6 M483.2 554.3 L483.2 557.0 M481.4 553.6 L481.4 556.3 M479.5 553.0 L479.5 555.7 M477.8 552.5 L477.8 555.1 M476.0 551.9 L476.0 554.5 M474.3 551.3 L474.3 553.9 M472.6 550.8 L472.6 553.3 M1130.9 782.6 L1130.9 795.6 M1090.5 768.5 L1090.5 780.8 M1053.8 755.7 L1053.8 767.5 M1020.5 744.1 L1020.5 755.4 M990.0 733.5 L990.0 744.3 M962.0 723.8 L962.0 734.1 M936.3 714.8 L936.3 724.7 M912.5 706.5 L912.5 716.0 M890.4 698.8 L890.4 708.0 M869.9 691.7 L869.9 700.5 M850.8 685.0 L850.8 693.6 M833.0 678.8 L833.0 687.1 M816.3 673.0 L816.3 681.0 M800.7 667.6 L800.7 675.3 M786.0 662.4 L786.0 670.0 M772.1 657.6 L772.1 664.9 M759.0 653.1 L759.0 660.1 M746.7 648.8 L746.7 655.7 M735.0 644.7 L735.0 651.4 M723.9 640.8 L723.9 647.4 M713.4 637.2 L713.4 643.5 M703.4 633.7 L703.4 639.9 M693.9 630.4 L693.9 636.4 M684.9 627.2 L684.9 633.1 M676.2 624.2 L676.2 630.0 M668.0 621.3 L668.0 627.0 M660.1 618.6 L660.1 624.1 M652.5 616.0 L652.5 621.4 M645.3 613.5 L645.3 618.7 M638.4 611.0 L638.4 616.2 M631.7 608.7 L631.7 613.8 M625.4 606.5 L625.4 611.5 M619.2 604.4 L619.2 609.2 M613.3 602.3 L613.3 607.1 M607.7 600.3 L607.7 605.0 M602.2 598.4 L602.2 603.0 M596.9 596.6 L596.9 601.1 M591.8 594.8 L591.8 599.3 M586.9 593.1 L586.9 597.5 M582.2 591.5 L582.2 595.8 M577.6 589.9 L577.6 594.1 M573.2 588.3 L573.2 592.5 M568.9 586.8 L568.9 590.9 M564.8 585.4 L564.8 589.4 M560.8 584.0 L560.8 588.0 M556.9 582.7 L556.9 586.5 M553.1 581.3 L553.1 585.2 M549.5 580.1 L549.5 583.8 M545.9 578.8 L545.9 582.5 M542.5 577.6 L542.5 581.3 M539.1 576.5 L539.1 580.1 M535.9 575.3 L535.9 578.9 M532.7 574.2 L532.7 577.7 M529.7 573.2 L529.7 576.6 M526.7 572.1 L526.7 575.5 M523.8 571.1 L523.8 574.5 M521.0 570.1 L521.0 573.5 M518.2 569.2 L518.2 572.5 M515.5 568.2 L515.5 571.5 M512.9 567.3 L512.9 570.5 M510.4 566.4 L510.4 569.6 M507.9 565.6 L507.9 568.7 M505.5 564.7 L505.5 567.8 M503.1 563.9 L503.1 567.0 M500.8 563.1 L500.8 566.1 M498.5 562.3 L498.5 565.3 M496.3 561.6 L496.3 564.5 M494.2 560.8 L494.2 563.7 M492.1 560.1 L492.1 562.9 M490.0 559.4 L490.0 562.2 M488.0 558.7 L488.0 561.5 M486.1 558.0 L486.1 560.8 M484.2 557.3 L484.2 560.1 M482.3 556.7 L482.3 559.4 M480.4 556.0 L480.4 558.7 M478.6 555.4 L478.6 558.0 M476.9 554.8 L476.9 557.4 M475.2 554.2 L475.2 556.8 M473.5 553.6 L473.5 556.2 M471.8 553.0 L471.8 555.6 M1152.7 803.5 L1152.7 816.8 M1110.2 788.0 L1110.2 800.7 M1071.7 774.0 L1071.7 786.0 M1036.8 761.3 L1036.8 772.8 M1004.9 749.7 L1004.9 760.7 M975.7 739.1 L975.7 749.6 M948.9 729.3 L948.9 739.4 M924.1 720.3 L924.1 730.0 M901.2 711.9 L901.2 721.3 M880.0 704.2 L880.0 713.2 M860.2 697.0 L860.2 705.7 M841.8 690.3 L841.8 698.7 M824.5 684.0 L824.5 692.1 M808.4 678.1 L808.4 686.0 M793.2 672.6 L793.2 680.2 M778.9 667.4 L778.9 674.8 M765.5 662.5 L765.5 669.7 M752.8 657.9 L752.8 664.9 M740.8 653.5 L740.8 660.3 M729.4 649.4 L729.4 656.0 M718.6 645.4 L718.6 651.9 M708.3 641.7 L708.3 648.0 M698.6 638.1 L698.6 644.3 M689.3 634.8 L689.3 640.8 M680.5 631.5 L680.5 637.4 M672.0 628.5 L672.0 634.2 M664.0 625.5 L664.0 631.1 M656.3 622.7 L656.3 628.2 M648.9 620.0 L648.9 625.4 M641.8 617.5 L641.8 622.7 M635.0 615.0 L635.0 620.1 M628.5 612.6 L628.5 617.6 M622.3 610.3 L622.3 615.3 M616.3 608.2 L616.3 613.0 M610.5 606.1 L610.5 610.8 M604.9 604.0 L604.9 608.7 M599.5 602.1 L599.5 606.6 M594.4 600.2 L594.4 604.7 M589.4 598.4 L589.4 602.8 M584.6 596.6 L584.6 600.9 M579.9 594.9 L579.9 599.2 M575.4 593.3 L575.4 597.5 M571.1 591.7 L571.1 595.8 M566.8 590.2 L566.8 594.2 M562.8 588.7 L562.8 592.7 M558.8 587.2 L558.8 591.2 M555.0 585.9 L555.0 589.7 M551.3 584.5 L551.3 588.3 M547.7 583.2 L547.7 586.9 M544.2 581.9 L544.2 585.6 M540.8 580.7 L540.8 584.3 M537.5 579.5 L537.5 583.1 M534.3 578.3 L534.3 581.9 M531.2 577.2 L531.2 580.7 M528.2 576.1 L528.2 579.5 M525.2 575.0 L525.2 578.4 M522.4 574.0 L522.4 577.3 M519.6 573.0 L519.6 576.3 M516.9 572.0 L516.9 575.2 M514.2 571.0 L514.2 574.2 M511.6 570.1 L511.6 573.2 M509.1 569.1 L509.1 572.3 M506.7 568.3 L506.7 571.3 M504.3 567.4 L504.3 570.4 M501.9 566.5 L501.9 569.6 M499.7 565.7 L499.7 568.7 M497.4 564.9 L497.4 567.8 M495.3 564.1 L495.3 567.0 M493.1 563.3 L493.1 566.2 M491.1 562.6 L491.1 565.4 M489.0 561.8 L489.0 564.6 M487.1 561.1 L487.1 563.9 M485.1 560.4 L485.1 563.2 M483.2 559.7 L483.2 562.4 M481.4 559.0 L481.4 561.7 M479.5 558.4 L479.5 561.0 M477.8 557.7 L477.8 560.4 M476.0 557.1 L476.0 559.7 M474.3 556.5 L474.3 559.1 M472.6 555.9 L472.6 558.4 M1130.9 808.5 L1130.9 821.5 M1090.5 793.2 L1090.5 805.5 M1053.8 779.2 L1053.8 791.0 M1020.5 766.6 L1020.5 777.8 M990.0 755.0 L990.0 765.7 M962.0 744.4 L962.0 754.7 M936.3 734.6 L936.3 744.5 M912.5 725.5 L912.5 735.1 M890.4 717.2 L890.4 726.3 M869.9 709.4 L869.9 718.2 M850.8 702.1 L850.8 710.7 M833.0 695.3 L833.0 703.6 M816.3 689.0 L816.3 697.0 M800.7 683.1 L800.7 690.8 M786.0 677.5 L786.0 685.0 M772.1 672.2 L772.1 679.5 M759.0 667.2 L759.0 674.3 M746.7 662.5 L746.7 669.4 M735.0 658.1 L735.0 664.8 M723.9 653.9 L723.9 660.4 M713.4 649.9 L713.4 656.3 M703.4 646.1 L703.4 652.3 M693.9 642.5 L693.9 648.5 M684.9 639.0 L684.9 645.0 M676.2 635.8 L676.2 641.5 M668.0 632.6 L668.0 638.3 M660.1 629.6 L660.1 635.2 M652.5 626.8 L652.5 632.2 M645.3 624.0 L645.3 629.3 M638.4 621.4 L638.4 626.6 M631.7 618.9 L631.7 623.9 M625.4 616.4 L625.4 621.4 M619.2 614.1 L619.2 619.0 M613.3 611.9 L613.3 616.7 M607.7 609.7 L607.7 614.4 M602.2 607.6 L602.2 612.3 M596.9 605.6 L596.9 610.2 M591.8 603.7 L591.8 608.2 M586.9 601.8 L586.9 606.2 M582.2 600.1 L582.2 604.3 M577.6 598.3 L577.6 602.5 M573.2 596.6 L573.2 600.8 M568.9 595.0 L568.9 599.1 M564.8 593.4 L564.8 597.4 M560.8 591.9 L560.8 595.9 M556.9 590.4 L556.9 594.3 M553.1 589.0 L553.1 592.8 M549.5 587.6 L549.5 591.4 M545.9 586.3 L545.9 590.0 M542.5 585.0 L542.5 588.6 M539.1 583.7 L539.1 587.3 M535.9 582.5 L535.9 586.0 M532.7 581.3 L532.7 584.8 M529.7 580.1 L529.7 583.5 M526.7 579.0 L526.7 582.4 M523.8 577.9 L523.8 581.2 M521.0 576.8 L521.0 580.1 M518.2 575.7 L518.2 579.0 M515.5 574.7 L515.5 577.9 M512.9 573.7 L512.9 576.9 M510.4 572.8 L510.4 575.9 M507.9 571.8 L507.9 574.9 M505.5 570.9 L505.5 574.0 M503.1 570.0 L503.1 573.0 M500.8 569.1 L500.8 572.1 M498.5 568.3 L498.5 571.2 M496.3 567.4 L496.3 570.4 M494.2 566.6 L494.2 569.5 M492.1 565.8 L492.1 568.7 M490.0 565.0 L490.0 567.9 M488.0 564.3 L488.0 567.1 M486.1 563.5 L486.1 566.3 M484.2 562.8 L484.2 565.5 M482.3 562.1 L482.3 564.8 M480.4 561.4 L480.4 564.1 M478.6 560.7 L478.6 563.4 M476.9 560.0 L476.9 562.7 M475.2 559.4 L475.2 562.0 M473.5 558.7 L473.5 561.3 M471.8 558.1 L471.8 560.7 M1152.7 830.1 L1152.7 843.4 M1110.2 813.3 L1110.2 825.9 M1071.7 798.1 L1071.7 810.1 M1036.8 784.2 L1036.8 795.7 M1004.9 771.6 L1004.9 782.6 M975.7 760.1 L975.7 770.6 M948.9 749.5 L948.9 759.6 M924.1 739.7 L924.1 749.4 M901.2 730.6 L901.2 739.9 M880.0 722.2 L880.0 731.2 M860.2 714.4 L860.2 723.1 M841.8 707.1 L841.8 715.5 M824.5 700.2 L824.5 708.4 M808.4 693.9 L808.4 701.7 M793.2 687.8 L793.2 695.5 M778.9 682.2 L778.9 689.6 M765.5 676.9 L765.5 684.1 M752.8 671.8 L752.8 678.8 M740.8 667.1 L740.8 673.9 M729.4 662.6 L729.4 669.2 M718.6 658.3 L718.6 664.8 M708.3 654.3 L708.3 660.5 M698.6 650.4 L698.6 656.5 M689.3 646.7 L689.3 652.7 M680.5 643.2 L680.5 649.1 M672.0 639.9 L672.0 645.6 M664.0 636.7 L664.0 642.3 M656.3 633.7 L656.3 639.1 M648.9 630.7 L648.9 636.1 M641.8 627.9 L641.8 633.2 M635.0 625.2 L635.0 630.4 M628.5 622.7 L628.5 627.7 M622.3 620.2 L622.3 625.1 M616.3 617.8 L616.3 622.6 M610.5 615.5 L610.5 620.3 M604.9 613.3 L604.9 618.0 M599.5 611.2 L599.5 615.8 M594.4 609.2 L594.4 613.6 M589.4 607.2 L589.4 611.6 M584.6 605.3 L584.6 609.6 M579.9 603.4 L579.9 607.7 M575.4 601.6 L575.4 605.8 M571.1 599.9 L571.1 604.0 M566.8 598.3 L566.8 602.3 M562.8 596.6 L562.8 600.6 M558.8 595.1 L558.8 599.0 M555.0 593.6 L555.0 597.4 M551.3 592.1 L551.3 595.9 M547.7 590.7 L547.7 594.4 M544.2 589.3 L544.2 593.0 M540.8 588.0 L540.8 591.6 M537.5 586.6 L537.5 590.2 M534.3 585.4 L534.3 588.9 M531.2 584.2 L531.2 587.6 M528.2 583.0 L528.2 586.4 M525.2 581.8 L525.2 585.2 M522.4 580.7 L522.4 584.0 M519.6 579.6 L519.6 582.9 M516.9 578.5 L516.9 581.7 M514.2 577.4 L514.2 580.6 M511.6 576.4 L511.6 579.6 M509.1 575.4 L509.1 578.5 M506.7 574.4 L506.7 577.5 M504.3 573.5 L504.3 576.6 M501.9 572.6 L501.9 575.6 M499.7 571.7 L499.7 574.7 M497.4 570.8 L497.4 573.7 M495.3 569.9 L495.3 572.8 M493.1 569.1 L493.1 572.0 M491.1 568.3 L491.1 571.1 M489.0 567.5 L489.0 570.3 M487.1 566.7 L487.1 569.5 M485.1 565.9 L485.1 568.7 M483.2 565.2 L483.2 567.9 M481.4 564.4 L481.4 567.1 M479.5 563.7 L479.5 566.4 M477.8 563.0 L477.8 565.6 M476.0 562.3 L476.0 564.9 M474.3 561.6 L474.3 564.2 M472.6 561.0 L472.6 563.5 M1130.9 834.5 L1130.9 847.4 M1090.5 817.8 L1090.5 830.2 M1053.8 802.7 L1053.8 814.5 M1020.5 789.0 L1020.5 800.2 M990.0 776.5 L990.0 787.2 M962.0 765.0 L962.0 775.3 M936.3 754.4 L936.3 764.3 M912.5 744.6 L912.5 754.1 M890.4 735.5 L890.4 744.7 M869.9 727.1 L869.9 735.9 M850.8 719.2 L850.8 727.7 M833.0 711.9 L833.0 720.1 M816.3 705.0 L816.3 713.0 M800.7 698.5 L800.7 706.3 M786.0 692.5 L786.0 700.0 M772.1 686.8 L772.1 694.1 M759.0 681.4 L759.0 688.5 M746.7 676.3 L746.7 683.2 M735.0 671.5 L735.0 678.2 M723.9 667.0 L723.9 673.5 M713.4 662.6 L713.4 669.0 M703.4 658.5 L703.4 664.7 M693.9 654.6 L693.9 660.7 M684.9 650.9 L684.9 656.8 M676.2 647.3 L676.2 653.1 M668.0 643.9 L668.0 649.6 M660.1 640.7 L660.1 646.2 M652.5 637.6 L652.5 643.0 M645.3 634.6 L645.3 639.9 M638.4 631.8 L638.4 636.9 M631.7 629.0 L631.7 634.1 M625.4 626.4 L625.4 631.4 M619.2 623.9 L619.2 628.7 M613.3 621.4 L613.3 626.2 M607.7 619.1 L607.7 623.8 M602.2 616.9 L602.2 621.5 M596.9 614.7 L596.9 619.2 M591.8 612.6 L591.8 617.0 M586.9 610.6 L586.9 614.9 M582.2 608.6 L582.2 612.9 M577.6 606.7 L577.6 611.0 M573.2 604.9 L573.2 609.1 M568.9 603.2 L568.9 607.2 M564.8 601.5 L564.8 605.5 M560.8 599.8 L560.8 603.8 M556.9 598.2 L556.9 602.1 M553.1 596.7 L553.1 600.5 M549.5 595.2 L549.5 598.9 M545.9 593.7 L545.9 597.4 M542.5 592.3 L542.5 595.9 M539.1 590.9 L539.1 594.5 M535.9 589.6 L535.9 593.1 M532.7 588.3 L532.7 591.8 M529.7 587.0 L529.7 590.5 M526.7 585.8 L526.7 589.2 M523.8 584.6 L523.8 587.9 M521.0 583.4 L521.0 586.7 M518.2 582.3 L518.2 585.6 M515.5 581.2 L515.5 584.4 M512.9 580.1 L512.9 583.3 M510.4 579.1 L510.4 582.2 M507.9 578.0 L507.9 581.2 M505.5 577.0 L505.5 580.1 M503.1 576.1 L503.1 579.1 M500.8 575.1 L500.8 578.1 M498.5 574.2 L498.5 577.2 M496.3 573.3 L496.3 576.2 M494.2 572.4 L494.2 575.3 M492.1 571.5 L492.1 574.4 M490.0 570.7 L490.0 573.5 M488.0 569.9 L488.0 572.7 M486.1 569.1 L486.1 571.8 M484.2 568.3 L484.2 571.0 M482.3 567.5 L482.3 570.2 M480.4 566.7 L480.4 569.4 M478.6 566.0 L478.6 568.7 M476.9 565.3 L476.9 567.9 M475.2 564.6 L475.2 567.2 M473.5 563.9 L473.5 566.4 M471.8 563.2 L471.8 565.7 M1152.7 856.8 L1152.7 870.1 M1110.2 838.6 L1110.2 851.2 M1071.7 822.1 L1071.7 834.2 M1036.8 807.2 L1036.8 818.7 M1004.9 793.6 L1004.9 804.6 M975.7 781.1 L975.7 791.6 M948.9 769.6 L948.9 779.7 M924.1 759.1 L924.1 768.8 M901.2 749.3 L901.2 758.6 M880.0 740.2 L880.0 749.2 M860.2 731.7 L860.2 740.4 M841.8 723.9 L841.8 732.3 M824.5 716.5 L824.5 724.6 M808.4 709.6 L808.4 717.5 M793.2 703.1 L793.2 710.7 M778.9 697.0 L778.9 704.4 M765.5 691.2 L765.5 698.4 M752.8 685.8 L752.8 692.8 M740.8 680.7 L740.8 687.5 M729.4 675.8 L729.4 682.4 M718.6 671.2 L718.6 677.7 M708.3 666.8 L708.3 673.1 M698.6 662.7 L698.6 668.8 M689.3 658.7 L689.3 664.7 M680.5 654.9 L680.5 660.8 M672.0 651.3 L672.0 657.0 M664.0 647.9 L664.0 653.5 M656.3 644.6 L656.3 650.0 M648.9 641.4 L648.9 646.8 M641.8 638.4 L641.8 643.6 M635.0 635.5 L635.0 640.6 M628.5 632.7 L628.5 637.7 M622.3 630.0 L622.3 635.0 M616.3 627.5 L616.3 632.3 M610.5 625.0 L610.5 629.7 M604.9 622.6 L604.9 627.3 M599.5 620.3 L599.5 624.9 M594.4 618.1 L594.4 622.6 M589.4 616.0 L589.4 620.4 M584.6 613.9 L584.6 618.2 M579.9 611.9 L579.9 616.2 M575.4 610.0 L575.4 614.2 M571.1 608.2 L571.1 612.3 M566.8 606.4 L566.8 610.4 M562.8 604.6 L562.8 608.6 M558.8 602.9 L558.8 606.8 M555.0 601.3 L555.0 605.1 M551.3 599.7 L551.3 603.5 M547.7 598.2 L547.7 601.9 M544.2 596.7 L544.2 600.4 M540.8 595.2 L540.8 598.9 M537.5 593.8 L537.5 597.4 M534.3 592.4 L534.3 596.0 M531.2 591.1 L531.2 594.6 M528.2 589.8 L528.2 593.3 M525.2 588.6 L525.2 592.0 M522.4 587.3 L522.4 590.7 M519.6 586.1 L519.6 589.4 M516.9 585.0 L516.9 588.2 M514.2 583.9 L514.2 587.1 M511.6 582.8 L511.6 585.9 M509.1 581.7 L509.1 584.8 M506.7 580.6 L506.7 583.7 M504.3 579.6 L504.3 582.7 M501.9 578.6 L501.9 581.6 M499.7 577.6 L499.7 580.6 M497.4 576.7 L497.4 579.6 M495.3 575.8 L495.3 578.7 M493.1 574.8 L493.1 577.7 M491.1 574.0 L491.1 576.8 M489.0 573.1 L489.0 575.9 M487.1 572.2 L487.1 575.0 M485.1 571.4 L485.1 574.2 M483.2 570.6 L483.2 573.3 M481.4 569.8 L481.4 572.5 M479.5 569.0 L479.5 571.7 M477.8 568.3 L477.8 570.9 M476.0 567.5 L476.0 570.1 M474.3 566.8 L474.3 569.4 M472.6 566.1 L472.6 568.6" stroke="#d6d6d6" stroke-width="0.9" fill="none" shape-rendering="crispEdges"/>
<path d="M262.5 724 L272.8 663.1 L380.3 653.2 M380.3 607.8 L592 593.5 M602 593.5 L914.6 699.1 M960.8 715.9 L985 724" fill="none" stroke="#111" stroke-width="1.4"/>
<path d="M272.5 338.0 L272.5 663.1" stroke="#111" stroke-width="1.3" fill="none"/>
<path d="M380.5 346.3 L380.5 653.2" stroke="#111" stroke-width="1.3" fill="none"/>
<path d="M592.0 409.0 L602.0 407.0 L602.0 594.5 L592.0 594.5Z" fill="#a7a99d"/>
<path d="M592.5 409.0 L592.5 594.0" stroke="#222" stroke-width="1" fill="none"/>
<path d="M234.0 402.0 L242.5 412.5 L242.5 724.0 L234.0 724.0Z" fill="#f0f0f0"/>
<path d="M235.4 404.0 L241.5 411.5 L241.5 724.0 L235.4 724.0Z" fill="#9c4e2c"/>
<path d="M242.2 412.0 L242.2 724.0" stroke="#111" stroke-width="1.4" fill="none"/>
<path d="M235.4 404 L242.5 413 M235.4 410 L242 418" fill="none" stroke="#111" stroke-width="0.8"/>
<path d="M592.0 400.0 L754.6 348.1 L754.6 344.4 L1043.0 249.3 L1043.0 298.0 L592.0 409.0Z" fill="#5b5b5b" stroke="#111" stroke-width="1" stroke-linejoin="round"/>
<path d="M592.0 408.0 L1043.0 283.0" stroke="#111" stroke-width="1" fill="none"/>
<path d="M746.0 350.5 L754.6 348.1 L754.6 365.3 L746.0 367.0Z" fill="#5b5b5b" stroke="#111" stroke-width="0.8" stroke-linejoin="round"/>
<path d="M768.0 363.0 L800.0 356.0 L812.0 357.0 L790.0 364.0 L770.0 366.0Z" fill="#111"/>
<path d="M914.6 329.6 L960.8 318.2 L960.8 715.9 L947.0 719.3 L945.7 719.3 L914.6 708.3Z" fill="#a7a89e"/>
<path d="M946.3 321.0 L946.3 719.0" stroke="#111" stroke-width="1.6" fill="none"/>
<path d="M915.0 580.0 L915.0 708.0" stroke="#222" stroke-width="1" fill="none"/>
<path d="M609.3 474.7 L703.9 469.4 L704.5 550.2 L609.3 536.7Z" fill="#151515"/>
<path d="M611.8 475.9 L702.6 470.7 L702.6 548.6 L611.8 537.6Z" fill="#8b6943"/>
<path d="M615.4 478.6 L626.6 478.4 L626.6 533.7 L615.4 535.6Z" fill="#97754f"/>
<path d="M626.6 478.4 L702.4 475.1 L702.4 543.4 L626.6 533.7Z" fill="#f7f9f9"/>
<path d="M614 478.6 L702.4 474.6 M614 535.8 L702.4 544.6 M612 538 L703 548.2" fill="none" stroke="#111" stroke-width="1"/>
<path d="M703.6 470 V550.2 M610.6 475 V537" fill="none" stroke="#111" stroke-width="1.8"/>
<path d="M611.0 476.0 L615.4 477.0 L615.4 536.0 L611.0 537.0Z" fill="#111"/>
<path d="M727.2 468.0 L915.2 458.0 L915.2 580.2 L727.2 553.3Z" fill="#151515"/>
<path d="M729.6 469.2 L915.0 459.3 L915.0 578.6 L729.6 554.0Z" fill="#8b6943"/>
<path d="M734.0 472.0 L749.6 473.2 L749.6 550.0 L734.0 550.5Z" fill="#97754f"/>
<path d="M749.6 473.2 L915.0 465.8 L915.0 571.2 L749.6 550.0Z" fill="#f7f9f9"/>
<path d="M731 472.3 L915 463.6 M731 551.5 L915 573.2 M730 554.5 L915 578.6" fill="none" stroke="#111" stroke-width="1"/>
<path d="M728.4 468.5 V553.6" fill="none" stroke="#111" stroke-width="2.2"/>
<path d="M731.4 471 V552" fill="none" stroke="#111" stroke-width="1"/>
<path d="M992.0 452.8 L1043.0 450.6 L1043.0 599.6 L992.0 594.2Z" fill="#8b6943" stroke="#111" stroke-width="1" stroke-linejoin="round"/>
<path d="M998.0 456.5 L1043.0 454.5 L1043.0 595.5 L998.0 590.5Z" fill="#8b6943" stroke="#111" stroke-width="1" stroke-linejoin="round"/>
<path d="M1003.0 458.5 L1043.0 457.0 L1043.0 592.0 L1003.0 588.0Z" fill="#111"/>
<path d="M1005.0 459.5 L1022.6 460.0 L1022.6 588.8 L1005.0 587.5Z" fill="#97754f"/>
<path d="M1022.6 460.0 L1043.0 459.0 L1043.0 589.5 L1022.6 588.8Z" fill="#f7f9f9"/>
<path d="M1022.6 460 V589" fill="none" stroke="#111" stroke-width="0.8"/>
<path d="M602.5 275.5 L618.2 263.7 L618.2 308.2 L590.7 324.6 L590.7 313.0Z" fill="#e9e1e0" stroke="#111" stroke-width="1" stroke-linejoin="round"/>
<path d="M618.2 308.2 L684.3 316.1 L653.5 331.1 L590.7 324.6Z" fill="#e9e1e0" stroke="#111" stroke-width="1" stroke-linejoin="round"/>
<path d="M618.2 263.7 L684.3 273.3 L684.3 316.1 L618.2 308.2Z" fill="#e9e1e0" stroke="#111" stroke-width="1" stroke-linejoin="round"/>
<path d="M606 320 q10 -7 26 -5 M630 327 q14 1 24 -6" fill="none" stroke="#111" stroke-width="3.2"/>
<path d="M612 322 q12 4 26 3 M624 315 q12 -1 22 3" fill="none" stroke="#333" stroke-width="0.8"/>
<path d="M506.0 345.2 L513.6 339.9 L513.6 369.6 L501.0 376.0Z" fill="#e9e1e0" stroke="#111" stroke-width="1" stroke-linejoin="round"/>
<path d="M513.6 369.6 L562.3 371.3 L547.2 379.7 L501.0 376.0Z" fill="#e9e1e0" stroke="#111" stroke-width="1" stroke-linejoin="round"/>
<path d="M513.6 339.9 L562.3 344.1 L562.3 371.3 L513.6 369.6Z" fill="#e9e1e0" stroke="#111" stroke-width="1" stroke-linejoin="round"/>
<path d="M516 374.5 q8 -3 18 -2 M528 377 q10 0 17 -3" fill="none" stroke="#111" stroke-width="2.4"/>
<path d="M455.0 382.0 L461.4 377.2 L461.4 399.1 L453.8 403.3Z" fill="#e9e1e0" stroke="#111" stroke-width="1" stroke-linejoin="round"/>
<path d="M461.4 399.1 L498.4 400.8 L486.6 405.8 L453.8 403.3Z" fill="#e9e1e0" stroke="#111" stroke-width="1" stroke-linejoin="round"/>
<path d="M461.4 377.2 L498.4 379.2 L498.4 400.8 L461.4 399.1Z" fill="#e9e1e0" stroke="#111" stroke-width="1" stroke-linejoin="round"/>
<path d="M463 402 q8 -2 14 -1 M474 404 q6 0 10 -2" fill="none" stroke="#111" stroke-width="2"/>
<path d="M826.9 181.0 L982.2 181.0 L918.0 208.9 L829.2 186.7Z" fill="#e9e1e0"/>
<path d="M826.9 181 L829.2 186.7 L918 208.9 L982.2 181" fill="none" stroke="#111" stroke-width="1.1"/>
<path d="M878.9 185.5 L891.0 181.7 M883.6 188.3 L893.8 181.7 M889.2 192.0 L895.7 181.7 M897.1 192.5 L899.4 182.2 M905.0 192.5 L903.2 184.5 M915.3 192.5 L907.9 185.0 M919.0 188.0 L912.5 185.0 M925.4 191.0 L915.9 183.8 M935.7 189.4 L920.7 184.6 M946.0 186.2 L927.0 183.8 M954.8 182.2 L936.6 182.2 M828.4 186 L836.8 181.3" fill="none" stroke="#111" stroke-width="1"/>
<path d="M556.0 390.0 L562.0 390.5" stroke="#222" stroke-width="1" fill="none"/>
<circle cx="1008" cy="215" r="0.8" fill="#222"/>
<path d="M234.0 181.0 L383.8 181.0 L371.4 229.8 L366.0 238.0 L361.9 241.7 L341.2 248.9 L317.4 252.9 L290.4 252.5 L239.5 245.7 L234.8 224.3Z" fill="#5c5c5c"/>
<path d="M257.0 266.8 L437.0 290.8 L437.0 337.0 L258.0 319.5Z" fill="#5c5c5c"/>
<path d="M437.0 290.8 L487.0 286.2 L494.3 277.6 L499.0 278.6 L509.3 268.8 L515.0 269.8 L601.0 181.0 L691.2 181.0 L542.8 305.4 L532.5 314.7 L532.5 322.0 L519.0 327.0 L512.0 333.0 L497.0 336.4 L482.0 327.5 L437.0 337.0Z" fill="#5c5c5c"/>
<path d="M578.3 272.2 L603.2 276.8 L611.0 283.0 L611.5 294.0 L611.0 305.0 L603.0 312.8 L560.0 309.0 L542.3 306.4Z" fill="#5c5c5c"/>
<path d="M383.8 181 L371.4 229.8 Q368 240 341.2 248.9 Q317 254 290.4 252.5 L239.5 245.7 L234.8 224.3" fill="none" stroke="#111" stroke-width="1.2"/>
<path d="M262 181 V228 M265 181 V228 M267 181 V228 M270 181 V228 M272 181 V228 M275 181 V228 M278 181 V228 M280 181 V228 M283 181 V228 M285 181 V228 M288 181 V228 M291 181 V228 M293 181 V228 M296 181 V228" fill="none" stroke="#111" stroke-width="1" shape-rendering="crispEdges"/>
<path d="M234.8 224.3 L298 229" fill="none" stroke="#111" stroke-width="1"/>
<path d="M262.0 228.5 L298.7 223.0 L330.5 227.1 L369.7 233.7 L369.0 237.5 L331.4 242.1 L280.0 232.8 L262.0 230.5Z" fill="#111"/>
<path d="M325.0 240.5 L369.5 235.0 L368.0 241.0 L355.0 248.0 L336.0 247.0Z" fill="#111"/>
<path d="M336.0 230.0 l30.0 6.0 M338.5 230.4 l27.8 6.2 M341.0 230.8 l25.6 6.4 M343.5 231.2 l23.4 6.6 M346.0 231.6 l21.2 6.8 M348.5 232.0 l19.0 7.0 M351.0 232.4 l16.8 7.2 M353.5 232.8 l14.6 7.4" fill="none" stroke="#666" stroke-width="0.7" stroke-dasharray="2 2"/>
<path d="M262.0 248.8 L300.0 247.8 L336.0 246.6 L362.0 242.0 L370.0 236.0 L366.0 243.5 L350.0 250.3 L326.7 252.9 L291.2 252.9 L262.0 250.8Z" fill="#111"/>
<path d="M262 228 L270 250" fill="none" stroke="#111" stroke-width="0.9"/>
<path d="M257 266.8 L437 290.8 M257 309.1 L437 326.9 M258 319.5 L437 337 M257 266.8 L258 319.5" fill="none" stroke="#111" stroke-width="1.1"/>
<path d="M437 290.8 L487 286.2 L494.3 277.6 L499 278.6 L509.3 268.8 L515 269.8" fill="none" stroke="#111" stroke-width="1"/>
<path d="M439 290.6 V327.5 M442 290.3 V327.5 M445 290.0 V327.5 M448 289.8 V327.5 M451 289.5 V327.5 M454 289.2 V327.5 M457 288.9 V327.5 M460 288.6 V327.5 M463 288.4 V327.5 M466 288.1 V327.5 M469 287.8 V327.5 M472 287.5 V327.5 M475 287.2 V327.5 M478 287.0 V327.5 M481 286.7 V327.5 M484 286.4 V327.5" fill="none" stroke="#111" stroke-width="1" shape-rendering="crispEdges"/>
<path d="M487 286.5 V323 M494.3 277.6 V318 M509.3 268.8 V293 M515 269.8 V293 M509.3 293 L494.3 308.5 M509 293 L526 297 L531 296 L534 291 M532.5 322 L519 327 L488 323" fill="none" stroke="#111" stroke-width="1"/>
<path d="M509.3 287 V294" fill="none" stroke="#111" stroke-width="2.2"/>
<path d="M494.8 310.6 L532.5 314.7 L532.5 322.0 L494.8 317.8Z" fill="#484848" stroke="#111" stroke-width="0.8" stroke-linejoin="round"/>
<path d="M497 311.0 v7 M500 311.3 v7 M502 311.6 v7 M505 311.8 v7 M507 312.1 v7 M510 312.4 v7 M513 312.7 v7 M515 313.0 v7 M518 313.2 v7 M520 313.5 v7 M523 313.8 v7 M526 314.1 v7 M528 314.4 v7 M531 314.6 v7" fill="none" stroke="#111" stroke-width="1" shape-rendering="crispEdges"/>
<path d="M515 269.8 L601 181 M691.2 181 L542.8 305.4 L532.5 314.7 M636.3 181 L516 293" fill="none" stroke="#111" stroke-width="1"/>
<path d="M578.3 272.2 L603.2 276.8 Q611 280 611 290 L611 305 Q610 312 603 312.8 L542.3 306.4" fill="none" stroke="#111" stroke-width="1"/>
<path d="M581 272.5 Q586 292 578 309 M560 291 L611 296" fill="none" stroke="#111" stroke-width="0.9"/>
<path d="M430.0 336.0 L482.3 327.2 L509.4 330.8 L524.8 325.0 L510.0 333.0 L496.7 336.2 L496.7 346.0 L490.4 352.7 L456.7 342.2 L440.0 339.0Z" fill="#111"/>
<path d="M434.0 338 l6 -10 M437.3 338 l6 -10 M440.6 338 l6 -10 M443.9 338 l6 -10 M447.2 338 l6 -10 M450.5 338 l6 -10 M453.8 338 l6 -10 M457.1 338 l6 -10 M460.4 338 l6 -10 M463.7 338 l6 -10 M467.0 338 l6 -10 M470.3 338 l6 -10 M473.6 338 l6 -10 M476.9 338 l6 -10 M480.2 338 l6 -10" fill="none" stroke="#555" stroke-width="0.8"/>
<path d="M439.7 339.2 L456.7 342.2 L490.4 352.7 L496.7 346.0 L506.0 345.5 L510.2 349.0 L510.8 358.0 L510.2 367.0 L508.3 369.9 L461.2 367.6 L458.0 366.8 L442.6 380.3 L442.6 398.2 L416.0 396.8 L408.7 392.9 L408.7 381.3 L439.7 350.3Z" fill="#5c5c5c" stroke="#111" stroke-width="1" stroke-linejoin="round"/>
<path d="M439.7 350.3 V361 L456 362 M409.7 392 L456.1 346.5 M425.2 393.4 L442.6 380.3 M457.5 350.4 L490.4 353.8 M490.4 354.2 L488.5 368 M490.4 354.9 L509.8 356 M470.2 362.4 L482.1 354.2" fill="none" stroke="#111" stroke-width="0.9"/>
<path d="M442.6 380.3 L459.0 380.3 L461.0 383.0 L461.0 397.0 L459.0 398.2 L442.6 398.2Z" fill="#5c5c5c" stroke="#111" stroke-width="1" stroke-linejoin="round"/>
<path d="M442.6 388.6 H461" fill="none" stroke="#111" stroke-width="0.9"/>
<g opacity="0.42">
<ellipse cx="972" cy="296" rx="50" ry="5.5" fill="none" stroke="#8a8a8a" stroke-width="3"/>
<path d="M949.0 256.0 L965.0 253.0 L999.0 256.0 L999.0 292.0 L964.0 294.0 L949.0 291.0Z" fill="#9e9e9e" stroke="#777" stroke-width="0.8" stroke-linejoin="round"/>
<path d="M964.0 253.0 L964.0 294.0" stroke="#777" stroke-width="0.8" fill="none"/>
<text x="968" y="279" font-family="Liberation Sans" font-size="10" font-weight="bold" fill="#555">RIGHT</text>
<text x="951" y="278" font-family="Liberation Sans" font-size="8" fill="#666">[X]</text>
</g>
<rect x="1008.5" y="336.5" width="33" height="114" rx="5" fill="#f2f2f2" fill-opacity="0.55" stroke="#c4c4c4"/>
<circle cx="1034" cy="343" r="3.5" fill="#ddd" stroke="#999" stroke-width="0.8"/>
<circle cx="1025" cy="368" r="10" fill="#e8e8e8" stroke="#8a8a8a" stroke-width="1.2"/>
<circle cx="1025" cy="366" r="6" fill="#f4f4f4" stroke="#8a8a8a" stroke-width="1.2"/>
<path d="M1022 389 h6 l-3 3z" fill="#888"/><path d="M1012 394.5 h26" stroke="#ccc"/>
<rect x="1017" y="402" width="10" height="9" fill="#8cc07a" stroke="#5a9a4a" stroke-width="0.8"/>
<circle cx="1029" cy="413" r="3.5" fill="#fff" stroke="#666"/><path d="M1031.5 415.5 l3 3" stroke="#666" stroke-width="1.4"/>
<path d="M1022 429 h6 l-3 3z" fill="#888"/>
<circle cx="1024" cy="445" r="3.5" fill="#eee" stroke="#aaa"/>
<path d="M993 191.5 h11" stroke="#555" stroke-width="2.4"/>
<rect x="1012.5" y="186.5" width="6" height="7" fill="none" stroke="#555" stroke-width="1.6"/><rect x="1010" y="189" width="6" height="6" fill="#eee" stroke="#555" stroke-width="1.2"/>
<path d="M1029 186 l8 9 M1037 186 l-8 9" stroke="#555" stroke-width="2.2"/></g></svg>
<!-- viewport right scrollbar -->
<div class="a" style="left:1043px;top:176px;width:20px;height:566px;background:#ececec;border-left:1px solid #dedede;"></div>
<div class="a" style="left:1044px;top:442px;width:16px;height:17px;border:1px solid #8d8d8d;border-radius:2px;background:linear-gradient(90deg,#f8f8f8,#d8d8d8);"></div>
<svg style="left:0;top:0" width="1070" height="775">
 <path d="M1048 187 l4 -4 l4 4z" fill="#333"/>
 <path d="M1048 713 l4 4 l4 -4z" fill="#333"/>
</svg>
<!-- view control bar -->
<div class="a" style="left:234px;top:724px;width:371px;height:18px;background:linear-gradient(180deg,#fbfbfb,#ececec);border-top:1px solid #d8d8d8;"></div>
<div class="a" style="left:605px;top:724px;width:438px;height:18px;background:#ebebeb;border-top:1px solid #d8d8d8;"></div>
<div class="a" style="left:817px;top:725px;width:14px;height:16px;border:1px solid #8f8f8f;border-radius:2px;background:linear-gradient(180deg,#fafafa,#d4d4d4);"></div>
<svg style="left:0;top:0" width="1070" height="775"><path d="M614 733 l4 -4 v8z" fill="#333"/><path d="M1033 729 l4 4 l-4 4z" fill="#333"/></svg>
<div class="a" style="left:232px;top:741px;width:831px;height:2px;background:#f6f6f6;border-top:1px solid #8c8c8c;"></div>
<div class="t" style="left:244px;top:726px;font-size:12.2px;color:#1b1b40;transform:scaleX(0.887);transform-origin:0 0;">Perspective</div>
<svg style="left:0;top:0" width="1070" height="775" viewBox="0 0 1070 775">
 <rect x="313.5" y="726.5" width="15" height="11" fill="#fff" stroke="#333"/><rect x="314" y="729" width="14" height="3" fill="#777"/><rect x="317" y="732" width="7" height="3" fill="#999"/>
 <path d="M336 731 l4 -4 h11 v8 l-4 4 h-11z M336 731 h11 l4 -4 M347 731 v8" fill="#9fd0f0" stroke="#2a6fc0" stroke-width="1.1"/>
 <circle cx="361" cy="732" r="4" fill="#ffe070" stroke="#e8a000"/>
 <path d="M361 725 v2 M361 737 v2 M354 732 h2 M366 732 h2 M356 727 l1.5 1.5 M366 727 l-1.5 1.5 M356 737 l1.5 -1.5 M366 737 l-1.5 -1.5" stroke="#e8a000" stroke-width="1.2"/>
 <circle cx="382" cy="731" r="3.8" fill="#d8ecfa" stroke="#2a6fc0"/><rect x="378" y="736" width="7" height="1.5" fill="#333"/>
 <path d="M384 733 l6 6 M390 733 l-6 6" stroke="#d42020" stroke-width="1.8"/>
 <g fill="none" stroke="#444" stroke-width="1"><path d="M398 729 h10 l-2 7 h-6z M395 728 l4 1"/></g><circle cx="409" cy="734" r="2.8" fill="#fff" stroke="#2a6fc0"/>
 <g fill="none" stroke="#a8a8a8" stroke-width="1"><path d="M418 737 v-7 h12 M421 737 v-4 h9"/></g>
 <g fill="none" stroke="#2a6fc0" stroke-width="1.1"><path d="M440 737 v-7 h10 M443 734 h7"/></g><path d="M437 733 h5" stroke="#d42020" stroke-width="1.5"/><circle cx="451" cy="733" r="3" fill="#ffd040" stroke="#e09000"/>
 <g fill="none" stroke="#444" stroke-width="1.1"><path d="M460 738 v-7 l6 -5 l7 5 v7z"/></g><rect x="468" y="733" width="6" height="5" fill="#4fa0a0" stroke="#1f6060"/>
 <g fill="none" stroke="#333" stroke-width="1.1"><path d="M480 731 q3 -4 8 0 q4 5 8 0 q3 -3 4 -2"/><circle cx="485" cy="733" r="2.5"/><circle cx="494" cy="733" r="2.5"/></g>
 <circle cx="510" cy="731" r="2.8" fill="#9fd0f0" stroke="#2a6fc0"/><rect x="509" y="734" width="2" height="3" fill="#2a6fc0"/>
 <g fill="none" stroke="#222" stroke-width="1.2"><rect x="524" y="729" width="12" height="8"/><path d="M526 727 v2 M534 727 v2"/><circle cx="533" cy="734" r="2"/></g>
 <g fill="none" stroke="#444" stroke-width="1"><path d="M544 738 v-7 l5 -4 h6 l4 4 v7 M549 727 v11 M554 727 v11"/></g><path d="M544 738 v-6 h4 v6" fill="#e03030"/><circle cx="557" cy="733" r="3" fill="#9fd0f0" stroke="#2a6fc0"/>
 <g fill="none" stroke="#444" stroke-width="1.1"><path d="M566 731 l3 -3 h9 v7 l-3 3 h-9z M566 731 h9 l3 -3 M575 731 v7"/></g>
 <g fill="none" stroke="#9a9a9a" stroke-width="1"><path d="M585 727 h15 M585 726 v4 M600 726 v4 M585 731 v2 M585 735 v2"/><rect x="593" y="733" width="6" height="5"/></g>
 <path d="M605 726 v15" stroke="#d4d4d4"/>
</svg>

<!-- status bar -->
<div class="a" style="left:8px;top:743px;width:1055px;height:24px;background:linear-gradient(180deg,#f2f2f2 0%,#e2e2e2 50%,#cdcdcd 100%);"></div>
<div class="t" style="left:10px;top:749px;font-size:12.2px;color:#1b1b40;transform:scaleX(0.938);transform-origin:0 0;">Doors : M_Single-Flush : 0762 x 2032mm</div>
<div class="a" style="left:416px;top:745px;width:27px;height:21px;background:#d2d2d2;"></div>
<div class="a" style="left:443px;top:746px;width:206px;height:21px;background:#fff;"></div>
<div class="a" style="left:631px;top:746px;width:1px;height:21px;background:#ececec;"></div>
<div class="a" style="left:652px;top:745px;width:52px;height:21px;background:#d6d6d6;"></div>
<div class="a" style="left:706px;top:745px;width:25px;height:21px;background:#d6d6d6;"></div>
<div class="a" style="left:733px;top:745px;width:25px;height:21px;background:#d6d6d6;"></div>
<div class="a" style="left:759px;top:746px;width:156px;height:21px;background:#fff;"></div>
<div class="a" style="left:898px;top:746px;width:1px;height:21px;background:#ececec;"></div>
<div class="t" style="left:762px;top:749px;font-size:12.2px;color:#6d7aa0;transform:scaleX(1.016);transform-origin:0 0;">Main Model</div>
<div class="t" style="left:677px;top:749px;font-size:12.2px;color:#1b1b40;transform:scaleX(0.983);transform-origin:0 0;">:0</div>
<svg style="left:0;top:0" width="1070" height="775" viewBox="0 0 1070 775">
 <g fill="#a2a2a2"><rect x="421" y="753" width="6" height="10"/><rect x="428" y="756" width="6" height="8"/><rect x="424" y="748" width="5" height="5"/></g>
 <path d="M634 757 h7 l-3.5 4z" fill="#9a9a9a"/>
 <path d="M906 757 h7 l-3.5 4z" fill="#9a9a9a"/>
 <g fill="#a6a6a6"><path d="M659 749 h12 v6 h-6 l-4 4 v-2 h-2z"/><path d="M656 765 l4 -7 l3 2 l-2 5z"/></g>
 <rect x="710.5" y="748.5" width="17" height="15" rx="1.5" fill="#fff" stroke="#333" stroke-width="1.2"/><rect x="710.5" y="748.5" width="17" height="3" fill="#333"/>
 <path d="M714 755 h2 M718 755 h7 M714 758 h2 M718 758 h7 M714 761 h2 M718 761 h7" stroke="#333" stroke-width="1.2"/>
 <rect x="737" y="748" width="16" height="15" fill="#a6a6a6"/><path d="M736 758 h7 M740 755 l3 3 l-3 3" stroke="#fff" stroke-width="1.3" fill="none"/>
 <g fill="#9a9a9a"><rect x="1052" y="763" width="2" height="2"/><rect x="1056" y="763" width="2" height="2"/><rect x="1060" y="763" width="2" height="2"/><rect x="1056" y="759" width="2" height="2"/><rect x="1060" y="759" width="2" height="2"/><rect x="1060" y="755" width="2" height="2"/></g>
 <g fill="#a8a8a8"><rect x="1049" y="738" width="2" height="2"/><rect x="1053" y="738" width="2" height="2"/><rect x="1057" y="738" width="2" height="2"/><rect x="1053" y="734" width="2" height="2"/><rect x="1057" y="734" width="2" height="2"/><rect x="1057" y="730" width="2" height="2"/></g>
</svg>
</body></html>
